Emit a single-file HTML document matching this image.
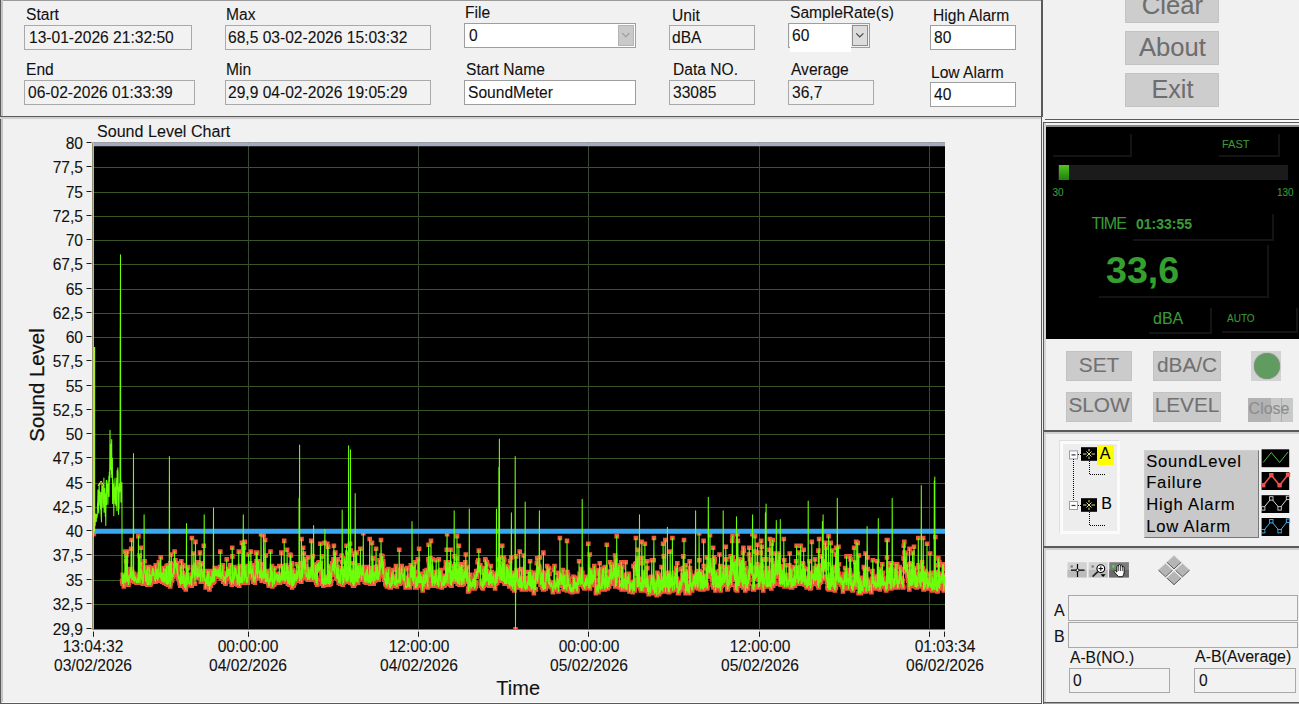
<!DOCTYPE html>
<html lang="en"><head><meta charset="utf-8"><title>SoundMeter</title>
<style>
html,body{margin:0;padding:0;}
body{width:1299px;height:704px;overflow:hidden;background:#f1f1f1;font-family:"Liberation Sans", sans-serif;position:relative;}
.t{position:absolute;white-space:nowrap;}
.b{position:absolute;box-sizing:border-box;}
.r{position:absolute;}
svg{position:absolute;left:0;top:0;}
svg text{font-family:"Liberation Sans", sans-serif;}
</style></head><body>

<div class="r" style="left:0.00px;top:0.00px;width:1043.00px;height:1.00px;background:#9a9a9a;"></div>
<div class="r" style="left:0.00px;top:0.00px;width:1.00px;height:704.00px;background:#5a5a5a;"></div>
<div class="r" style="left:1.00px;top:0.00px;width:1.50px;height:704.00px;background:#c4c4c4;"></div>
<div class="r" style="left:0.00px;top:116.00px;width:1043.00px;height:1.00px;background:#5a5a5a;"></div>
<div class="r" style="left:0.00px;top:117.00px;width:1041.00px;height:2.00px;background:#cfcfcf;"></div>
<div class="r" style="left:1041.00px;top:0.00px;width:2.00px;height:117.00px;background:#5a5a5a;"></div>
<div class="r" style="left:1041.00px;top:117.00px;width:1.00px;height:587.00px;background:#5a5a5a;"></div>
<div class="r" style="left:0.00px;top:703.00px;width:1042.00px;height:1.00px;background:#5a5a5a;"></div>
<div class="r" style="left:2.00px;top:702.00px;width:1039.00px;height:1.00px;background:#fafafa;"></div>
<div class="r" style="left:1045.00px;top:119.00px;width:254.00px;height:1.00px;background:#5a5a5a;"></div>
<div class="r" style="left:1045.00px;top:120.00px;width:254.00px;height:2.00px;background:#fafafa;"></div>
<div class="r" style="left:1043.00px;top:122.00px;width:256.00px;height:1.00px;background:#5a5a5a;"></div>
<div class="r" style="left:1043.00px;top:122.00px;width:1.00px;height:582.00px;background:#5a5a5a;"></div>
<div class="r" style="left:1044.00px;top:123.00px;width:2.00px;height:581.00px;background:#d6d6d6;"></div>
<div class="r" style="left:1046.00px;top:125.00px;width:253.00px;height:2.00px;background:#8a8a8a;"></div>
<div class="r" style="left:1044.00px;top:430.00px;width:255.00px;height:1.50px;background:#5a5a5a;"></div>
<div class="r" style="left:1044.00px;top:431.50px;width:255.00px;height:2.00px;background:#d0d0d0;"></div>
<div class="r" style="left:1044.00px;top:546.00px;width:255.00px;height:1.50px;background:#5a5a5a;"></div>
<div class="r" style="left:1044.00px;top:547.50px;width:255.00px;height:2.00px;background:#d0d0d0;"></div>
<div class="r" style="left:1043.00px;top:702.00px;width:256.00px;height:1.00px;background:#5a5a5a;"></div>
<div class="r" style="left:1044.00px;top:703.00px;width:255.00px;height:1.00px;background:#a4a4a4;"></div>
<div class="t" style="top:6.35px;font-size:16.42px;line-height:16.42px;color:#111;left:25.80px;transform:scaleX(0.95);transform-origin:left center;-webkit-text-stroke:0.1px #111;">Start</div>
<div class="b" style="left:24.00px;top:25.00px;width:168.00px;height:25.00px;background:#f2f2f2;border:1px solid #a9a9a9;"></div>
<div class="t" style="top:29.25px;font-size:16.42px;line-height:16.42px;color:#111;left:28.60px;transform:scaleX(0.95);transform-origin:left center;-webkit-text-stroke:0.1px #111;">13-01-2026 21:32:50</div>
<div class="t" style="top:61.15px;font-size:16.42px;line-height:16.42px;color:#111;left:26.30px;transform:scaleX(0.95);transform-origin:left center;-webkit-text-stroke:0.1px #111;">End</div>
<div class="b" style="left:24.00px;top:80.00px;width:171.00px;height:25.00px;background:#f2f2f2;border:1px solid #a9a9a9;"></div>
<div class="t" style="top:83.95px;font-size:16.42px;line-height:16.42px;color:#111;left:27.60px;transform:scaleX(0.95);transform-origin:left center;-webkit-text-stroke:0.1px #111;">06-02-2026 01:33:39</div>
<div class="t" style="top:5.95px;font-size:16.42px;line-height:16.42px;color:#111;left:225.60px;transform:scaleX(0.95);transform-origin:left center;-webkit-text-stroke:0.1px #111;">Max</div>
<div class="b" style="left:225.00px;top:25.00px;width:206.00px;height:25.00px;background:#f2f2f2;border:1px solid #a9a9a9;"></div>
<div class="t" style="top:28.95px;font-size:16.42px;line-height:16.42px;color:#111;left:228.00px;transform:scaleX(0.95);transform-origin:left center;-webkit-text-stroke:0.1px #111;">68,5 03-02-2026 15:03:32</div>
<div class="t" style="top:60.95px;font-size:16.42px;line-height:16.42px;color:#111;left:225.60px;transform:scaleX(0.95);transform-origin:left center;-webkit-text-stroke:0.1px #111;">Min</div>
<div class="b" style="left:225.00px;top:80.00px;width:206.00px;height:25.00px;background:#f2f2f2;border:1px solid #a9a9a9;"></div>
<div class="t" style="top:83.95px;font-size:16.42px;line-height:16.42px;color:#111;left:228.00px;transform:scaleX(0.95);transform-origin:left center;-webkit-text-stroke:0.1px #111;">29,9 04-02-2026 19:05:29</div>
<div class="t" style="top:3.95px;font-size:16.42px;line-height:16.42px;color:#111;left:465.00px;transform:scaleX(0.95);transform-origin:left center;-webkit-text-stroke:0.1px #111;">File</div>
<div class="b" style="left:464.00px;top:23.00px;width:172.00px;height:25.00px;background:#fff;border:1px solid #9e9e9e;"></div>
<div class="b" style="left:618.00px;top:25.00px;width:16.00px;height:21.00px;background:#c9c9c9;border:1px solid #b4b4b4;"></div>
<div class="t" style="top:26.95px;font-size:16.42px;line-height:16.42px;color:#111;left:468.60px;transform:scaleX(0.95);transform-origin:left center;-webkit-text-stroke:0.1px #111;">0</div>
<div class="t" style="top:60.95px;font-size:16.42px;line-height:16.42px;color:#111;left:466.00px;transform:scaleX(0.95);transform-origin:left center;-webkit-text-stroke:0.1px #111;">Start Name</div>
<div class="b" style="left:464.00px;top:80.00px;width:172.00px;height:25.00px;background:#fff;border:1px solid #9e9e9e;"></div>
<div class="t" style="top:83.55px;font-size:16.42px;line-height:16.42px;color:#111;left:467.60px;transform:scaleX(0.95);transform-origin:left center;-webkit-text-stroke:0.1px #111;">SoundMeter</div>
<div class="t" style="top:6.75px;font-size:16.42px;line-height:16.42px;color:#111;left:671.60px;transform:scaleX(0.95);transform-origin:left center;-webkit-text-stroke:0.1px #111;">Unit</div>
<div class="b" style="left:669.00px;top:25.00px;width:86.00px;height:25.00px;background:#f2f2f2;border:1px solid #a9a9a9;"></div>
<div class="t" style="top:28.95px;font-size:16.42px;line-height:16.42px;color:#111;left:672.40px;transform:scaleX(0.95);transform-origin:left center;-webkit-text-stroke:0.1px #111;">dBA</div>
<div class="t" style="top:60.95px;font-size:16.42px;line-height:16.42px;color:#111;left:673.00px;transform:scaleX(0.95);transform-origin:left center;-webkit-text-stroke:0.1px #111;">Data NO.</div>
<div class="b" style="left:669.00px;top:80.00px;width:86.00px;height:25.00px;background:#f2f2f2;border:1px solid #a9a9a9;"></div>
<div class="t" style="top:83.55px;font-size:16.42px;line-height:16.42px;color:#111;left:673.40px;transform:scaleX(0.95);transform-origin:left center;-webkit-text-stroke:0.1px #111;">33085</div>
<div class="t" style="top:4.35px;font-size:16.42px;line-height:16.42px;color:#111;left:790.00px;transform:scaleX(0.95);transform-origin:left center;-webkit-text-stroke:0.1px #111;">SampleRate(s)</div>
<div class="b" style="left:788.00px;top:23.00px;width:82.00px;height:25.00px;background:#f1f1f1;border:1px solid #9e9e9e;"></div>
<div class="r" style="left:790.00px;top:24.00px;width:61.00px;height:28.00px;background:#fff;"></div>
<div class="b" style="left:852.00px;top:25.00px;width:16.00px;height:21.00px;background:#dcdcdc;border:1px solid #8e8e8e;"></div>
<div class="t" style="top:26.95px;font-size:16.42px;line-height:16.42px;color:#111;left:792.00px;transform:scaleX(0.95);transform-origin:left center;-webkit-text-stroke:0.1px #111;">60</div>
<div class="t" style="top:60.95px;font-size:16.42px;line-height:16.42px;color:#111;left:790.60px;transform:scaleX(0.95);transform-origin:left center;-webkit-text-stroke:0.1px #111;">Average</div>
<div class="b" style="left:788.00px;top:80.00px;width:86.00px;height:25.00px;background:#f2f2f2;border:1px solid #a9a9a9;"></div>
<div class="t" style="top:83.55px;font-size:16.42px;line-height:16.42px;color:#111;left:792.00px;transform:scaleX(0.95);transform-origin:left center;-webkit-text-stroke:0.1px #111;">36,7</div>
<div class="t" style="top:6.75px;font-size:16.42px;line-height:16.42px;color:#111;left:932.60px;transform:scaleX(0.95);transform-origin:left center;-webkit-text-stroke:0.1px #111;">High Alarm</div>
<div class="b" style="left:930.00px;top:25.00px;width:86.00px;height:25.00px;background:#fff;border:1px solid #9e9e9e;"></div>
<div class="t" style="top:28.95px;font-size:16.42px;line-height:16.42px;color:#111;left:934.00px;transform:scaleX(0.95);transform-origin:left center;-webkit-text-stroke:0.1px #111;">80</div>
<div class="t" style="top:63.95px;font-size:16.42px;line-height:16.42px;color:#111;left:931.40px;transform:scaleX(0.95);transform-origin:left center;-webkit-text-stroke:0.1px #111;">Low Alarm</div>
<div class="b" style="left:930.00px;top:82.00px;width:86.00px;height:25.00px;background:#fff;border:1px solid #9e9e9e;"></div>
<div class="t" style="top:85.95px;font-size:16.42px;line-height:16.42px;color:#111;left:934.00px;transform:scaleX(0.95);transform-origin:left center;-webkit-text-stroke:0.1px #111;">40</div>
<svg width="1299" height="704" style="pointer-events:none"><path d="M622.3 33.2 L625.8 36.8 L629.3 33.2" fill="none" stroke="#9a9a9a" stroke-width="1.1"/><path d="M856.2 33.4 L859.8 37 L863.4 33.4" fill="none" stroke="#444" stroke-width="1.1"/></svg>
<div class="b" style="left:1125.40px;top:-10.60px;width:94.00px;height:33.60px;background:#cdcdcd;border:1px solid #c3c3c3;"></div>
<div class="t" style="top:-6.67px;font-size:25.6px;line-height:25.6px;color:#6e6e6e;left:972.40px;width:400px;text-align:center;-webkit-text-stroke:0.1px #6e6e6e;">Clear</div>
<div class="b" style="left:1125.40px;top:31.40px;width:94.00px;height:33.60px;background:#cdcdcd;border:1px solid #c3c3c3;"></div>
<div class="t" style="top:34.73px;font-size:25.6px;line-height:25.6px;color:#6e6e6e;left:972.40px;width:400px;text-align:center;-webkit-text-stroke:0.1px #6e6e6e;">About</div>
<div class="b" style="left:1125.40px;top:73.40px;width:94.00px;height:33.60px;background:#cdcdcd;border:1px solid #c3c3c3;"></div>
<div class="t" style="top:77.07px;font-size:25.2px;line-height:25.2px;color:#6e6e6e;left:972.40px;width:400px;text-align:center;-webkit-text-stroke:0.1px #6e6e6e;">Exit</div>
<div class="r" style="left:1046.00px;top:127.00px;width:253.00px;height:211.60px;background:#000;"></div>
<div class="r" style="left:1053.00px;top:155.00px;width:78.50px;height:1.50px;background:#141414;"></div>
<div class="r" style="left:1130.00px;top:134.00px;width:1.50px;height:21.00px;background:#141414;"></div>
<div class="r" style="left:1219.00px;top:155.00px;width:60.50px;height:1.50px;background:#141414;"></div>
<div class="r" style="left:1278.00px;top:134.00px;width:1.50px;height:21.00px;background:#141414;"></div>
<div class="r" style="left:1133.00px;top:239.00px;width:140.50px;height:1.50px;background:#141414;"></div>
<div class="r" style="left:1272.00px;top:214.00px;width:1.50px;height:25.00px;background:#141414;"></div>
<div class="r" style="left:1099.00px;top:296.00px;width:169.50px;height:1.50px;background:#141414;"></div>
<div class="r" style="left:1267.00px;top:245.00px;width:1.50px;height:51.00px;background:#141414;"></div>
<div class="r" style="left:1149.00px;top:332.00px;width:62.50px;height:1.50px;background:#141414;"></div>
<div class="r" style="left:1210.00px;top:308.00px;width:1.50px;height:24.00px;background:#141414;"></div>
<div class="r" style="left:1222.00px;top:331.00px;width:75.50px;height:1.50px;background:#141414;"></div>
<div class="r" style="left:1296.00px;top:308.00px;width:1.50px;height:23.00px;background:#141414;"></div>
<div class="t" style="top:138.94px;font-size:11px;line-height:11px;color:#3a9a38;left:1222.00px;-webkit-text-stroke:0.1px #3a9a38;">FAST</div>
<div class="r" style="left:1058.00px;top:165.00px;width:230.00px;height:15.00px;background:#1b1b1b;"></div>
<div class="r" style="left:1059.00px;top:165.00px;width:10.00px;height:15.00px;background:linear-gradient(#55c420,#2f9c12 60%,#267f10);"></div>
<div class="t" style="top:188.19px;font-size:10px;line-height:10px;color:#3a9a38;left:1052.40px;-webkit-text-stroke:0.1px #3a9a38;">30</div>
<div class="t" style="top:188.19px;font-size:10px;line-height:10px;color:#3a9a38;left:1277.00px;-webkit-text-stroke:0.1px #3a9a38;">130</div>
<div class="t" style="top:216.31px;font-size:16px;line-height:16px;color:#3a9a38;letter-spacing:-1px;left:1091.60px;-webkit-text-stroke:0.1px #3a9a38;">TIME</div>
<div class="t" style="top:216.90px;font-size:14px;line-height:14px;color:#3a9a38;font-weight:bold;left:1136.00px;-webkit-text-stroke:0.1px #3a9a38;">01:33:55</div>
<div class="t" style="top:251.77px;font-size:37.6px;line-height:37.6px;color:#35a030;font-weight:bold;left:1106.00px;-webkit-text-stroke:0.1px #35a030;">33,6</div>
<div class="t" style="top:311.11px;font-size:16px;line-height:16px;color:#3a9a38;left:1153.00px;-webkit-text-stroke:0.1px #3a9a38;">dBA</div>
<div class="t" style="top:314.39px;font-size:10px;line-height:10px;color:#3a9a38;left:1227.00px;-webkit-text-stroke:0.1px #3a9a38;">AUTO</div>
<div class="b" style="left:1065.60px;top:351.40px;width:66.80px;height:30.00px;background:#cbcbcb;border:1px solid #c3c3c3;"></div>
<div class="t" style="top:354.99px;font-size:20.8px;line-height:20.8px;color:#717171;left:899.00px;width:400px;text-align:center;-webkit-text-stroke:0.1px #717171;">SET</div>
<div class="b" style="left:1153.40px;top:351.40px;width:67.20px;height:30.00px;background:#cbcbcb;border:1px solid #c3c3c3;"></div>
<div class="t" style="top:354.99px;font-size:20.8px;line-height:20.8px;color:#717171;left:987.00px;width:400px;text-align:center;-webkit-text-stroke:0.1px #717171;">dBA/C</div>
<div class="b" style="left:1065.60px;top:392.40px;width:66.80px;height:29.60px;background:#cbcbcb;border:1px solid #c3c3c3;"></div>
<div class="t" style="top:395.39px;font-size:20.8px;line-height:20.8px;color:#717171;left:899.00px;width:400px;text-align:center;-webkit-text-stroke:0.1px #717171;">SLOW</div>
<div class="b" style="left:1153.40px;top:392.40px;width:67.20px;height:29.60px;background:#cbcbcb;border:1px solid #c3c3c3;"></div>
<div class="t" style="top:395.39px;font-size:20.8px;line-height:20.8px;color:#717171;left:987.00px;width:400px;text-align:center;-webkit-text-stroke:0.1px #717171;">LEVEL</div>
<div class="r" style="left:1251.00px;top:351.00px;width:29.60px;height:29.60px;background:#d2d2d2;"></div>
<div class="r" style="left:1253.6px;top:353.4px;width:26px;height:26px;border-radius:50%;background:#609c60;box-shadow:0 0 0 1px #7c917c inset, 0 0 0 1px #c2cbc2;"></div>
<div class="r" style="left:1248.00px;top:398.00px;width:44.60px;height:24.40px;background:#c9c9c9;"></div>
<div class="r" style="left:1248.00px;top:398.00px;width:23.00px;height:24.40px;background:#b2b2b2;"></div>
<div class="r" style="left:1281.00px;top:398.00px;width:1.00px;height:24.40px;background:#adadad;"></div>
<div class="t" style="top:400.51px;font-size:16px;line-height:16px;color:#8d8d8d;left:1248.60px;-webkit-text-stroke:0.1px #8d8d8d;">Close</div>
<div class="b" style="left:1060.00px;top:441.30px;width:60.00px;height:93.00px;background:#ededed;border:3px solid #fbfbfb;box-shadow:-1px -1px 0 #dedede;"></div>
<div class="r" style="left:1097.00px;top:445.10px;width:16.90px;height:19.80px;background:#ffff00;"></div>
<div class="t" style="top:446.31px;font-size:16px;line-height:16px;color:#000;left:1099.70px;-webkit-text-stroke:0.1px #000;">A</div>
<div class="t" style="top:496.31px;font-size:16px;line-height:16px;color:#000;left:1101.20px;-webkit-text-stroke:0.1px #000;">B</div>
<div class="b" style="left:1143.70px;top:449.70px;width:115.30px;height:88.00px;background:#c9c9c9;border:1px solid #cfcfcf;border-right-color:#777;border-bottom-color:#777;"></div>
<div class="t" style="top:453.50px;font-size:16.6px;line-height:16.6px;color:#000;letter-spacing:0.8px;left:1146.20px;-webkit-text-stroke:0.1px #000;">SoundLevel</div>
<div class="t" style="top:475.40px;font-size:16.6px;line-height:16.6px;color:#000;letter-spacing:0.8px;left:1146.20px;-webkit-text-stroke:0.1px #000;">Failure</div>
<div class="t" style="top:497.00px;font-size:16.6px;line-height:16.6px;color:#000;letter-spacing:0.8px;left:1146.20px;-webkit-text-stroke:0.1px #000;">High Alarm</div>
<div class="t" style="top:519.40px;font-size:16.6px;line-height:16.6px;color:#000;letter-spacing:0.8px;left:1146.20px;-webkit-text-stroke:0.1px #000;">Low Alarm</div>
<svg width="1299" height="704"><rect x="1069.5" y="450.9" width="8" height="8" fill="#fff" stroke="#9a9aa8" stroke-width="1"/><path d="M1071.5 454.9 h4" stroke="#334" stroke-width="1.2"/><path d="M1078 454.5 H1081" stroke="#000" stroke-dasharray="1 1"/><rect x="1081" y="447.2" width="16" height="13.6" fill="#000"/><path d="M1083 454.0 h3.5 M1091.5 454.0 h3.5 M1089 449.0 v2.4 M1089 456.6 v2.4 M1086.5 451.5 l5 5 M1091.5 451.5 l-5 5" stroke="#e4e48a" stroke-width="1" fill="none"/><rect x="1069.5" y="501.5" width="8" height="8" fill="#fff" stroke="#9a9aa8" stroke-width="1"/><path d="M1071.5 505.5 h4" stroke="#334" stroke-width="1.2"/><path d="M1078 505.5 H1081" stroke="#000" stroke-dasharray="1 1"/><rect x="1081" y="498.2" width="16" height="13.6" fill="#000"/><path d="M1083 505.0 h3.5 M1091.5 505.0 h3.5 M1089 500.0 v2.4 M1089 507.6 v2.4 M1086.5 502.5 l5 5 M1091.5 502.5 l-5 5" stroke="#e4e48a" stroke-width="1" fill="none"/><path d="M1073.5 459 V501" stroke="#000" stroke-width="1" stroke-dasharray="1 1"/><path d="M1089.5 461 V474.5 H1106" stroke="#000" stroke-width="1" stroke-dasharray="1 1" fill="none"/><path d="M1089.5 512 V525.5 H1105" stroke="#000" stroke-width="1" stroke-dasharray="1 1" fill="none"/><rect x="1261.6" y="449.3" width="27.6" height="17.9" fill="#000"/><path d="M1263.2 462.5 L1271.3 452.5 L1279.6 462.5 L1288.0 452.0" fill="none" stroke="#55b84c" stroke-width="1"/><rect x="1261.6" y="472" width="27.6" height="18.0" fill="#000"/><path d="M1263.2 485.2 L1271.3 475.2 L1279.6 485.2 L1288.0 474.7" fill="none" stroke="#f0504c" stroke-width="1.6"/><rect x="1261.0" y="483.0" width="4.4" height="4.4" fill="#f0504c"/><rect x="1269.1" y="473.0" width="4.4" height="4.4" fill="#f0504c"/><rect x="1277.4" y="483.0" width="4.4" height="4.4" fill="#f0504c"/><rect x="1285.8" y="472.5" width="4.4" height="4.4" fill="#f0504c"/><rect x="1261.6" y="495.2" width="27.6" height="17.8" fill="#000"/><path d="M1263.2 508.4 L1271.3 498.4 L1279.6 508.4 L1288.0 497.9" fill="none" stroke="#d8d8d8" stroke-width="1"/><rect x="1261.5" y="506.7" width="3.4" height="3.4" fill="#000" stroke="#d8d8d8" stroke-width="0.9"/><rect x="1269.6" y="496.7" width="3.4" height="3.4" fill="#000" stroke="#d8d8d8" stroke-width="0.9"/><rect x="1277.9" y="506.7" width="3.4" height="3.4" fill="#000" stroke="#d8d8d8" stroke-width="0.9"/><rect x="1286.3" y="496.2" width="3.4" height="3.4" fill="#000" stroke="#d8d8d8" stroke-width="0.9"/><rect x="1261.6" y="518" width="27.6" height="18.0" fill="#000"/><path d="M1263.2 531.2 L1271.3 521.2 L1279.6 531.2 L1288.0 520.7" fill="none" stroke="#4fb2f2" stroke-width="1"/><rect x="1261.5" y="529.5" width="3.4" height="3.4" fill="#000" stroke="#4fb2f2" stroke-width="0.9"/><rect x="1269.6" y="519.5" width="3.4" height="3.4" fill="#000" stroke="#4fb2f2" stroke-width="0.9"/><rect x="1277.9" y="529.5" width="3.4" height="3.4" fill="#000" stroke="#4fb2f2" stroke-width="0.9"/><rect x="1286.3" y="519.0" width="3.4" height="3.4" fill="#000" stroke="#4fb2f2" stroke-width="0.9"/><rect x="1067.5" y="562.2" width="19.3" height="15.2" fill="#d2d2d2"/><rect x="1067.5" y="569.8" width="19.3" height="7.6" fill="#bcbcbc"/><rect x="1088.7" y="562.2" width="19.1" height="15.2" fill="#d2d2d2"/><rect x="1088.7" y="569.8" width="19.1" height="7.6" fill="#bcbcbc"/><rect x="1109.3" y="562.2" width="19.6" height="15.2" fill="#7c7c7c"/><rect x="1109.3" y="569.8" width="19.6" height="7.6" fill="#6a6a6a"/><path d="M1077.5 564 V577 M1071 570.2 H1084.5" stroke="#000" stroke-width="1.2"/><circle cx="1077.5" cy="570.2" r="1.4" fill="#fff" stroke="#000" stroke-width="0.8"/><rect x="1070.6" y="565.4" width="2.2" height="2.2" fill="#777"/><circle cx="1100.8" cy="568.6" r="3.9" fill="#fff" stroke="#000" stroke-width="1.1"/><path d="M1098.6 568.6 h4.4 M1100.8 566.4 v4.4" stroke="#000" stroke-width="1"/><path d="M1097.8 571.6 L1092.6 576.6" stroke="#222" stroke-width="1.7"/><path d="M1100.6 574.3 h5 l-2.5 2.6 z" fill="#000"/><rect x="1091.6" y="565.4" width="2.2" height="2.2" fill="#777"/><path d="M1115.3 570.6 l1.6 1.5 V566.3 q0.9 -1.2 1.8 0 V565 q0.9 -1.2 1.8 0 V565.6 q0.9 -1.2 1.8 0 V567 q0.9 -1.1 1.8 0 V572.5 q-0.2 2.6 -1.6 4.2 H1118.6 q-2.2 -2.4 -4.6 -5 q0.4 -1.3 1.3 -1.1 z" fill="#fff" stroke="#000" stroke-width="0.9" stroke-linejoin="round"/><path d="M1118.7 566.5 V571 M1120.5 565.5 V571 M1122.3 566 V571" stroke="#000" stroke-width="0.7"/><rect x="1112.2" y="565.2" width="2.4" height="2.4" fill="#44e044"/><path d="M1174.0 555.5 L1181.2 562.2 L1174.0 568.9 L1166.8 562.2 Z" fill="#b5b5b5"/><path d="M1181.2 562.2 L1174.0 568.9 L1166.8 562.2" fill="none" stroke="#4a4a4a" stroke-width="0.9"/><path d="M1166.8 562.2 L1174.0 555.5 L1181.2 562.2" fill="none" stroke="#d4d4d4" stroke-width="0.7"/><path d="M1165.5 563.4 L1172.7 570.1 L1165.5 576.8 L1158.3 570.1 Z" fill="#b5b5b5"/><path d="M1172.7 570.1 L1165.5 576.8 L1158.3 570.1" fill="none" stroke="#4a4a4a" stroke-width="0.9"/><path d="M1158.3 570.1 L1165.5 563.4 L1172.7 570.1" fill="none" stroke="#d4d4d4" stroke-width="0.7"/><path d="M1182.5 563.4 L1189.7 570.1 L1182.5 576.8 L1175.3 570.1 Z" fill="#b5b5b5"/><path d="M1189.7 570.1 L1182.5 576.8 L1175.3 570.1" fill="none" stroke="#4a4a4a" stroke-width="0.9"/><path d="M1175.3 570.1 L1182.5 563.4 L1189.7 570.1" fill="none" stroke="#d4d4d4" stroke-width="0.7"/><path d="M1174.0 571.3 L1181.2 578.0 L1174.0 584.7 L1166.8 578.0 Z" fill="#b5b5b5"/><path d="M1181.2 578.0 L1174.0 584.7 L1166.8 578.0" fill="none" stroke="#4a4a4a" stroke-width="0.9"/><path d="M1166.8 578.0 L1174.0 571.3 L1181.2 578.0" fill="none" stroke="#d4d4d4" stroke-width="0.7"/></svg>
<div class="t" style="top:602.69px;font-size:16.84px;line-height:16.84px;color:#111;left:1053.80px;transform:scaleX(0.95);transform-origin:left center;-webkit-text-stroke:0.1px #111;">A</div>
<div class="b" style="left:1068.00px;top:595.00px;width:230.00px;height:26.00px;background:#f2f2f2;border:1px solid #a9a9a9;"></div>
<div class="t" style="top:629.49px;font-size:16.84px;line-height:16.84px;color:#111;left:1053.80px;transform:scaleX(0.95);transform-origin:left center;-webkit-text-stroke:0.1px #111;">B</div>
<div class="b" style="left:1068.00px;top:622.00px;width:230.00px;height:26.00px;background:#f2f2f2;border:1px solid #a9a9a9;"></div>
<div class="t" style="top:649.35px;font-size:16.42px;line-height:16.42px;color:#111;left:1069.50px;transform:scaleX(0.95);transform-origin:left center;-webkit-text-stroke:0.1px #111;">A-B(NO.)</div>
<div class="t" style="top:649.04px;font-size:16.79px;line-height:16.79px;color:#111;left:1194.80px;transform:scaleX(0.95);transform-origin:left center;-webkit-text-stroke:0.1px #111;">A-B(Average)</div>
<div class="b" style="left:1069.00px;top:668.00px;width:101.00px;height:25.00px;background:#f2f2f2;border:1px solid #a9a9a9;"></div>
<div class="b" style="left:1194.00px;top:668.00px;width:102.00px;height:25.00px;background:#f2f2f2;border:1px solid #a9a9a9;"></div>
<div class="t" style="top:672.35px;font-size:16.42px;line-height:16.42px;color:#111;left:1073.40px;transform:scaleX(0.95);transform-origin:left center;-webkit-text-stroke:0.1px #111;">0</div>
<div class="t" style="top:672.35px;font-size:16.42px;line-height:16.42px;color:#111;left:1198.50px;transform:scaleX(0.95);transform-origin:left center;-webkit-text-stroke:0.1px #111;">0</div>
<div class="t" style="top:124.11px;font-size:16.7px;line-height:16.7px;color:#111;left:96.60px;transform:scaleX(0.964);transform-origin:left center;-webkit-text-stroke:0.1px #111;">Sound Level Chart</div>
<div class="t" style="top:134.85px;font-size:16.42px;line-height:16.42px;color:#111;left:-316.80px;width:400px;text-align:right;transform:scaleX(0.95);transform-origin:right center;-webkit-text-stroke:0.1px #111;">80</div>
<div class="t" style="top:158.85px;font-size:16.42px;line-height:16.42px;color:#111;left:-316.80px;width:400px;text-align:right;transform:scaleX(0.95);transform-origin:right center;-webkit-text-stroke:0.1px #111;">77,5</div>
<div class="t" style="top:183.85px;font-size:16.42px;line-height:16.42px;color:#111;left:-316.80px;width:400px;text-align:right;transform:scaleX(0.95);transform-origin:right center;-webkit-text-stroke:0.1px #111;">75</div>
<div class="t" style="top:207.85px;font-size:16.42px;line-height:16.42px;color:#111;left:-316.80px;width:400px;text-align:right;transform:scaleX(0.95);transform-origin:right center;-webkit-text-stroke:0.1px #111;">72,5</div>
<div class="t" style="top:231.85px;font-size:16.42px;line-height:16.42px;color:#111;left:-316.80px;width:400px;text-align:right;transform:scaleX(0.95);transform-origin:right center;-webkit-text-stroke:0.1px #111;">70</div>
<div class="t" style="top:255.85px;font-size:16.42px;line-height:16.42px;color:#111;left:-316.80px;width:400px;text-align:right;transform:scaleX(0.95);transform-origin:right center;-webkit-text-stroke:0.1px #111;">67,5</div>
<div class="t" style="top:280.85px;font-size:16.42px;line-height:16.42px;color:#111;left:-316.80px;width:400px;text-align:right;transform:scaleX(0.95);transform-origin:right center;-webkit-text-stroke:0.1px #111;">65</div>
<div class="t" style="top:304.85px;font-size:16.42px;line-height:16.42px;color:#111;left:-316.80px;width:400px;text-align:right;transform:scaleX(0.95);transform-origin:right center;-webkit-text-stroke:0.1px #111;">62,5</div>
<div class="t" style="top:328.85px;font-size:16.42px;line-height:16.42px;color:#111;left:-316.80px;width:400px;text-align:right;transform:scaleX(0.95);transform-origin:right center;-webkit-text-stroke:0.1px #111;">60</div>
<div class="t" style="top:352.85px;font-size:16.42px;line-height:16.42px;color:#111;left:-316.80px;width:400px;text-align:right;transform:scaleX(0.95);transform-origin:right center;-webkit-text-stroke:0.1px #111;">57,5</div>
<div class="t" style="top:377.85px;font-size:16.42px;line-height:16.42px;color:#111;left:-316.80px;width:400px;text-align:right;transform:scaleX(0.95);transform-origin:right center;-webkit-text-stroke:0.1px #111;">55</div>
<div class="t" style="top:401.85px;font-size:16.42px;line-height:16.42px;color:#111;left:-316.80px;width:400px;text-align:right;transform:scaleX(0.95);transform-origin:right center;-webkit-text-stroke:0.1px #111;">52,5</div>
<div class="t" style="top:425.85px;font-size:16.42px;line-height:16.42px;color:#111;left:-316.80px;width:400px;text-align:right;transform:scaleX(0.95);transform-origin:right center;-webkit-text-stroke:0.1px #111;">50</div>
<div class="t" style="top:449.85px;font-size:16.42px;line-height:16.42px;color:#111;left:-316.80px;width:400px;text-align:right;transform:scaleX(0.95);transform-origin:right center;-webkit-text-stroke:0.1px #111;">47,5</div>
<div class="t" style="top:474.85px;font-size:16.42px;line-height:16.42px;color:#111;left:-316.80px;width:400px;text-align:right;transform:scaleX(0.95);transform-origin:right center;-webkit-text-stroke:0.1px #111;">45</div>
<div class="t" style="top:498.85px;font-size:16.42px;line-height:16.42px;color:#111;left:-316.80px;width:400px;text-align:right;transform:scaleX(0.95);transform-origin:right center;-webkit-text-stroke:0.1px #111;">42,5</div>
<div class="t" style="top:522.85px;font-size:16.42px;line-height:16.42px;color:#111;left:-316.80px;width:400px;text-align:right;transform:scaleX(0.95);transform-origin:right center;-webkit-text-stroke:0.1px #111;">40</div>
<div class="t" style="top:546.85px;font-size:16.42px;line-height:16.42px;color:#111;left:-316.80px;width:400px;text-align:right;transform:scaleX(0.95);transform-origin:right center;-webkit-text-stroke:0.1px #111;">37,5</div>
<div class="t" style="top:571.85px;font-size:16.42px;line-height:16.42px;color:#111;left:-316.80px;width:400px;text-align:right;transform:scaleX(0.95);transform-origin:right center;-webkit-text-stroke:0.1px #111;">35</div>
<div class="t" style="top:595.85px;font-size:16.42px;line-height:16.42px;color:#111;left:-316.80px;width:400px;text-align:right;transform:scaleX(0.95);transform-origin:right center;-webkit-text-stroke:0.1px #111;">32,5</div>
<div class="t" style="top:620.85px;font-size:16.42px;line-height:16.42px;color:#111;left:-316.80px;width:400px;text-align:right;transform:scaleX(0.95);transform-origin:right center;-webkit-text-stroke:0.1px #111;">29,9</div>
<div class="t" style="top:637.75px;font-size:16.42px;line-height:16.42px;color:#111;left:-106.70px;width:400px;text-align:center;transform:scaleX(0.95);transform-origin:center center;-webkit-text-stroke:0.1px #111;">13:04:32</div>
<div class="t" style="top:656.75px;font-size:16.42px;line-height:16.42px;color:#111;left:-106.70px;width:400px;text-align:center;transform:scaleX(0.95);transform-origin:center center;-webkit-text-stroke:0.1px #111;">03/02/2026</div>
<div class="t" style="top:637.75px;font-size:16.42px;line-height:16.42px;color:#111;left:48.42px;width:400px;text-align:center;transform:scaleX(0.95);transform-origin:center center;-webkit-text-stroke:0.1px #111;">00:00:00</div>
<div class="t" style="top:656.75px;font-size:16.42px;line-height:16.42px;color:#111;left:48.42px;width:400px;text-align:center;transform:scaleX(0.95);transform-origin:center center;-webkit-text-stroke:0.1px #111;">04/02/2026</div>
<div class="t" style="top:637.75px;font-size:16.42px;line-height:16.42px;color:#111;left:218.82px;width:400px;text-align:center;transform:scaleX(0.95);transform-origin:center center;-webkit-text-stroke:0.1px #111;">12:00:00</div>
<div class="t" style="top:656.75px;font-size:16.42px;line-height:16.42px;color:#111;left:218.82px;width:400px;text-align:center;transform:scaleX(0.95);transform-origin:center center;-webkit-text-stroke:0.1px #111;">04/02/2026</div>
<div class="t" style="top:637.75px;font-size:16.42px;line-height:16.42px;color:#111;left:389.22px;width:400px;text-align:center;transform:scaleX(0.95);transform-origin:center center;-webkit-text-stroke:0.1px #111;">00:00:00</div>
<div class="t" style="top:656.75px;font-size:16.42px;line-height:16.42px;color:#111;left:389.22px;width:400px;text-align:center;transform:scaleX(0.95);transform-origin:center center;-webkit-text-stroke:0.1px #111;">05/02/2026</div>
<div class="t" style="top:637.75px;font-size:16.42px;line-height:16.42px;color:#111;left:559.62px;width:400px;text-align:center;transform:scaleX(0.95);transform-origin:center center;-webkit-text-stroke:0.1px #111;">12:00:00</div>
<div class="t" style="top:656.75px;font-size:16.42px;line-height:16.42px;color:#111;left:559.62px;width:400px;text-align:center;transform:scaleX(0.95);transform-origin:center center;-webkit-text-stroke:0.1px #111;">05/02/2026</div>
<div class="t" style="top:637.75px;font-size:16.42px;line-height:16.42px;color:#111;left:745.02px;width:400px;text-align:center;transform:scaleX(0.95);transform-origin:center center;-webkit-text-stroke:0.1px #111;">01:03:34</div>
<div class="t" style="top:656.75px;font-size:16.42px;line-height:16.42px;color:#111;left:745.02px;width:400px;text-align:center;transform:scaleX(0.95);transform-origin:center center;-webkit-text-stroke:0.1px #111;">06/02/2026</div>
<div class="t" style="top:677.67px;font-size:20px;line-height:20px;color:#111;left:318.20px;width:400px;text-align:center;-webkit-text-stroke:0.1px #111;">Time</div>
<div class="t" style="left:-63px;top:372.5px;width:200px;height:24px;line-height:24px;font-size:20.4px;text-align:center;color:#111;-webkit-text-stroke:0.25px #111;transform:rotate(-90deg);">Sound Level</div>
<svg width="1299" height="704"><rect x="92.5" y="142.6" width="852.5" height="486.9" fill="#000"/><path d="M93.0 167.5H945.0M93.0 192.5H945.0M93.0 216.5H945.0M93.0 240.5H945.0M93.0 264.5H945.0M93.0 289.5H945.0M93.0 313.5H945.0M93.0 337.5H945.0M93.0 361.5H945.0M93.0 386.5H945.0M93.0 410.5H945.0M93.0 434.5H945.0M93.0 458.5H945.0M93.0 483.5H945.0M93.0 507.5H945.0M93.0 531.5H945.0M93.0 555.5H945.0M93.0 580.5H945.0M93.0 604.5H945.0" stroke="#3a5626" stroke-width="1" fill="none"/><path d="M248.5 142.6V629.5M418.5 142.6V629.5M588.5 142.6V629.5M759.5 142.6V629.5M929.5 142.6V629.5" stroke="#384a36" stroke-width="1" fill="none"/><clipPath id="cp"><rect x="92.5" y="142.6" width="852.5" height="486.9"/></clipPath><g clip-path="url(#cp)"><path d="M93.0 143.1H945.0" stroke="#a3acbc" stroke-width="6.4"/><path d="M93.0 533.2h.01M93.2 534.1h.01M93.5 533.2h.01M93.9 533.2h.01M122.1 580.7h.01M122.3 581.7h.01M122.6 583.6h.01M122.8 574.9h.01M123.1 578.8h.01M123.3 577.8h.01M123.5 574.9h.01M123.8 586.5h.01M124.0 575.8h.01M124.2 574.9h.01M124.5 578.8h.01M124.7 581.7h.01M125.0 551.6h.01M125.2 576.8h.01M125.4 582.6h.01M125.7 578.8h.01M125.9 579.7h.01M126.1 561.3h.01M126.4 555.5h.01M126.6 577.8h.01M126.8 580.7h.01M127.1 581.7h.01M127.3 551.6h.01M127.6 575.8h.01M127.8 581.7h.01M128.0 578.8h.01M128.3 575.8h.01M128.5 584.6h.01M128.7 581.7h.01M129.0 582.6h.01M129.2 580.7h.01M129.4 577.8h.01M129.7 574.9h.01M129.9 573.9h.01M130.2 573.9h.01M130.4 569.1h.01M130.6 577.8h.01M130.9 574.9h.01M131.1 548.7h.01M131.3 574.9h.01M131.6 540.0h.01M131.8 579.7h.01M132.1 575.8h.01M132.3 572.0h.01M132.5 575.8h.01M132.8 579.7h.01M133.0 575.8h.01M133.2 578.8h.01M133.7 580.7h.01M133.9 577.8h.01M134.2 573.9h.01M134.4 581.7h.01M134.7 581.7h.01M134.9 578.8h.01M135.1 580.7h.01M135.4 577.8h.01M135.6 576.8h.01M135.8 578.8h.01M136.1 580.7h.01M136.3 580.7h.01M136.5 582.6h.01M136.8 579.7h.01M137.0 580.7h.01M137.3 581.7h.01M137.5 577.8h.01M137.7 582.6h.01M138.0 578.8h.01M138.2 580.7h.01M138.4 536.1h.01M138.7 582.6h.01M138.9 577.8h.01M139.2 574.9h.01M139.4 576.8h.01M139.6 555.5h.01M139.9 579.7h.01M140.1 582.6h.01M140.3 576.8h.01M140.6 574.9h.01M140.8 574.9h.01M141.0 547.7h.01M141.3 564.2h.01M141.5 577.8h.01M141.8 579.7h.01M142.0 571.0h.01M142.2 576.8h.01M142.5 581.7h.01M142.7 583.6h.01M142.9 583.6h.01M143.2 582.6h.01M143.4 581.7h.01M143.6 573.9h.01M143.9 572.9h.01M144.4 568.1h.01M144.6 561.3h.01M144.8 572.9h.01M145.1 572.9h.01M145.3 573.9h.01M145.5 579.7h.01M145.8 581.7h.01M146.0 578.8h.01M146.2 570.0h.01M146.5 580.7h.01M146.7 577.8h.01M147.0 583.6h.01M147.2 584.6h.01M147.4 567.1h.01M147.7 584.6h.01M147.9 583.6h.01M148.1 581.7h.01M148.4 584.6h.01M148.6 584.6h.01M148.9 567.1h.01M149.1 567.1h.01M149.3 575.8h.01M149.6 569.1h.01M149.8 584.6h.01M150.0 580.7h.01M150.3 584.6h.01M150.5 583.6h.01M150.7 574.9h.01M151.0 580.7h.01M151.2 582.6h.01M151.5 579.7h.01M151.7 580.7h.01M151.9 571.0h.01M152.2 574.9h.01M152.4 575.8h.01M152.6 568.1h.01M152.9 572.0h.01M153.1 575.8h.01M153.3 569.1h.01M153.6 569.1h.01M153.8 574.9h.01M154.1 572.0h.01M154.3 573.9h.01M154.5 578.8h.01M154.8 579.7h.01M155.0 580.7h.01M155.2 580.7h.01M155.5 581.7h.01M155.7 565.2h.01M156.0 571.0h.01M156.2 575.8h.01M156.4 570.0h.01M156.7 578.8h.01M156.9 573.9h.01M157.1 570.0h.01M157.4 569.1h.01M157.6 580.7h.01M157.8 577.8h.01M158.1 578.8h.01M158.3 578.8h.01M158.6 574.9h.01M158.8 564.2h.01M159.0 562.3h.01M159.3 576.8h.01M159.5 574.9h.01M159.7 572.9h.01M160.0 574.9h.01M160.2 575.8h.01M160.4 577.8h.01M160.7 557.4h.01M160.9 572.9h.01M161.2 579.7h.01M161.4 579.7h.01M161.6 576.8h.01M161.9 572.9h.01M162.1 581.7h.01M162.3 572.9h.01M162.6 575.8h.01M162.8 574.9h.01M163.1 577.8h.01M163.3 581.7h.01M163.5 568.1h.01M163.8 581.7h.01M164.0 577.8h.01M164.2 582.6h.01M164.5 578.8h.01M164.7 580.7h.01M164.9 569.1h.01M165.2 578.8h.01M165.4 569.1h.01M165.7 579.7h.01M165.9 582.6h.01M166.1 583.6h.01M166.4 583.6h.01M166.6 566.1h.01M166.8 575.8h.01M167.1 583.6h.01M167.3 578.8h.01M167.6 583.6h.01M167.8 584.6h.01M168.0 565.2h.01M168.3 572.9h.01M168.5 583.6h.01M168.7 566.1h.01M169.0 581.7h.01M169.2 576.8h.01M169.7 579.7h.01M169.9 580.7h.01M170.2 586.5h.01M170.4 563.2h.01M170.6 583.6h.01M170.9 572.9h.01M171.1 572.9h.01M171.3 554.5h.01M171.6 573.9h.01M171.8 575.8h.01M172.0 580.7h.01M172.3 573.9h.01M172.5 573.9h.01M172.8 575.8h.01M173.0 576.8h.01M173.2 573.9h.01M173.5 573.9h.01M173.7 570.0h.01M173.9 564.2h.01M174.2 573.9h.01M174.4 569.1h.01M174.6 551.6h.01M174.9 565.2h.01M175.1 568.1h.01M175.4 560.3h.01M175.6 563.2h.01M175.8 564.2h.01M176.1 563.2h.01M176.3 566.1h.01M176.5 570.0h.01M176.8 563.2h.01M177.0 572.9h.01M177.3 563.2h.01M177.5 574.9h.01M177.7 570.0h.01M178.0 577.8h.01M178.2 577.8h.01M178.4 575.8h.01M178.7 578.8h.01M178.9 579.7h.01M179.1 576.8h.01M179.4 580.7h.01M179.6 582.6h.01M179.9 583.6h.01M180.1 580.7h.01M180.3 585.6h.01M180.6 567.1h.01M180.8 583.6h.01M181.0 581.7h.01M181.3 561.3h.01M181.5 575.8h.01M181.8 581.7h.01M182.0 583.6h.01M182.2 576.8h.01M182.5 576.8h.01M182.7 583.6h.01M182.9 572.9h.01M183.2 566.1h.01M183.4 565.2h.01M183.6 582.6h.01M183.9 583.6h.01M184.1 586.5h.01M184.4 580.7h.01M184.6 587.5h.01M184.8 574.9h.01M185.1 579.7h.01M185.3 583.6h.01M185.5 577.8h.01M185.8 589.4h.01M186.0 582.6h.01M186.2 586.5h.01M186.7 584.6h.01M187.0 583.6h.01M187.2 584.6h.01M187.4 581.7h.01M187.7 568.1h.01M187.9 580.7h.01M188.1 567.1h.01M188.4 574.9h.01M188.6 582.6h.01M188.8 583.6h.01M189.1 582.6h.01M189.3 582.6h.01M189.6 582.6h.01M189.8 584.6h.01M190.0 584.6h.01M190.3 576.8h.01M190.5 580.7h.01M190.7 582.6h.01M191.0 580.7h.01M191.2 575.8h.01M191.5 584.6h.01M191.7 585.6h.01M191.9 538.0h.01M192.2 578.8h.01M192.4 575.8h.01M192.6 577.8h.01M192.9 572.9h.01M193.1 570.0h.01M193.3 571.0h.01M193.6 567.1h.01M193.8 553.5h.01M194.1 572.9h.01M194.3 576.8h.01M194.5 573.9h.01M194.8 574.9h.01M195.0 583.6h.01M195.2 572.9h.01M195.5 541.9h.01M195.7 575.8h.01M195.9 572.0h.01M196.2 565.2h.01M196.4 574.9h.01M196.7 572.9h.01M196.9 576.8h.01M197.1 577.8h.01M197.4 575.8h.01M197.6 568.1h.01M197.8 577.8h.01M198.1 562.3h.01M198.3 572.9h.01M198.6 575.8h.01M198.8 573.9h.01M199.0 573.9h.01M199.3 576.8h.01M199.5 574.9h.01M199.7 571.0h.01M200.0 552.6h.01M200.2 576.8h.01M200.4 574.9h.01M200.7 581.7h.01M200.9 577.8h.01M201.2 576.8h.01M201.4 564.2h.01M201.6 563.2h.01M201.9 571.0h.01M202.1 572.9h.01M202.3 572.0h.01M202.6 572.9h.01M202.8 581.7h.01M203.1 577.8h.01M203.3 577.8h.01M203.5 575.8h.01M203.8 545.8h.01M204.0 577.8h.01M204.5 580.7h.01M204.7 578.8h.01M204.9 579.7h.01M205.2 580.7h.01M205.4 578.8h.01M205.7 587.5h.01M205.9 582.6h.01M206.1 583.6h.01M206.4 583.6h.01M206.6 576.8h.01M206.8 583.6h.01M207.1 583.6h.01M207.3 571.0h.01M207.5 576.8h.01M207.8 585.6h.01M208.0 585.6h.01M208.3 585.6h.01M208.5 572.9h.01M208.7 582.6h.01M209.0 571.0h.01M209.2 581.7h.01M209.4 589.4h.01M209.7 586.5h.01M209.9 583.6h.01M210.1 582.6h.01M210.4 582.6h.01M210.6 576.8h.01M210.9 585.6h.01M211.1 581.7h.01M211.3 582.6h.01M211.6 582.6h.01M211.8 579.7h.01M212.0 571.0h.01M212.3 579.7h.01M212.5 573.9h.01M212.8 580.7h.01M213.0 582.6h.01M213.2 581.7h.01M213.7 579.7h.01M213.9 581.7h.01M214.2 577.8h.01M214.4 580.7h.01M214.6 574.9h.01M214.9 568.1h.01M215.1 575.8h.01M215.4 574.9h.01M215.6 569.1h.01M215.8 571.0h.01M216.1 575.8h.01M216.3 572.9h.01M216.5 575.8h.01M216.8 572.9h.01M217.0 569.1h.01M217.2 573.9h.01M217.5 575.8h.01M217.7 575.8h.01M218.0 576.8h.01M218.2 574.9h.01M218.4 569.1h.01M218.7 575.8h.01M218.9 575.8h.01M219.1 576.8h.01M219.4 572.0h.01M219.6 572.0h.01M219.9 567.1h.01M220.1 576.8h.01M220.3 551.6h.01M220.6 574.9h.01M220.8 578.8h.01M221.0 577.8h.01M221.3 577.8h.01M221.5 578.8h.01M221.7 572.0h.01M222.0 575.8h.01M222.2 570.0h.01M222.5 575.8h.01M222.7 567.1h.01M222.9 565.2h.01M223.2 581.7h.01M223.4 575.8h.01M223.6 579.7h.01M223.9 579.7h.01M224.1 576.8h.01M224.3 577.8h.01M224.6 577.8h.01M224.8 576.8h.01M225.1 582.6h.01M225.3 579.7h.01M225.5 583.6h.01M225.8 573.9h.01M226.0 572.9h.01M226.2 577.8h.01M226.5 576.8h.01M226.7 559.4h.01M227.0 576.8h.01M227.2 573.9h.01M227.4 576.8h.01M227.7 575.8h.01M227.9 573.9h.01M228.1 569.1h.01M228.4 575.8h.01M228.6 572.0h.01M228.8 573.9h.01M229.1 569.1h.01M229.3 572.9h.01M229.6 570.0h.01M229.8 578.8h.01M230.0 577.8h.01M230.3 565.2h.01M230.5 577.8h.01M230.7 581.7h.01M231.0 581.7h.01M231.2 580.7h.01M231.4 579.7h.01M231.7 584.6h.01M231.9 579.7h.01M232.2 547.7h.01M232.4 556.4h.01M232.6 581.7h.01M232.9 572.0h.01M233.1 577.8h.01M233.3 583.6h.01M233.6 579.7h.01M233.8 578.8h.01M234.1 577.8h.01M234.3 567.1h.01M234.5 578.8h.01M234.8 574.9h.01M235.0 572.9h.01M235.2 572.0h.01M235.5 568.1h.01M235.7 574.9h.01M235.9 569.1h.01M236.2 570.0h.01M236.4 576.8h.01M236.7 573.9h.01M236.9 582.6h.01M237.1 581.7h.01M237.4 578.8h.01M237.6 584.6h.01M237.8 574.9h.01M238.1 581.7h.01M238.3 579.7h.01M238.5 571.0h.01M238.8 551.6h.01M239.0 583.6h.01M239.3 585.6h.01M239.5 581.7h.01M239.7 566.1h.01M240.0 578.8h.01M240.2 576.8h.01M240.4 582.6h.01M240.7 582.6h.01M240.9 579.7h.01M241.2 580.7h.01M241.4 576.8h.01M241.6 582.6h.01M241.9 542.9h.01M242.1 574.9h.01M242.3 581.7h.01M242.6 582.6h.01M242.8 582.6h.01M243.0 567.1h.01M243.5 573.9h.01M243.8 571.0h.01M244.0 547.7h.01M244.2 576.8h.01M244.5 580.7h.01M244.7 541.9h.01M244.9 573.9h.01M245.2 575.8h.01M245.4 577.8h.01M245.7 575.8h.01M245.9 574.9h.01M246.1 566.1h.01M246.4 582.6h.01M246.6 580.7h.01M246.8 577.8h.01M247.1 577.8h.01M247.3 580.7h.01M247.5 579.7h.01M247.8 582.6h.01M248.0 576.8h.01M248.3 577.8h.01M248.5 554.5h.01M248.7 570.0h.01M249.0 571.0h.01M249.2 572.9h.01M249.4 573.9h.01M249.7 570.0h.01M249.9 570.0h.01M250.1 563.2h.01M250.4 572.9h.01M250.6 568.1h.01M250.9 551.6h.01M251.1 567.1h.01M251.3 573.9h.01M251.6 577.8h.01M251.8 572.0h.01M252.0 572.9h.01M252.3 569.1h.01M252.5 571.0h.01M252.8 569.1h.01M253.0 565.2h.01M253.2 581.7h.01M253.5 572.9h.01M253.7 579.7h.01M253.9 579.7h.01M254.2 577.8h.01M254.4 577.8h.01M254.6 576.8h.01M254.9 582.6h.01M255.1 578.8h.01M255.4 574.9h.01M255.6 578.8h.01M255.8 572.9h.01M256.1 552.6h.01M256.3 572.0h.01M256.5 561.3h.01M256.8 573.9h.01M257.0 573.9h.01M257.2 552.6h.01M257.5 577.8h.01M257.7 567.1h.01M258.0 573.9h.01M258.2 570.0h.01M258.4 561.3h.01M258.7 570.0h.01M258.9 572.0h.01M259.1 572.0h.01M259.4 571.0h.01M259.6 577.8h.01M259.9 577.8h.01M260.1 571.0h.01M260.3 572.0h.01M260.6 569.1h.01M260.8 577.8h.01M261.0 534.1h.01M261.3 564.2h.01M261.5 579.7h.01M261.7 580.7h.01M262.0 577.8h.01M262.2 575.8h.01M262.5 575.8h.01M262.7 571.0h.01M262.9 571.0h.01M263.2 577.8h.01M263.4 578.8h.01M263.6 535.1h.01M263.9 574.9h.01M264.1 577.8h.01M264.3 577.8h.01M264.6 572.9h.01M264.8 577.8h.01M265.1 540.0h.01M265.3 579.7h.01M265.5 581.7h.01M265.8 555.5h.01M266.0 572.9h.01M266.2 575.8h.01M266.5 581.7h.01M266.7 573.9h.01M266.9 576.8h.01M267.2 575.8h.01M267.4 579.7h.01M267.7 581.7h.01M267.9 571.0h.01M268.1 575.8h.01M268.4 583.6h.01M268.6 579.7h.01M268.8 585.6h.01M269.1 585.6h.01M269.3 583.6h.01M269.6 580.7h.01M269.8 577.8h.01M270.0 581.7h.01M270.3 580.7h.01M270.5 551.6h.01M270.7 581.7h.01M271.0 579.7h.01M271.2 574.9h.01M271.4 570.0h.01M271.7 579.7h.01M271.9 566.1h.01M272.2 582.6h.01M272.4 586.5h.01M272.6 572.0h.01M272.9 581.7h.01M273.1 579.7h.01M273.3 579.7h.01M273.6 581.7h.01M273.8 581.7h.01M274.0 584.6h.01M274.3 568.1h.01M274.5 583.6h.01M274.8 578.8h.01M275.0 568.1h.01M275.2 578.8h.01M275.5 575.8h.01M275.7 577.8h.01M275.9 578.8h.01M276.2 580.7h.01M276.4 573.9h.01M276.7 573.9h.01M276.9 576.8h.01M277.1 573.9h.01M277.4 576.8h.01M277.6 581.7h.01M277.8 576.8h.01M278.1 574.9h.01M278.3 576.8h.01M278.5 578.8h.01M278.8 579.7h.01M279.0 582.6h.01M279.3 566.1h.01M279.5 575.8h.01M279.7 580.7h.01M280.0 582.6h.01M280.2 580.7h.01M280.4 579.7h.01M280.7 574.9h.01M280.9 578.8h.01M281.1 580.7h.01M281.4 552.6h.01M281.6 576.8h.01M281.9 579.7h.01M282.1 577.8h.01M282.3 577.8h.01M282.6 566.1h.01M282.8 578.8h.01M283.0 580.7h.01M283.3 579.7h.01M283.5 573.9h.01M283.8 570.0h.01M284.0 578.8h.01M284.2 540.9h.01M284.5 578.8h.01M284.7 580.7h.01M284.9 581.7h.01M285.2 573.9h.01M285.4 572.0h.01M285.6 572.9h.01M285.9 580.7h.01M286.1 565.2h.01M286.4 576.8h.01M286.6 577.8h.01M286.8 578.8h.01M287.1 549.7h.01M287.3 574.9h.01M287.5 579.7h.01M287.8 583.6h.01M288.0 567.1h.01M288.2 579.7h.01M288.5 582.6h.01M288.7 571.0h.01M289.0 583.6h.01M289.2 575.8h.01M289.4 584.6h.01M289.7 580.7h.01M289.9 582.6h.01M290.1 554.5h.01M290.4 576.8h.01M290.6 577.8h.01M290.9 555.5h.01M291.1 584.6h.01M291.3 584.6h.01M291.6 565.2h.01M291.8 563.2h.01M292.0 587.5h.01M292.3 577.8h.01M292.5 585.6h.01M292.7 582.6h.01M293.0 581.7h.01M293.2 570.0h.01M293.5 585.6h.01M293.7 580.7h.01M293.9 584.6h.01M294.2 581.7h.01M294.4 573.9h.01M294.6 582.6h.01M294.9 578.8h.01M295.1 579.7h.01M295.4 580.7h.01M295.6 573.9h.01M295.8 577.8h.01M296.1 573.9h.01M296.3 579.7h.01M296.5 580.7h.01M296.8 564.2h.01M297.0 578.8h.01M297.2 572.0h.01M297.5 578.8h.01M297.7 575.8h.01M298.0 576.8h.01M298.2 572.9h.01M298.4 566.1h.01M298.7 566.1h.01M298.9 572.9h.01M299.4 580.7h.01M299.8 575.8h.01M300.1 577.8h.01M300.3 578.8h.01M300.6 577.8h.01M300.8 575.8h.01M301.0 571.0h.01M301.3 581.7h.01M301.5 539.0h.01M301.7 564.2h.01M302.0 572.9h.01M302.2 563.2h.01M302.4 577.8h.01M302.7 566.1h.01M302.9 564.2h.01M303.2 547.7h.01M303.4 567.1h.01M303.6 553.5h.01M303.9 553.5h.01M304.1 573.9h.01M304.3 564.2h.01M304.6 567.1h.01M304.8 569.1h.01M305.1 559.4h.01M305.3 560.3h.01M305.5 566.1h.01M305.8 567.1h.01M306.0 576.8h.01M306.2 572.0h.01M306.5 574.9h.01M306.7 574.9h.01M306.9 576.8h.01M307.2 577.8h.01M307.4 577.8h.01M307.7 579.7h.01M307.9 557.4h.01M308.1 570.0h.01M308.4 572.9h.01M308.6 578.8h.01M308.8 569.1h.01M309.1 578.8h.01M309.3 576.8h.01M309.5 579.7h.01M309.8 575.8h.01M310.0 572.0h.01M310.3 569.1h.01M310.5 574.9h.01M310.7 577.8h.01M311.0 569.1h.01M311.2 540.9h.01M311.4 573.9h.01M311.7 540.9h.01M311.9 573.9h.01M312.2 577.8h.01M312.4 579.7h.01M312.6 579.7h.01M312.9 556.4h.01M313.1 573.9h.01M313.3 568.1h.01M313.8 566.1h.01M314.0 579.7h.01M314.3 573.9h.01M314.5 573.9h.01M314.8 576.8h.01M315.0 578.8h.01M315.2 576.8h.01M315.5 565.2h.01M315.7 580.7h.01M315.9 576.8h.01M316.2 582.6h.01M316.4 577.8h.01M316.6 570.0h.01M316.9 564.2h.01M317.1 584.6h.01M317.4 579.7h.01M317.6 564.2h.01M317.8 569.1h.01M318.1 571.0h.01M318.3 563.2h.01M318.5 565.2h.01M318.8 562.3h.01M319.0 566.1h.01M319.3 571.0h.01M319.5 569.1h.01M319.7 568.1h.01M320.0 569.1h.01M320.2 568.1h.01M320.4 543.8h.01M320.7 566.1h.01M320.9 563.2h.01M321.1 571.0h.01M321.4 574.9h.01M321.6 579.7h.01M321.9 583.6h.01M322.1 556.4h.01M322.3 583.6h.01M322.6 574.9h.01M322.8 571.0h.01M323.0 575.8h.01M323.3 585.6h.01M323.5 584.6h.01M323.8 578.8h.01M324.0 584.6h.01M324.2 583.6h.01M324.5 581.7h.01M324.7 542.9h.01M325.2 579.7h.01M325.4 583.6h.01M325.6 584.6h.01M325.9 576.8h.01M326.1 581.7h.01M326.4 583.6h.01M326.6 583.6h.01M326.8 577.8h.01M327.1 583.6h.01M327.3 543.8h.01M327.5 582.6h.01M327.8 578.8h.01M328.0 581.7h.01M328.2 546.7h.01M328.5 583.6h.01M328.7 581.7h.01M329.0 577.8h.01M329.2 572.0h.01M329.4 584.6h.01M329.7 566.1h.01M329.9 566.1h.01M330.1 581.7h.01M330.4 575.8h.01M330.6 583.6h.01M330.9 582.6h.01M331.1 572.9h.01M331.3 580.7h.01M331.6 574.9h.01M331.8 572.9h.01M332.0 569.1h.01M332.3 563.2h.01M332.5 570.0h.01M332.7 570.0h.01M333.0 564.2h.01M333.2 570.0h.01M333.5 559.4h.01M333.7 571.0h.01M333.9 545.8h.01M334.2 568.1h.01M334.4 568.1h.01M334.6 573.9h.01M334.9 553.5h.01M335.1 568.1h.01M335.3 552.6h.01M335.6 559.4h.01M335.8 562.3h.01M336.1 567.1h.01M336.3 577.8h.01M336.5 576.8h.01M336.8 575.8h.01M337.0 568.1h.01M337.2 578.8h.01M337.5 578.8h.01M337.7 567.1h.01M337.9 559.4h.01M338.2 579.7h.01M338.4 568.1h.01M338.7 582.6h.01M338.9 582.6h.01M339.1 581.7h.01M339.4 579.7h.01M339.6 582.6h.01M339.8 576.8h.01M340.1 570.0h.01M340.3 583.6h.01M340.6 569.1h.01M340.8 580.7h.01M341.0 569.1h.01M341.3 574.9h.01M341.5 568.1h.01M341.7 555.5h.01M342.0 562.3h.01M342.4 572.9h.01M342.7 584.6h.01M342.9 582.6h.01M343.2 580.7h.01M343.4 569.1h.01M343.6 575.8h.01M343.9 582.6h.01M344.1 568.1h.01M344.3 578.8h.01M344.6 558.4h.01M344.8 573.9h.01M345.0 569.1h.01M345.3 576.8h.01M345.5 561.3h.01M345.8 580.7h.01M346.0 579.7h.01M346.2 579.7h.01M346.5 545.8h.01M346.7 581.7h.01M346.9 575.8h.01M347.2 552.6h.01M347.4 579.7h.01M347.7 578.8h.01M347.9 581.7h.01M348.1 580.7h.01M348.4 579.7h.01M348.8 578.8h.01M349.1 569.1h.01M349.3 570.0h.01M349.5 572.9h.01M349.8 575.8h.01M350.0 543.8h.01M350.3 582.6h.01M350.7 550.6h.01M351.0 574.9h.01M351.2 581.7h.01M351.4 579.7h.01M351.7 578.8h.01M351.9 571.0h.01M352.1 579.7h.01M352.4 583.6h.01M352.6 580.7h.01M352.9 563.2h.01M353.1 585.6h.01M353.3 576.8h.01M353.6 554.5h.01M353.8 577.8h.01M354.0 585.6h.01M354.3 582.6h.01M354.5 581.7h.01M354.8 583.6h.01M355.0 553.5h.01M355.5 580.7h.01M355.7 581.7h.01M355.9 581.7h.01M356.2 580.7h.01M356.4 572.0h.01M356.6 552.6h.01M356.9 573.9h.01M357.1 581.7h.01M357.4 581.7h.01M357.6 577.8h.01M357.8 566.1h.01M358.1 582.6h.01M358.3 575.8h.01M358.5 570.0h.01M358.8 565.2h.01M359.0 577.8h.01M359.2 574.9h.01M359.5 574.9h.01M359.7 577.8h.01M360.0 571.0h.01M360.2 568.1h.01M360.4 548.7h.01M360.7 573.9h.01M360.9 569.1h.01M361.1 571.0h.01M361.4 577.8h.01M361.6 579.7h.01M361.9 568.1h.01M362.1 567.1h.01M362.3 568.1h.01M362.6 574.9h.01M362.8 567.1h.01M363.0 574.9h.01M363.3 533.2h.01M363.5 571.0h.01M363.7 574.9h.01M364.0 575.8h.01M364.2 579.7h.01M364.5 577.8h.01M364.7 581.7h.01M364.9 577.8h.01M365.2 572.9h.01M365.4 578.8h.01M365.6 580.7h.01M365.9 582.6h.01M366.1 577.8h.01M366.3 570.0h.01M366.6 578.8h.01M366.8 578.8h.01M367.1 580.7h.01M367.3 574.9h.01M367.5 567.1h.01M367.8 579.7h.01M368.0 582.6h.01M368.2 575.8h.01M368.5 575.8h.01M368.7 582.6h.01M369.0 577.8h.01M369.2 573.9h.01M369.4 581.7h.01M369.7 539.0h.01M369.9 576.8h.01M370.1 578.8h.01M370.4 583.6h.01M370.6 582.6h.01M370.8 580.7h.01M371.1 570.0h.01M371.3 581.7h.01M371.6 581.7h.01M371.8 568.1h.01M372.0 542.9h.01M372.3 579.7h.01M372.5 576.8h.01M372.7 578.8h.01M373.0 558.4h.01M373.2 581.7h.01M373.4 579.7h.01M373.7 583.6h.01M373.9 580.7h.01M374.2 572.9h.01M374.4 572.0h.01M374.6 575.8h.01M374.9 578.8h.01M375.1 580.7h.01M375.3 576.8h.01M375.6 572.0h.01M375.8 567.1h.01M376.1 548.7h.01M376.3 572.0h.01M376.5 578.8h.01M376.8 569.1h.01M377.0 579.7h.01M377.2 576.8h.01M377.5 566.1h.01M377.7 574.9h.01M377.9 572.9h.01M378.2 579.7h.01M378.4 576.8h.01M378.7 579.7h.01M378.9 571.0h.01M379.1 576.8h.01M379.4 560.3h.01M379.6 569.1h.01M379.8 574.9h.01M380.1 564.2h.01M380.3 570.0h.01M380.6 569.1h.01M380.8 567.1h.01M381.0 540.0h.01M381.3 555.5h.01M381.5 566.1h.01M381.7 567.1h.01M382.0 567.1h.01M382.2 565.2h.01M382.4 556.4h.01M382.7 573.9h.01M382.9 568.1h.01M383.2 561.3h.01M383.4 564.2h.01M383.6 570.0h.01M383.9 573.9h.01M384.1 576.8h.01M384.3 579.7h.01M384.6 578.8h.01M384.8 578.8h.01M385.0 579.7h.01M385.3 582.6h.01M385.5 583.6h.01M385.8 584.6h.01M386.0 570.0h.01M386.2 581.7h.01M386.5 579.7h.01M386.7 572.9h.01M386.9 586.5h.01M387.2 580.7h.01M387.4 573.9h.01M387.6 572.9h.01M387.9 583.6h.01M388.1 581.7h.01M388.4 569.1h.01M388.6 577.8h.01M388.8 577.8h.01M389.1 577.8h.01M389.3 585.6h.01M389.5 582.6h.01M389.8 587.5h.01M390.0 584.6h.01M390.3 585.6h.01M390.5 583.6h.01M390.7 587.5h.01M391.0 577.8h.01M391.2 585.6h.01M391.4 582.6h.01M391.7 572.9h.01M391.9 585.6h.01M392.1 581.7h.01M392.4 575.8h.01M392.6 577.8h.01M392.9 583.6h.01M393.1 570.0h.01M393.3 579.7h.01M393.6 577.8h.01M393.8 579.7h.01M394.0 576.8h.01M394.3 580.7h.01M394.5 584.6h.01M394.8 582.6h.01M395.0 583.6h.01M395.2 585.6h.01M395.5 582.6h.01M395.7 577.8h.01M395.9 566.1h.01M396.2 581.7h.01M396.4 570.0h.01M396.6 580.7h.01M396.9 586.5h.01M397.1 583.6h.01M397.4 582.6h.01M397.6 579.7h.01M397.8 581.7h.01M398.1 582.6h.01M398.3 581.7h.01M398.5 582.6h.01M398.8 579.7h.01M399.0 573.9h.01M399.2 549.7h.01M399.5 575.8h.01M399.7 581.7h.01M400.0 583.6h.01M400.2 580.7h.01M400.4 582.6h.01M400.7 572.9h.01M400.9 580.7h.01M401.1 569.1h.01M401.4 571.0h.01M401.6 572.9h.01M401.8 566.1h.01M402.1 573.9h.01M402.3 574.9h.01M402.6 576.8h.01M402.8 576.8h.01M403.0 579.7h.01M403.3 579.7h.01M403.5 573.9h.01M403.7 580.7h.01M404.0 578.8h.01M404.2 577.8h.01M404.5 569.1h.01M404.7 580.7h.01M404.9 581.7h.01M405.2 582.6h.01M405.4 584.6h.01M405.6 587.5h.01M405.9 587.5h.01M406.1 586.5h.01M406.3 586.5h.01M406.6 587.5h.01M406.8 587.5h.01M407.1 586.5h.01M407.3 568.1h.01M407.5 585.6h.01M407.8 584.6h.01M408.0 586.5h.01M408.2 577.8h.01M408.5 578.8h.01M408.7 582.6h.01M408.9 585.6h.01M409.2 586.5h.01M409.4 585.6h.01M409.7 582.6h.01M409.9 587.5h.01M410.1 576.8h.01M410.4 574.9h.01M410.6 570.0h.01M410.8 565.2h.01M411.1 572.9h.01M411.3 576.8h.01M411.6 577.8h.01M411.8 576.8h.01M412.3 572.9h.01M412.5 580.7h.01M412.7 577.8h.01M413.0 578.8h.01M413.2 567.1h.01M413.4 579.7h.01M413.7 583.6h.01M413.9 567.1h.01M414.2 574.9h.01M414.4 573.9h.01M414.6 578.8h.01M414.9 572.0h.01M415.1 562.3h.01M415.3 587.5h.01M415.6 586.5h.01M415.8 582.6h.01M416.1 586.5h.01M416.3 585.6h.01M416.5 577.8h.01M416.8 587.5h.01M417.0 582.6h.01M417.2 580.7h.01M417.5 585.6h.01M417.7 585.6h.01M417.9 559.4h.01M418.2 579.7h.01M418.4 582.6h.01M418.7 582.6h.01M418.9 578.8h.01M419.1 548.7h.01M419.4 579.7h.01M419.6 577.8h.01M419.8 582.6h.01M420.1 581.7h.01M420.3 582.6h.01M420.5 573.9h.01M420.8 581.7h.01M421.0 582.6h.01M421.3 576.8h.01M421.5 580.7h.01M421.7 576.8h.01M422.0 584.6h.01M422.2 585.6h.01M422.4 587.5h.01M422.7 590.4h.01M422.9 585.6h.01M423.1 578.8h.01M423.4 574.9h.01M423.6 583.6h.01M423.9 584.6h.01M424.1 586.5h.01M424.3 581.7h.01M424.6 583.6h.01M424.8 571.0h.01M425.0 579.7h.01M425.3 575.8h.01M425.5 583.6h.01M425.8 574.9h.01M426.0 581.7h.01M426.2 577.8h.01M426.5 580.7h.01M426.7 570.0h.01M426.9 578.8h.01M427.2 580.7h.01M427.4 585.6h.01M427.6 575.8h.01M427.9 587.5h.01M428.1 572.0h.01M428.4 559.4h.01M428.6 544.8h.01M428.8 562.3h.01M429.1 567.1h.01M429.3 571.0h.01M429.5 566.1h.01M429.8 572.0h.01M430.0 576.8h.01M430.2 570.0h.01M430.5 558.4h.01M430.7 569.1h.01M431.0 540.9h.01M431.2 568.1h.01M431.4 572.9h.01M431.7 582.6h.01M431.9 577.8h.01M432.1 585.6h.01M432.4 585.6h.01M432.6 559.4h.01M432.9 583.6h.01M433.1 583.6h.01M433.3 575.8h.01M433.6 582.6h.01M433.8 581.7h.01M434.0 579.7h.01M434.3 576.8h.01M434.5 578.8h.01M434.7 585.6h.01M435.0 573.9h.01M435.2 580.7h.01M435.5 583.6h.01M435.7 572.0h.01M435.9 576.8h.01M436.2 560.3h.01M436.4 579.7h.01M436.6 581.7h.01M436.9 576.8h.01M437.1 584.6h.01M437.3 579.7h.01M437.6 584.6h.01M437.8 583.6h.01M438.1 584.6h.01M438.3 574.9h.01M438.5 586.5h.01M438.8 559.4h.01M439.0 585.6h.01M439.2 576.8h.01M439.5 575.8h.01M439.7 571.0h.01M440.0 577.8h.01M440.2 579.7h.01M440.4 572.9h.01M440.7 581.7h.01M440.9 570.0h.01M441.1 574.9h.01M441.4 585.6h.01M441.6 583.6h.01M441.8 587.5h.01M442.1 584.6h.01M442.3 582.6h.01M442.6 584.6h.01M442.8 583.6h.01M443.0 575.8h.01M443.3 577.8h.01M443.5 585.6h.01M443.7 582.6h.01M444.0 584.6h.01M444.2 585.6h.01M444.4 575.8h.01M444.7 584.6h.01M444.9 579.7h.01M445.2 583.6h.01M445.4 577.8h.01M445.6 568.1h.01M445.9 562.3h.01M446.1 566.1h.01M446.3 582.6h.01M446.6 577.8h.01M446.8 549.7h.01M447.1 534.1h.01M447.3 572.9h.01M447.5 579.7h.01M447.8 579.7h.01M448.0 583.6h.01M448.2 568.1h.01M448.5 568.1h.01M448.7 572.0h.01M448.9 562.3h.01M449.2 571.0h.01M449.4 572.0h.01M449.7 563.2h.01M449.9 576.8h.01M450.1 583.6h.01M450.4 584.6h.01M450.6 549.7h.01M450.8 579.7h.01M451.1 581.7h.01M451.3 577.8h.01M451.5 585.6h.01M451.8 571.0h.01M452.0 581.7h.01M452.3 580.7h.01M452.5 581.7h.01M452.7 566.1h.01M453.0 581.7h.01M453.2 580.7h.01M453.4 576.8h.01M453.7 575.8h.01M453.9 578.8h.01M454.4 576.8h.01M454.6 556.4h.01M454.9 576.8h.01M455.1 581.7h.01M455.3 564.2h.01M455.6 580.7h.01M455.8 577.8h.01M456.0 564.2h.01M456.3 576.8h.01M456.5 558.4h.01M456.8 581.7h.01M457.0 536.1h.01M457.2 576.8h.01M457.5 577.8h.01M457.7 583.6h.01M457.9 570.0h.01M458.2 580.7h.01M458.4 579.7h.01M458.6 582.6h.01M458.9 545.8h.01M459.1 583.6h.01M459.4 584.6h.01M459.6 584.6h.01M459.8 576.8h.01M460.1 566.1h.01M460.3 577.8h.01M460.5 568.1h.01M460.8 579.7h.01M461.0 574.9h.01M461.3 584.6h.01M461.5 564.2h.01M461.7 577.8h.01M462.0 579.7h.01M462.2 584.6h.01M462.4 578.8h.01M462.7 580.7h.01M462.9 565.2h.01M463.1 579.7h.01M463.4 572.9h.01M463.6 577.8h.01M463.9 583.6h.01M464.1 581.7h.01M464.3 572.9h.01M464.6 571.0h.01M464.8 575.8h.01M465.0 577.8h.01M465.3 562.3h.01M465.5 577.8h.01M465.8 554.5h.01M466.0 572.0h.01M466.2 570.0h.01M466.5 579.7h.01M466.7 581.7h.01M466.9 576.8h.01M467.2 578.8h.01M467.4 567.1h.01M467.6 577.8h.01M467.9 576.8h.01M468.1 591.4h.01M468.4 588.5h.01M468.6 588.5h.01M468.8 590.4h.01M469.1 590.4h.01M469.5 586.5h.01M469.8 574.9h.01M470.0 580.7h.01M470.2 585.6h.01M470.5 580.7h.01M470.7 583.6h.01M471.0 588.5h.01M471.2 585.6h.01M471.4 587.5h.01M471.7 582.6h.01M471.9 586.5h.01M472.1 586.5h.01M472.4 586.5h.01M472.6 580.7h.01M472.8 579.7h.01M473.1 583.6h.01M473.3 585.6h.01M473.6 578.8h.01M473.8 585.6h.01M474.0 582.6h.01M474.3 587.5h.01M474.5 588.5h.01M474.7 574.9h.01M475.0 587.5h.01M475.2 586.5h.01M475.5 586.5h.01M475.7 586.5h.01M475.9 582.6h.01M476.2 572.0h.01M476.4 571.0h.01M476.6 574.9h.01M476.9 576.8h.01M477.1 574.9h.01M477.3 575.8h.01M477.6 562.3h.01M477.8 572.0h.01M478.1 561.3h.01M478.3 560.3h.01M478.5 572.0h.01M478.8 550.6h.01M479.0 570.0h.01M479.2 572.0h.01M479.5 572.0h.01M479.7 570.0h.01M479.9 567.1h.01M480.2 571.0h.01M480.4 565.2h.01M480.7 583.6h.01M480.9 585.6h.01M481.1 580.7h.01M481.4 583.6h.01M481.6 583.6h.01M481.8 584.6h.01M482.1 586.5h.01M482.3 587.5h.01M482.6 587.5h.01M482.8 569.1h.01M483.0 588.5h.01M483.3 583.6h.01M483.5 572.9h.01M483.7 585.6h.01M484.0 584.6h.01M484.2 583.6h.01M484.4 568.1h.01M484.7 577.8h.01M484.9 584.6h.01M485.2 559.4h.01M485.4 582.6h.01M485.6 560.3h.01M485.9 575.8h.01M486.1 581.7h.01M486.3 579.7h.01M486.6 580.7h.01M486.8 562.3h.01M487.0 571.0h.01M487.3 564.2h.01M487.5 577.8h.01M487.8 580.7h.01M488.0 575.8h.01M488.2 573.9h.01M488.5 584.6h.01M488.7 583.6h.01M488.9 577.8h.01M489.2 585.6h.01M489.4 572.0h.01M489.7 572.9h.01M489.9 580.7h.01M490.1 583.6h.01M490.4 579.7h.01M490.6 577.8h.01M490.8 566.1h.01M491.1 582.6h.01M491.3 576.8h.01M491.5 576.8h.01M491.8 572.0h.01M492.0 585.6h.01M492.3 581.7h.01M492.5 583.6h.01M492.7 576.8h.01M493.0 582.6h.01M493.2 578.8h.01M493.4 579.7h.01M493.7 574.9h.01M493.9 576.8h.01M494.1 580.7h.01M494.4 584.6h.01M494.6 582.6h.01M494.9 581.7h.01M495.1 588.5h.01M495.3 583.6h.01M495.6 573.9h.01M495.8 575.8h.01M496.0 583.6h.01M496.3 573.9h.01M496.8 578.8h.01M497.0 575.8h.01M497.2 582.6h.01M497.5 572.9h.01M497.7 574.9h.01M497.9 578.8h.01M498.2 559.4h.01M498.4 574.9h.01M498.6 575.8h.01M499.1 574.9h.01M499.6 570.0h.01M499.8 579.7h.01M500.1 577.8h.01M500.3 557.4h.01M500.5 571.0h.01M500.8 567.1h.01M501.0 567.1h.01M501.2 580.7h.01M501.5 578.8h.01M501.7 572.0h.01M502.0 578.8h.01M502.2 545.8h.01M502.4 580.7h.01M502.7 573.9h.01M502.9 569.1h.01M503.1 574.9h.01M503.4 563.2h.01M503.6 580.7h.01M503.9 557.4h.01M504.1 581.7h.01M504.3 560.3h.01M504.6 583.6h.01M504.8 581.7h.01M505.0 578.8h.01M505.3 582.6h.01M505.5 583.6h.01M505.7 579.7h.01M506.0 574.9h.01M506.2 566.1h.01M506.5 583.6h.01M506.7 571.0h.01M506.9 569.1h.01M507.2 574.9h.01M507.4 567.1h.01M507.6 572.9h.01M507.9 583.6h.01M508.1 578.8h.01M508.3 569.1h.01M508.6 576.8h.01M508.8 580.7h.01M509.1 584.6h.01M509.3 586.5h.01M509.5 572.9h.01M509.8 583.6h.01M510.0 561.3h.01M510.2 579.7h.01M510.5 584.6h.01M510.7 582.6h.01M511.0 585.6h.01M511.2 557.4h.01M511.7 584.6h.01M511.9 586.5h.01M512.1 580.7h.01M512.4 575.8h.01M512.6 588.5h.01M512.8 584.6h.01M513.1 573.9h.01M513.3 585.6h.01M513.6 582.6h.01M513.8 574.9h.01M514.0 572.9h.01M514.3 590.4h.01M514.5 589.4h.01M514.7 578.8h.01M515.0 579.7h.01M515.5 629.2h.01M515.7 575.8h.01M515.9 584.6h.01M516.2 556.4h.01M516.4 581.7h.01M516.6 570.0h.01M516.9 573.9h.01M517.1 578.8h.01M517.3 570.0h.01M517.6 577.8h.01M517.8 581.7h.01M518.1 585.6h.01M518.3 584.6h.01M518.5 586.5h.01M518.8 578.8h.01M519.0 585.6h.01M519.2 587.5h.01M519.5 587.5h.01M519.7 551.6h.01M519.9 585.6h.01M520.2 586.5h.01M520.4 577.8h.01M520.7 587.5h.01M520.9 577.8h.01M521.1 587.5h.01M521.4 569.1h.01M521.6 587.5h.01M521.8 589.4h.01M522.1 587.5h.01M522.3 585.6h.01M522.5 587.5h.01M522.8 582.6h.01M523.0 581.7h.01M523.3 580.7h.01M523.5 572.9h.01M523.7 555.5h.01M524.0 586.5h.01M524.2 583.6h.01M524.4 588.5h.01M524.7 577.8h.01M524.9 579.7h.01M525.4 586.5h.01M525.6 589.4h.01M525.9 589.4h.01M526.1 585.6h.01M526.3 588.5h.01M526.6 588.5h.01M526.8 585.6h.01M527.0 581.7h.01M527.3 588.5h.01M527.5 581.7h.01M527.8 584.6h.01M528.0 584.6h.01M528.2 572.0h.01M528.5 577.8h.01M528.7 577.8h.01M528.9 584.6h.01M529.2 572.0h.01M529.4 585.6h.01M529.6 583.6h.01M529.9 585.6h.01M530.1 561.3h.01M530.4 586.5h.01M530.6 572.0h.01M530.8 581.7h.01M531.1 589.4h.01M531.3 589.4h.01M531.5 580.7h.01M531.8 587.5h.01M532.0 575.8h.01M532.3 588.5h.01M532.5 577.8h.01M532.7 586.5h.01M533.0 583.6h.01M533.2 572.9h.01M533.4 586.5h.01M533.7 590.4h.01M533.9 593.3h.01M534.1 582.6h.01M534.4 579.7h.01M534.6 579.7h.01M534.9 579.7h.01M535.1 589.4h.01M535.3 572.9h.01M535.6 581.7h.01M535.8 589.4h.01M536.0 575.8h.01M536.3 578.8h.01M536.5 579.7h.01M536.8 563.2h.01M537.0 563.2h.01M537.2 558.4h.01M537.5 581.7h.01M537.7 581.7h.01M537.9 571.0h.01M538.2 578.8h.01M538.4 567.1h.01M538.6 574.9h.01M538.9 572.9h.01M539.1 566.1h.01M539.6 568.1h.01M539.8 557.4h.01M540.1 571.0h.01M540.3 574.9h.01M540.5 584.6h.01M540.8 576.8h.01M541.0 583.6h.01M541.2 583.6h.01M541.5 578.8h.01M541.7 572.0h.01M542.0 587.5h.01M542.2 575.8h.01M542.4 587.5h.01M542.7 573.9h.01M542.9 584.6h.01M543.1 589.4h.01M543.4 552.6h.01M543.6 589.4h.01M543.8 589.4h.01M544.1 586.5h.01M544.3 585.6h.01M544.6 586.5h.01M544.8 582.6h.01M545.0 588.5h.01M545.3 587.5h.01M545.5 586.5h.01M545.7 588.5h.01M546.0 572.9h.01M546.2 578.8h.01M546.5 577.8h.01M546.7 579.7h.01M546.9 580.7h.01M547.2 566.1h.01M547.4 573.9h.01M547.6 573.9h.01M547.9 575.8h.01M548.1 570.0h.01M548.3 582.6h.01M548.6 583.6h.01M548.8 580.7h.01M549.1 568.1h.01M549.3 584.6h.01M549.5 573.9h.01M549.8 584.6h.01M550.0 583.6h.01M550.2 585.6h.01M550.5 586.5h.01M550.7 585.6h.01M551.0 584.6h.01M551.2 582.6h.01M551.4 583.6h.01M551.7 587.5h.01M551.9 583.6h.01M552.1 587.5h.01M552.4 587.5h.01M552.6 588.5h.01M552.8 591.4h.01M553.1 592.3h.01M553.3 585.6h.01M553.6 586.5h.01M553.8 584.6h.01M554.0 570.0h.01M554.3 585.6h.01M554.5 566.1h.01M554.7 588.5h.01M555.0 586.5h.01M555.2 584.6h.01M555.4 587.5h.01M555.7 589.4h.01M555.9 582.6h.01M556.2 586.5h.01M556.4 584.6h.01M556.6 581.7h.01M556.9 582.6h.01M557.1 572.9h.01M557.3 587.5h.01M557.6 581.7h.01M557.8 583.6h.01M558.0 578.8h.01M558.3 579.7h.01M558.5 591.4h.01M558.8 585.6h.01M559.0 585.6h.01M559.2 583.6h.01M559.5 576.8h.01M559.7 584.6h.01M559.9 538.0h.01M560.2 574.9h.01M560.4 580.7h.01M560.7 573.9h.01M560.9 578.8h.01M561.1 584.6h.01M561.4 573.9h.01M561.6 577.8h.01M561.8 576.8h.01M562.1 579.7h.01M562.3 584.6h.01M562.5 579.7h.01M562.8 581.7h.01M563.0 570.0h.01M563.3 585.6h.01M563.5 588.5h.01M563.7 581.7h.01M564.0 589.4h.01M564.2 575.8h.01M564.4 585.6h.01M564.7 578.8h.01M564.9 588.5h.01M565.1 574.9h.01M565.4 588.5h.01M565.6 588.5h.01M565.9 585.6h.01M566.1 585.6h.01M566.3 586.5h.01M566.6 584.6h.01M566.8 590.4h.01M567.0 540.9h.01M567.3 572.0h.01M567.5 580.7h.01M567.8 586.5h.01M568.0 574.9h.01M568.2 585.6h.01M568.5 584.6h.01M568.7 578.8h.01M568.9 582.6h.01M569.2 586.5h.01M569.4 588.5h.01M569.6 588.5h.01M569.9 590.4h.01M570.1 584.6h.01M570.4 584.6h.01M570.6 591.4h.01M570.8 591.4h.01M571.1 590.4h.01M571.3 589.4h.01M571.5 587.5h.01M571.8 591.4h.01M572.0 590.4h.01M572.2 592.3h.01M572.5 589.4h.01M572.7 589.4h.01M573.0 584.6h.01M573.2 589.4h.01M573.4 576.8h.01M573.7 591.4h.01M573.9 580.7h.01M574.1 588.5h.01M574.4 588.5h.01M574.6 577.8h.01M574.9 587.5h.01M575.1 581.7h.01M575.3 585.6h.01M575.6 588.5h.01M575.8 582.6h.01M576.0 587.5h.01M576.3 587.5h.01M576.5 582.6h.01M576.7 590.4h.01M577.0 591.4h.01M577.2 588.5h.01M577.5 590.4h.01M577.7 577.8h.01M577.9 584.6h.01M578.2 583.6h.01M578.4 584.6h.01M578.6 582.6h.01M578.9 578.8h.01M579.1 561.3h.01M579.3 579.7h.01M579.6 573.9h.01M579.8 576.8h.01M580.1 583.6h.01M580.3 584.6h.01M580.5 582.6h.01M580.8 580.7h.01M581.0 581.7h.01M581.2 569.1h.01M581.5 580.7h.01M581.7 583.6h.01M582.0 581.7h.01M582.4 572.9h.01M582.7 576.8h.01M582.9 584.6h.01M583.1 584.6h.01M583.4 586.5h.01M583.6 586.5h.01M583.8 584.6h.01M584.1 587.5h.01M584.3 582.6h.01M584.6 588.5h.01M584.8 588.5h.01M585.0 581.7h.01M585.3 581.7h.01M585.5 578.8h.01M585.7 585.6h.01M586.0 583.6h.01M586.2 578.8h.01M586.5 576.8h.01M586.7 585.6h.01M586.9 585.6h.01M587.2 582.6h.01M587.4 578.8h.01M587.6 583.6h.01M587.9 583.6h.01M588.1 580.7h.01M588.3 543.8h.01M588.6 587.5h.01M588.8 583.6h.01M589.1 582.6h.01M589.3 585.6h.01M589.5 587.5h.01M589.8 554.5h.01M590.0 588.5h.01M590.2 581.7h.01M590.5 581.7h.01M590.7 583.6h.01M590.9 570.0h.01M591.2 577.8h.01M591.4 575.8h.01M591.7 574.9h.01M591.9 584.6h.01M592.1 570.0h.01M592.4 579.7h.01M592.6 583.6h.01M592.8 574.9h.01M593.1 580.7h.01M593.3 575.8h.01M593.5 581.7h.01M593.8 579.7h.01M594.0 572.0h.01M594.3 566.1h.01M594.5 574.9h.01M594.7 572.0h.01M595.0 579.7h.01M595.2 570.0h.01M595.4 580.7h.01M595.7 585.6h.01M595.9 593.3h.01M596.2 591.4h.01M596.4 588.5h.01M596.6 589.4h.01M596.9 588.5h.01M597.1 585.6h.01M597.3 586.5h.01M597.6 590.4h.01M597.8 588.5h.01M598.0 592.3h.01M598.3 570.0h.01M598.5 592.3h.01M598.8 579.7h.01M599.0 587.5h.01M599.2 573.9h.01M599.5 572.9h.01M599.7 563.2h.01M599.9 588.5h.01M600.2 589.4h.01M600.4 589.4h.01M600.6 589.4h.01M600.9 586.5h.01M601.1 587.5h.01M601.4 582.6h.01M601.6 587.5h.01M601.8 576.8h.01M602.1 573.9h.01M602.3 588.5h.01M602.5 569.1h.01M602.8 581.7h.01M603.0 584.6h.01M603.3 581.7h.01M603.5 580.7h.01M603.7 568.1h.01M604.0 579.7h.01M604.2 586.5h.01M604.4 588.5h.01M604.7 582.6h.01M604.9 589.4h.01M605.1 579.7h.01M605.4 567.1h.01M605.6 586.5h.01M605.9 585.6h.01M606.1 587.5h.01M606.3 571.0h.01M606.6 586.5h.01M606.8 544.8h.01M607.0 586.5h.01M607.3 581.7h.01M607.5 588.5h.01M607.8 587.5h.01M608.0 585.6h.01M608.2 576.8h.01M608.5 584.6h.01M608.7 584.6h.01M608.9 577.8h.01M609.2 586.5h.01M609.4 580.7h.01M609.6 577.8h.01M609.9 572.0h.01M610.1 562.3h.01M610.4 578.8h.01M610.6 575.8h.01M610.8 575.8h.01M611.1 583.6h.01M611.3 578.8h.01M611.5 565.2h.01M611.8 571.0h.01M612.0 578.8h.01M612.2 576.8h.01M612.5 576.8h.01M612.7 572.9h.01M613.0 577.8h.01M613.2 579.7h.01M613.4 564.2h.01M613.7 572.0h.01M613.9 572.0h.01M614.1 570.0h.01M614.4 576.8h.01M614.6 568.1h.01M614.9 577.8h.01M615.1 555.5h.01M615.3 586.5h.01M615.6 560.3h.01M615.8 583.6h.01M616.0 584.6h.01M616.3 585.6h.01M616.5 580.7h.01M616.7 536.1h.01M617.0 582.6h.01M617.2 568.1h.01M617.5 572.0h.01M617.7 573.9h.01M617.9 576.8h.01M618.2 572.0h.01M618.4 572.9h.01M618.6 566.1h.01M618.9 575.8h.01M619.1 565.2h.01M619.3 573.9h.01M619.6 587.5h.01M619.8 584.6h.01M620.1 584.6h.01M620.3 586.5h.01M620.5 583.6h.01M620.8 585.6h.01M621.0 582.6h.01M621.2 562.3h.01M621.5 572.0h.01M621.7 589.4h.01M621.9 582.6h.01M622.2 587.5h.01M622.4 567.1h.01M622.7 586.5h.01M622.9 574.9h.01M623.1 584.6h.01M623.4 579.7h.01M623.6 588.5h.01M623.8 581.7h.01M624.1 579.7h.01M624.3 578.8h.01M624.6 581.7h.01M624.8 581.7h.01M625.0 588.5h.01M625.3 574.9h.01M625.5 585.6h.01M625.7 562.3h.01M626.0 587.5h.01M626.2 589.4h.01M626.4 582.6h.01M626.7 582.6h.01M626.9 579.7h.01M627.2 589.4h.01M627.4 576.8h.01M627.6 580.7h.01M627.9 577.8h.01M628.1 583.6h.01M628.3 580.7h.01M628.6 575.8h.01M628.8 573.9h.01M629.0 576.8h.01M629.3 581.7h.01M629.5 591.4h.01M629.8 584.6h.01M630.0 590.4h.01M630.2 585.6h.01M630.5 587.5h.01M630.7 581.7h.01M630.9 589.4h.01M631.2 588.5h.01M631.4 587.5h.01M631.7 583.6h.01M631.9 587.5h.01M632.1 585.6h.01M632.4 583.6h.01M632.6 581.7h.01M632.8 592.3h.01M633.1 589.4h.01M633.3 588.5h.01M633.5 566.1h.01M633.8 588.5h.01M634.0 588.5h.01M634.3 590.4h.01M634.5 582.6h.01M634.7 590.4h.01M635.0 569.1h.01M635.2 564.2h.01M635.4 570.0h.01M635.7 567.1h.01M635.9 538.0h.01M636.1 563.2h.01M636.4 572.0h.01M636.6 573.9h.01M636.9 579.7h.01M637.1 586.5h.01M637.3 558.4h.01M637.6 580.7h.01M637.8 586.5h.01M638.0 549.7h.01M638.3 586.5h.01M638.5 585.6h.01M638.8 586.5h.01M639.0 582.6h.01M639.2 578.8h.01M639.7 580.7h.01M639.9 582.6h.01M640.2 588.5h.01M640.4 584.6h.01M640.6 582.6h.01M640.9 590.4h.01M641.1 583.6h.01M641.4 590.4h.01M641.6 590.4h.01M641.8 541.9h.01M642.1 563.2h.01M642.3 558.4h.01M642.5 580.7h.01M642.8 590.4h.01M643.0 584.6h.01M643.2 582.6h.01M643.5 579.7h.01M643.7 587.5h.01M644.0 572.0h.01M644.2 583.6h.01M644.4 574.9h.01M644.7 572.0h.01M644.9 543.8h.01M645.1 586.5h.01M645.4 580.7h.01M645.6 580.7h.01M645.9 578.8h.01M646.1 585.6h.01M646.3 587.5h.01M646.6 584.6h.01M646.8 577.8h.01M647.0 561.3h.01M647.3 568.1h.01M647.5 590.4h.01M647.7 591.4h.01M648.0 578.8h.01M648.2 582.6h.01M648.5 585.6h.01M648.7 594.3h.01M648.9 585.6h.01M649.2 587.5h.01M649.4 587.5h.01M649.6 591.4h.01M649.9 591.4h.01M650.1 589.4h.01M650.4 593.3h.01M650.6 580.7h.01M650.8 591.4h.01M651.1 576.8h.01M651.3 584.6h.01M651.5 580.7h.01M651.8 560.3h.01M652.0 581.7h.01M652.2 584.6h.01M652.5 577.8h.01M652.7 589.4h.01M653.0 585.6h.01M653.2 585.6h.01M653.4 589.4h.01M653.7 560.3h.01M653.9 538.0h.01M654.1 591.4h.01M654.4 593.3h.01M654.6 591.4h.01M654.8 580.7h.01M655.1 593.3h.01M655.3 590.4h.01M655.6 586.5h.01M655.8 591.4h.01M656.0 582.6h.01M656.3 583.6h.01M656.5 580.7h.01M656.7 595.3h.01M657.0 594.3h.01M657.2 583.6h.01M657.4 572.9h.01M657.7 575.8h.01M657.9 579.7h.01M658.2 580.7h.01M658.4 586.5h.01M658.6 574.9h.01M658.9 593.3h.01M659.1 594.3h.01M659.3 576.8h.01M659.6 590.4h.01M659.8 585.6h.01M660.1 592.3h.01M660.3 592.3h.01M660.5 579.7h.01M660.8 589.4h.01M661.0 583.6h.01M661.2 589.4h.01M661.5 567.1h.01M661.7 582.6h.01M661.9 587.5h.01M662.2 590.4h.01M662.4 579.7h.01M662.7 589.4h.01M662.9 591.4h.01M663.1 543.8h.01M663.4 587.5h.01M663.6 583.6h.01M663.8 556.4h.01M664.1 587.5h.01M664.3 578.8h.01M664.5 586.5h.01M664.8 578.8h.01M665.0 585.6h.01M665.3 540.0h.01M665.5 591.4h.01M665.7 574.9h.01M666.0 587.5h.01M666.2 584.6h.01M666.4 576.8h.01M666.7 583.6h.01M666.9 585.6h.01M667.2 586.5h.01M667.6 587.5h.01M667.9 573.9h.01M668.1 591.4h.01M668.3 572.9h.01M668.6 590.4h.01M668.8 592.3h.01M669.0 586.5h.01M669.3 573.9h.01M669.5 591.4h.01M669.8 577.8h.01M670.0 584.6h.01M670.2 551.6h.01M670.5 587.5h.01M670.7 576.8h.01M670.9 587.5h.01M671.2 578.8h.01M671.4 585.6h.01M671.6 577.8h.01M671.9 585.6h.01M672.1 585.6h.01M672.4 538.0h.01M672.6 590.4h.01M672.8 588.5h.01M673.1 581.7h.01M673.3 584.6h.01M673.5 582.6h.01M673.8 582.6h.01M674.0 576.8h.01M674.3 579.7h.01M674.5 589.4h.01M674.7 585.6h.01M675.0 572.9h.01M675.2 583.6h.01M675.4 579.7h.01M675.7 574.9h.01M675.9 577.8h.01M676.1 568.1h.01M676.4 570.0h.01M676.6 587.5h.01M676.9 581.7h.01M677.1 578.8h.01M677.3 563.2h.01M677.6 587.5h.01M677.8 586.5h.01M678.0 593.3h.01M678.3 593.3h.01M678.5 593.3h.01M678.8 591.4h.01M679.0 586.5h.01M679.2 582.6h.01M679.5 586.5h.01M679.7 581.7h.01M679.9 590.4h.01M680.2 581.7h.01M680.4 589.4h.01M680.6 581.7h.01M680.9 583.6h.01M681.1 588.5h.01M681.4 569.1h.01M681.6 584.6h.01M681.8 585.6h.01M682.1 581.7h.01M682.3 579.7h.01M682.5 574.9h.01M682.8 581.7h.01M683.0 568.1h.01M683.2 556.4h.01M683.5 556.4h.01M683.7 580.7h.01M684.0 540.0h.01M684.2 582.6h.01M684.4 574.9h.01M684.7 574.9h.01M684.9 576.8h.01M685.1 572.0h.01M685.4 590.4h.01M685.6 593.3h.01M685.9 590.4h.01M686.1 565.2h.01M686.3 590.4h.01M686.6 585.6h.01M686.8 590.4h.01M687.0 581.7h.01M687.3 572.9h.01M687.5 571.0h.01M687.7 592.3h.01M688.0 592.3h.01M688.2 591.4h.01M688.5 585.6h.01M688.7 584.6h.01M688.9 586.5h.01M689.2 593.3h.01M689.4 592.3h.01M689.6 561.3h.01M689.9 568.1h.01M690.1 576.8h.01M690.3 572.0h.01M690.6 586.5h.01M690.8 581.7h.01M691.1 585.6h.01M691.3 586.5h.01M691.5 589.4h.01M691.8 588.5h.01M692.0 583.6h.01M692.2 590.4h.01M692.5 581.7h.01M692.7 587.5h.01M692.9 581.7h.01M693.2 577.8h.01M693.4 575.8h.01M693.7 585.6h.01M693.9 578.8h.01M694.1 583.6h.01M694.4 575.8h.01M694.6 581.7h.01M694.8 579.7h.01M695.1 587.5h.01M695.3 582.6h.01M695.8 586.5h.01M696.0 579.7h.01M696.3 579.7h.01M696.5 583.6h.01M696.7 572.9h.01M697.0 581.7h.01M697.2 582.6h.01M697.4 586.5h.01M697.7 571.0h.01M697.9 588.5h.01M698.2 585.6h.01M698.4 582.6h.01M698.6 572.9h.01M698.9 571.0h.01M699.1 533.2h.01M699.3 560.3h.01M699.6 581.7h.01M699.8 571.0h.01M700.0 585.6h.01M700.3 588.5h.01M700.5 589.4h.01M700.8 572.0h.01M701.0 577.8h.01M701.2 587.5h.01M701.5 587.5h.01M701.7 572.0h.01M701.9 583.6h.01M702.2 588.5h.01M702.4 577.8h.01M702.7 588.5h.01M702.9 575.8h.01M703.1 585.6h.01M703.4 589.4h.01M703.6 540.9h.01M703.8 566.1h.01M704.1 584.6h.01M704.3 587.5h.01M704.5 575.8h.01M704.8 582.6h.01M705.0 587.5h.01M705.3 580.7h.01M705.5 585.6h.01M705.7 580.7h.01M706.0 582.6h.01M706.2 568.1h.01M706.4 586.5h.01M706.7 584.6h.01M706.9 557.4h.01M707.1 588.5h.01M707.4 587.5h.01M707.6 576.8h.01M707.9 570.0h.01M708.1 568.1h.01M708.6 570.0h.01M708.8 566.1h.01M709.0 572.0h.01M709.3 567.1h.01M709.5 572.9h.01M709.8 570.0h.01M710.0 535.1h.01M710.2 572.0h.01M710.5 560.3h.01M710.7 566.1h.01M710.9 563.2h.01M711.2 572.9h.01M711.4 575.8h.01M711.6 568.1h.01M711.9 572.0h.01M712.1 579.7h.01M712.4 579.7h.01M712.6 584.6h.01M712.8 584.6h.01M713.1 547.7h.01M713.3 585.6h.01M713.5 587.5h.01M713.8 578.8h.01M714.0 557.4h.01M714.2 578.8h.01M714.5 562.3h.01M714.7 559.4h.01M715.0 586.5h.01M715.2 576.8h.01M715.4 590.4h.01M715.7 587.5h.01M715.9 583.6h.01M716.1 572.9h.01M716.4 586.5h.01M716.6 572.0h.01M716.9 583.6h.01M717.1 576.8h.01M717.3 587.5h.01M717.6 587.5h.01M717.8 581.7h.01M718.0 575.8h.01M718.3 582.6h.01M718.5 586.5h.01M718.7 587.5h.01M719.0 586.5h.01M719.2 571.0h.01M719.5 554.5h.01M719.7 579.7h.01M719.9 587.5h.01M720.2 588.5h.01M720.4 566.1h.01M720.6 590.4h.01M720.9 567.1h.01M721.1 586.5h.01M721.4 579.7h.01M721.6 585.6h.01M721.8 577.8h.01M722.1 582.6h.01M722.3 580.7h.01M722.5 573.9h.01M722.8 584.6h.01M723.0 582.6h.01M723.5 572.9h.01M723.7 580.7h.01M724.0 579.7h.01M724.2 582.6h.01M724.4 575.8h.01M724.7 582.6h.01M724.9 568.1h.01M725.1 581.7h.01M725.4 579.7h.01M725.6 576.8h.01M725.8 546.7h.01M726.1 567.1h.01M726.3 559.4h.01M726.6 571.0h.01M726.8 584.6h.01M727.0 584.6h.01M727.3 587.5h.01M727.5 589.4h.01M727.7 567.1h.01M728.0 588.5h.01M728.2 574.9h.01M728.4 584.6h.01M728.7 581.7h.01M728.9 585.6h.01M729.2 583.6h.01M729.4 584.6h.01M729.6 571.0h.01M729.9 572.0h.01M730.1 582.6h.01M730.3 581.7h.01M730.6 556.4h.01M730.8 579.7h.01M731.1 576.8h.01M731.3 584.6h.01M731.5 569.1h.01M731.8 560.3h.01M732.0 571.0h.01M732.2 540.9h.01M732.5 536.1h.01M732.7 557.4h.01M732.9 574.9h.01M733.2 572.0h.01M733.4 569.1h.01M733.7 572.9h.01M733.9 562.3h.01M734.1 564.2h.01M734.4 577.8h.01M734.6 579.7h.01M734.8 572.0h.01M735.1 561.3h.01M735.3 573.9h.01M735.5 587.5h.01M735.8 589.4h.01M736.0 573.9h.01M736.3 585.6h.01M736.7 564.2h.01M737.0 590.4h.01M737.2 590.4h.01M737.4 534.1h.01M737.7 582.6h.01M737.9 540.9h.01M738.2 585.6h.01M738.4 577.8h.01M738.6 580.7h.01M738.9 578.8h.01M739.1 585.6h.01M739.3 582.6h.01M739.6 559.4h.01M739.8 577.8h.01M740.0 578.8h.01M740.3 577.8h.01M740.5 563.2h.01M740.8 581.7h.01M741.0 560.3h.01M741.2 582.6h.01M741.5 576.8h.01M741.7 573.9h.01M741.9 575.8h.01M742.2 560.3h.01M742.4 585.6h.01M742.6 583.6h.01M742.9 552.6h.01M743.1 587.5h.01M743.4 547.7h.01M743.6 568.1h.01M743.8 550.6h.01M744.1 583.6h.01M744.3 563.2h.01M744.5 578.8h.01M744.8 579.7h.01M745.0 578.8h.01M745.3 590.4h.01M745.5 581.7h.01M745.7 568.1h.01M746.0 584.6h.01M746.2 582.6h.01M746.4 574.9h.01M746.7 587.5h.01M746.9 582.6h.01M747.1 584.6h.01M747.4 579.7h.01M747.6 588.5h.01M747.9 581.7h.01M748.1 577.8h.01M748.3 571.0h.01M748.6 583.6h.01M748.8 575.8h.01M749.0 554.5h.01M749.3 547.7h.01M749.5 579.7h.01M749.8 559.4h.01M750.0 572.0h.01M750.2 572.9h.01M750.5 572.0h.01M750.7 572.0h.01M750.9 563.2h.01M751.2 567.1h.01M751.4 572.0h.01M751.6 573.9h.01M751.9 569.1h.01M752.1 569.1h.01M752.4 534.1h.01M752.8 588.5h.01M753.1 586.5h.01M753.3 589.4h.01M753.5 573.9h.01M753.8 586.5h.01M754.0 589.4h.01M754.2 575.8h.01M754.5 576.8h.01M754.7 586.5h.01M755.0 536.1h.01M755.2 551.6h.01M755.4 578.8h.01M755.7 573.9h.01M755.9 568.1h.01M756.1 573.9h.01M756.4 567.1h.01M756.6 577.8h.01M756.9 573.9h.01M757.1 552.6h.01M757.3 564.2h.01M757.6 544.8h.01M757.8 575.8h.01M758.0 570.0h.01M758.3 587.5h.01M758.5 579.7h.01M758.7 585.6h.01M759.0 571.0h.01M759.2 565.2h.01M759.5 576.8h.01M759.7 586.5h.01M759.9 579.7h.01M760.2 582.6h.01M760.4 581.7h.01M760.6 573.9h.01M760.9 552.6h.01M761.1 540.9h.01M761.3 580.7h.01M761.6 566.1h.01M761.8 546.7h.01M762.1 583.6h.01M762.3 572.0h.01M762.5 573.9h.01M762.8 587.5h.01M763.0 559.4h.01M763.2 590.4h.01M763.5 572.9h.01M763.7 576.8h.01M763.9 579.7h.01M764.2 578.8h.01M764.4 583.6h.01M764.7 581.7h.01M764.9 581.7h.01M765.1 585.6h.01M765.6 578.8h.01M765.8 572.9h.01M766.3 559.4h.01M766.6 586.5h.01M766.8 568.1h.01M767.0 577.8h.01M767.3 586.5h.01M767.5 586.5h.01M767.7 584.6h.01M768.0 586.5h.01M768.2 571.0h.01M768.4 585.6h.01M768.7 577.8h.01M768.9 583.6h.01M769.2 586.5h.01M769.4 549.7h.01M769.6 585.6h.01M769.9 539.0h.01M770.1 584.6h.01M770.3 586.5h.01M770.6 584.6h.01M770.8 580.7h.01M771.0 583.6h.01M771.3 588.5h.01M771.5 574.9h.01M771.8 543.8h.01M772.0 560.3h.01M772.2 553.5h.01M772.5 582.6h.01M772.7 540.0h.01M772.9 572.9h.01M773.2 585.6h.01M773.4 583.6h.01M773.7 572.0h.01M773.9 564.2h.01M774.1 577.8h.01M774.4 581.7h.01M774.6 574.9h.01M774.8 583.6h.01M775.1 576.8h.01M775.3 568.1h.01M775.5 553.5h.01M775.8 569.1h.01M776.0 574.9h.01M776.5 570.0h.01M776.7 563.2h.01M777.0 566.1h.01M777.2 572.9h.01M777.4 574.9h.01M777.7 572.0h.01M777.9 560.3h.01M778.1 573.9h.01M778.4 564.2h.01M778.6 567.1h.01M778.9 553.5h.01M779.1 557.4h.01M779.3 567.1h.01M779.6 583.6h.01M779.8 576.8h.01M780.0 578.8h.01M780.5 584.6h.01M780.8 571.0h.01M781.0 566.1h.01M781.2 574.9h.01M781.5 583.6h.01M781.7 583.6h.01M781.9 577.8h.01M782.2 580.7h.01M782.4 570.0h.01M782.6 584.6h.01M782.9 579.7h.01M783.1 575.8h.01M783.4 583.6h.01M783.6 576.8h.01M783.8 539.0h.01M784.1 584.6h.01M784.3 560.3h.01M784.5 586.5h.01M784.8 574.9h.01M785.0 580.7h.01M785.2 580.7h.01M785.5 578.8h.01M785.7 577.8h.01M786.0 576.8h.01M786.2 565.2h.01M786.4 586.5h.01M786.7 581.7h.01M786.9 576.8h.01M787.1 584.6h.01M787.4 583.6h.01M787.6 583.6h.01M787.9 585.6h.01M788.1 586.5h.01M788.3 579.7h.01M788.6 582.6h.01M788.8 580.7h.01M789.0 584.6h.01M789.3 565.2h.01M789.5 574.9h.01M789.7 553.5h.01M790.0 580.7h.01M790.2 581.7h.01M790.5 569.1h.01M790.7 573.9h.01M790.9 587.5h.01M791.2 583.6h.01M791.4 585.6h.01M791.6 580.7h.01M791.9 569.1h.01M792.1 587.5h.01M792.3 579.7h.01M792.6 583.6h.01M792.8 578.8h.01M793.1 585.6h.01M793.3 585.6h.01M793.5 585.6h.01M793.8 578.8h.01M794.0 567.1h.01M794.2 584.6h.01M794.5 567.1h.01M794.7 579.7h.01M795.0 585.6h.01M795.2 583.6h.01M795.4 583.6h.01M795.7 576.8h.01M795.9 582.6h.01M796.1 561.3h.01M796.4 571.0h.01M796.6 545.8h.01M796.8 572.0h.01M797.1 578.8h.01M797.3 574.9h.01M797.6 567.1h.01M797.8 582.6h.01M798.0 579.7h.01M798.3 578.8h.01M798.5 583.6h.01M798.7 579.7h.01M799.0 552.6h.01M799.2 580.7h.01M799.4 580.7h.01M799.7 580.7h.01M799.9 577.8h.01M800.2 576.8h.01M800.4 578.8h.01M800.6 545.8h.01M800.9 572.0h.01M801.1 583.6h.01M801.3 579.7h.01M801.6 571.0h.01M801.8 576.8h.01M802.1 583.6h.01M802.3 564.2h.01M802.5 577.8h.01M802.8 563.2h.01M803.0 580.7h.01M803.2 564.2h.01M803.5 581.7h.01M803.7 549.7h.01M803.9 580.7h.01M804.2 568.1h.01M804.4 569.1h.01M804.7 584.6h.01M804.9 584.6h.01M805.1 581.7h.01M805.4 581.7h.01M805.6 569.1h.01M805.8 577.8h.01M806.1 584.6h.01M806.3 585.6h.01M806.5 578.8h.01M806.8 587.5h.01M807.0 582.6h.01M807.3 587.5h.01M807.5 584.6h.01M807.7 569.1h.01M808.0 580.7h.01M808.4 581.7h.01M808.7 585.6h.01M808.9 581.7h.01M809.2 581.7h.01M809.4 561.3h.01M809.6 584.6h.01M809.9 579.7h.01M810.1 572.9h.01M810.3 588.5h.01M810.6 586.5h.01M810.8 584.6h.01M811.0 587.5h.01M811.3 582.6h.01M811.5 584.6h.01M811.8 541.9h.01M812.0 578.8h.01M812.2 578.8h.01M812.5 576.8h.01M812.7 573.9h.01M812.9 578.8h.01M813.2 573.9h.01M813.4 583.6h.01M813.6 580.7h.01M813.9 580.7h.01M814.1 574.9h.01M814.4 579.7h.01M814.6 571.0h.01M814.8 568.1h.01M815.1 559.4h.01M815.3 580.7h.01M815.5 580.7h.01M815.8 576.8h.01M816.0 568.1h.01M816.3 571.0h.01M816.5 573.9h.01M816.7 579.7h.01M817.0 566.1h.01M817.2 566.1h.01M817.4 577.8h.01M817.7 584.6h.01M817.9 578.8h.01M818.1 585.6h.01M818.4 550.6h.01M818.6 587.5h.01M818.9 583.6h.01M819.1 539.0h.01M819.3 567.1h.01M819.6 582.6h.01M819.8 582.6h.01M820.0 574.9h.01M820.3 577.8h.01M820.5 581.7h.01M820.8 570.0h.01M821.0 568.1h.01M821.2 581.7h.01M821.5 556.4h.01M821.7 566.1h.01M821.9 567.1h.01M822.2 570.0h.01M822.6 565.2h.01M822.9 577.8h.01M823.4 564.2h.01M823.6 578.8h.01M823.8 569.1h.01M824.1 564.2h.01M824.3 561.3h.01M824.5 569.1h.01M824.8 566.1h.01M825.0 568.1h.01M825.2 542.9h.01M825.5 542.9h.01M825.7 568.1h.01M826.0 576.8h.01M826.2 578.8h.01M826.4 547.7h.01M826.7 578.8h.01M826.9 581.7h.01M827.1 579.7h.01M827.4 587.5h.01M827.6 582.6h.01M827.8 577.8h.01M828.1 588.5h.01M828.3 564.2h.01M828.6 536.1h.01M828.8 589.4h.01M829.0 579.7h.01M829.3 589.4h.01M829.5 578.8h.01M829.7 581.7h.01M830.0 589.4h.01M830.2 574.9h.01M830.5 589.4h.01M830.7 542.9h.01M830.9 583.6h.01M831.2 586.5h.01M831.4 586.5h.01M831.6 577.8h.01M831.9 568.1h.01M832.1 584.6h.01M832.3 550.6h.01M832.6 584.6h.01M832.8 571.0h.01M833.1 586.5h.01M833.3 581.7h.01M833.5 580.7h.01M833.8 587.5h.01M834.0 567.1h.01M834.2 584.6h.01M834.5 589.4h.01M834.7 588.5h.01M834.9 590.4h.01M835.2 588.5h.01M835.4 578.8h.01M835.7 554.5h.01M835.9 587.5h.01M836.1 547.7h.01M836.4 571.0h.01M836.6 578.8h.01M836.8 580.7h.01M837.1 565.2h.01M837.6 564.2h.01M837.8 578.8h.01M838.0 570.0h.01M838.3 582.6h.01M838.5 546.7h.01M838.7 580.7h.01M839.0 564.2h.01M839.2 573.9h.01M839.4 581.7h.01M839.7 581.7h.01M839.9 581.7h.01M840.2 581.7h.01M840.4 576.8h.01M840.6 580.7h.01M840.9 583.6h.01M841.1 584.6h.01M841.3 580.7h.01M841.6 577.8h.01M841.8 577.8h.01M842.0 578.8h.01M842.3 582.6h.01M842.5 586.5h.01M842.8 587.5h.01M843.0 591.4h.01M843.2 580.7h.01M843.5 584.6h.01M843.7 579.7h.01M843.9 588.5h.01M844.2 578.8h.01M844.4 573.9h.01M844.7 582.6h.01M844.9 581.7h.01M845.1 568.1h.01M845.4 581.7h.01M845.6 578.8h.01M845.8 580.7h.01M846.1 584.6h.01M846.3 582.6h.01M846.5 556.4h.01M846.8 584.6h.01M847.0 571.0h.01M847.3 581.7h.01M847.5 579.7h.01M847.7 581.7h.01M848.0 579.7h.01M848.2 578.8h.01M848.4 588.5h.01M848.7 586.5h.01M848.9 573.9h.01M849.1 583.6h.01M849.4 572.9h.01M849.6 570.0h.01M849.9 556.4h.01M850.1 572.9h.01M850.3 584.6h.01M850.6 559.4h.01M850.8 584.6h.01M851.0 585.6h.01M851.3 581.7h.01M851.5 588.5h.01M851.8 588.5h.01M852.0 575.8h.01M852.2 589.4h.01M852.5 588.5h.01M852.7 590.4h.01M852.9 583.6h.01M853.2 589.4h.01M853.4 587.5h.01M853.6 580.7h.01M853.9 585.6h.01M854.1 547.7h.01M854.4 585.6h.01M854.6 583.6h.01M854.8 575.8h.01M855.1 582.6h.01M855.3 562.3h.01M855.5 581.7h.01M855.8 577.8h.01M856.0 586.5h.01M856.2 541.9h.01M856.5 572.9h.01M856.7 579.7h.01M857.0 574.9h.01M857.2 577.8h.01M857.4 582.6h.01M857.7 542.9h.01M857.9 573.9h.01M858.1 587.5h.01M858.4 581.7h.01M858.6 593.3h.01M858.9 555.5h.01M859.1 582.6h.01M859.3 580.7h.01M859.6 591.4h.01M859.8 593.3h.01M860.0 584.6h.01M860.3 577.8h.01M860.5 584.6h.01M860.7 593.3h.01M861.0 592.3h.01M861.2 590.4h.01M861.5 583.6h.01M861.7 580.7h.01M861.9 590.4h.01M862.2 590.4h.01M862.4 589.4h.01M862.6 587.5h.01M862.9 585.6h.01M863.1 591.4h.01M863.3 578.8h.01M863.6 585.6h.01M863.8 567.1h.01M864.1 583.6h.01M864.3 582.6h.01M864.5 586.5h.01M864.8 569.1h.01M865.0 574.9h.01M865.2 580.7h.01M865.5 553.5h.01M865.7 582.6h.01M866.0 591.4h.01M866.2 579.7h.01M866.4 586.5h.01M866.7 579.7h.01M866.9 590.4h.01M867.4 557.4h.01M867.6 583.6h.01M867.8 569.1h.01M868.1 586.5h.01M868.3 586.5h.01M868.6 586.5h.01M868.8 590.4h.01M869.0 588.5h.01M869.3 590.4h.01M869.5 590.4h.01M869.7 580.7h.01M870.0 585.6h.01M870.2 585.6h.01M870.4 585.6h.01M870.7 585.6h.01M870.9 585.6h.01M871.2 588.5h.01M871.4 592.3h.01M871.6 585.6h.01M871.9 578.8h.01M872.1 572.0h.01M872.3 583.6h.01M872.6 571.0h.01M872.8 560.3h.01M873.1 575.8h.01M873.3 583.6h.01M873.5 576.8h.01M873.8 587.5h.01M874.0 583.6h.01M874.2 582.6h.01M874.5 585.6h.01M874.7 585.6h.01M874.9 581.7h.01M875.2 576.8h.01M875.4 581.7h.01M875.7 586.5h.01M875.9 588.5h.01M876.1 582.6h.01M876.4 585.6h.01M876.6 587.5h.01M876.8 586.5h.01M877.1 587.5h.01M877.3 561.3h.01M877.5 585.6h.01M877.8 576.8h.01M878.0 577.8h.01M878.5 586.5h.01M878.7 575.8h.01M879.0 577.8h.01M879.2 581.7h.01M879.4 570.0h.01M879.7 586.5h.01M879.9 589.4h.01M880.2 587.5h.01M880.4 585.6h.01M880.6 569.1h.01M880.9 586.5h.01M881.1 577.8h.01M881.3 585.6h.01M881.6 583.6h.01M881.8 575.8h.01M882.0 583.6h.01M882.3 564.2h.01M882.5 584.6h.01M882.8 572.9h.01M883.0 585.6h.01M883.2 583.6h.01M883.5 577.8h.01M883.7 585.6h.01M883.9 580.7h.01M884.2 585.6h.01M884.4 583.6h.01M884.6 581.7h.01M884.9 583.6h.01M885.1 583.6h.01M885.4 582.6h.01M885.6 588.5h.01M885.8 587.5h.01M886.1 590.4h.01M886.3 590.4h.01M886.5 580.7h.01M886.8 540.0h.01M887.0 557.4h.01M887.3 588.5h.01M887.5 540.0h.01M887.7 584.6h.01M888.0 571.0h.01M888.2 583.6h.01M888.4 572.0h.01M888.7 580.7h.01M888.9 572.9h.01M889.1 568.1h.01M889.4 581.7h.01M889.6 583.6h.01M889.9 574.9h.01M890.1 581.7h.01M890.3 563.2h.01M890.6 588.5h.01M890.8 572.0h.01M891.0 580.7h.01M891.3 588.5h.01M891.5 563.2h.01M891.8 576.8h.01M892.0 578.8h.01M892.5 579.7h.01M892.7 579.7h.01M892.9 585.6h.01M893.2 587.5h.01M893.4 584.6h.01M893.6 578.8h.01M893.9 580.7h.01M894.1 586.5h.01M894.4 584.6h.01M894.6 580.7h.01M894.8 569.1h.01M895.1 584.6h.01M895.3 572.0h.01M895.5 579.7h.01M895.8 564.2h.01M896.0 575.8h.01M896.2 573.9h.01M896.5 579.7h.01M896.7 583.6h.01M897.0 582.6h.01M897.2 564.2h.01M897.4 586.5h.01M897.7 587.5h.01M897.9 587.5h.01M898.1 587.5h.01M898.4 579.7h.01M898.6 583.6h.01M898.8 582.6h.01M899.1 575.8h.01M899.3 583.6h.01M899.6 580.7h.01M899.8 567.1h.01M900.0 572.9h.01M900.3 577.8h.01M900.5 577.8h.01M900.7 579.7h.01M901.0 570.0h.01M901.2 583.6h.01M901.5 578.8h.01M901.7 577.8h.01M901.9 579.7h.01M902.2 584.6h.01M902.4 585.6h.01M902.6 580.7h.01M902.9 586.5h.01M903.1 587.5h.01M903.3 587.5h.01M903.6 558.4h.01M903.8 545.8h.01M904.1 569.1h.01M904.3 541.9h.01M904.5 552.6h.01M904.8 562.3h.01M905.0 569.1h.01M905.2 558.4h.01M905.5 568.1h.01M905.7 572.0h.01M905.9 569.1h.01M906.2 553.5h.01M906.4 572.0h.01M906.7 571.0h.01M906.9 565.2h.01M907.1 565.2h.01M907.4 575.8h.01M907.6 564.2h.01M907.8 577.8h.01M908.1 572.0h.01M908.3 580.7h.01M908.6 580.7h.01M908.8 586.5h.01M909.0 583.6h.01M909.3 589.4h.01M909.5 548.7h.01M909.7 583.6h.01M910.0 583.6h.01M910.2 582.6h.01M910.4 585.6h.01M910.7 581.7h.01M910.9 563.2h.01M911.2 584.6h.01M911.4 572.9h.01M911.6 585.6h.01M911.9 585.6h.01M912.1 564.2h.01M912.3 572.9h.01M912.6 552.6h.01M912.8 583.6h.01M913.0 584.6h.01M913.3 579.7h.01M913.5 572.0h.01M913.8 581.7h.01M914.0 546.7h.01M914.2 574.9h.01M914.5 571.0h.01M914.7 583.6h.01M914.9 586.5h.01M915.2 578.8h.01M915.4 568.1h.01M915.7 586.5h.01M915.9 582.6h.01M916.1 574.9h.01M916.4 586.5h.01M916.6 587.5h.01M916.8 576.8h.01M917.1 585.6h.01M917.3 584.6h.01M917.5 577.8h.01M917.8 586.5h.01M918.0 575.8h.01M918.3 538.0h.01M918.5 565.2h.01M918.7 567.1h.01M919.0 565.2h.01M919.2 582.6h.01M919.4 573.9h.01M919.7 580.7h.01M919.9 580.7h.01M920.1 585.6h.01M920.4 572.9h.01M920.6 578.8h.01M920.9 586.5h.01M921.1 574.9h.01M921.6 581.7h.01M921.8 572.9h.01M922.0 562.3h.01M922.3 581.7h.01M922.5 572.9h.01M922.8 580.7h.01M923.0 568.1h.01M923.2 538.0h.01M923.5 589.4h.01M923.7 581.7h.01M923.9 589.4h.01M924.2 572.0h.01M924.4 581.7h.01M924.6 588.5h.01M924.9 586.5h.01M925.1 571.0h.01M925.4 586.5h.01M925.6 580.7h.01M925.8 572.9h.01M926.1 578.8h.01M926.3 583.6h.01M926.5 583.6h.01M926.8 581.7h.01M927.0 543.8h.01M927.2 588.5h.01M927.5 586.5h.01M927.7 578.8h.01M928.0 586.5h.01M928.2 583.6h.01M928.4 587.5h.01M928.7 582.6h.01M928.9 584.6h.01M929.1 573.9h.01M929.4 580.7h.01M929.6 585.6h.01M929.9 582.6h.01M930.1 553.5h.01M930.3 587.5h.01M930.6 583.6h.01M930.8 583.6h.01M931.0 586.5h.01M931.3 586.5h.01M931.5 586.5h.01M931.7 589.4h.01M932.0 572.9h.01M932.2 590.4h.01M932.5 577.8h.01M932.7 588.5h.01M932.9 578.8h.01M933.2 588.5h.01M933.4 586.5h.01M933.6 589.4h.01M933.9 584.6h.01M934.1 582.6h.01M934.6 589.4h.01M935.1 586.5h.01M935.3 537.0h.01M935.5 586.5h.01M935.8 574.9h.01M936.0 589.4h.01M936.2 588.5h.01M936.5 590.4h.01M936.7 572.0h.01M937.0 589.4h.01M937.2 585.6h.01M937.4 591.4h.01M937.7 590.4h.01M937.9 587.5h.01M938.1 565.2h.01M938.4 558.4h.01M938.6 573.9h.01M938.8 582.6h.01M939.1 587.5h.01M939.3 562.3h.01M939.6 588.5h.01M939.8 586.5h.01M940.0 583.6h.01M940.3 582.6h.01M940.5 582.6h.01M940.7 575.8h.01M941.0 577.8h.01M941.2 579.7h.01M941.4 573.9h.01M941.7 573.9h.01M941.9 583.6h.01M942.2 580.7h.01M942.4 582.6h.01M942.6 565.2h.01M942.9 579.7h.01M943.1 564.2h.01M943.3 564.2h.01M943.6 569.1h.01M943.8 590.4h.01M944.1 584.6h.01M944.3 576.8h.01M944.5 585.6h.01M944.8 574.9h.01" stroke="#f4563c" stroke-width="4.6" stroke-linecap="square" fill="none"/><path d="M93.7 531.2H945.0" stroke="#38a8f2" stroke-width="5"/><path d="M93.0 533.2L93.2 534.1L93.5 533.2L93.7 527.3L93.9 533.2L94.2 523.5L94.4 518.6L94.7 524.4L94.9 525.4L95.1 525.4L95.4 519.2L95.6 513.9L95.8 514.2L96.1 519.9L96.3 521.4L96.5 515.4L96.8 514.3L97.0 517.8L97.3 514.9L97.5 503.2L97.7 503.6L98.0 489.9L98.2 502.1L98.4 507.5L98.7 513.1L98.9 490.4L99.2 484.0L99.4 494.0L99.6 491.0L99.9 502.5L100.1 505.5L100.3 500.8L100.6 509.3L100.8 492.4L101.0 512.8L101.3 519.0L101.5 522.0L101.8 485.4L102.0 492.5L102.2 492.9L102.5 495.2L102.7 485.8L102.9 507.2L103.2 491.9L103.4 490.8L103.7 502.0L103.9 478.0L104.1 512.3L104.4 494.9L104.6 488.3L104.8 495.1L105.1 493.8L105.3 516.2L105.5 503.6L105.8 525.4L106.0 503.0L106.3 480.6L106.5 504.7L106.7 480.4L107.0 481.8L107.2 487.5L107.4 492.0L107.7 484.1L107.9 504.3L108.1 488.6L108.4 486.9L108.6 485.0L108.9 476.1L109.1 496.4L109.3 472.0L109.6 481.2L109.8 461.4L110.0 430.2L110.3 462.5L110.5 469.6L110.8 464.4L111.0 444.2L111.2 477.6L111.5 446.1L111.7 439.6L111.9 473.9L112.2 462.0L112.4 458.3L112.6 503.5L112.9 479.6L113.1 484.0L113.4 489.7L113.6 483.9L113.8 515.7L114.1 488.5L114.3 499.3L114.5 488.4L114.8 488.5L115.0 478.0L115.2 503.8L115.5 486.8L115.7 499.4L116.0 505.7L116.2 493.2L116.4 485.9L116.7 478.1L116.9 510.4L117.1 470.6L117.4 490.0L117.6 472.5L117.8 467.9L118.1 472.6L118.3 509.6L118.6 514.4L118.8 487.5L119.0 508.4L119.3 490.1L119.5 483.5L119.7 492.0L120.0 484.9L120.2 346.9L120.5 254.7L120.7 473.0L120.9 502.0L121.2 493.9L121.4 494.9L121.6 498.9L121.9 482.4L122.1 580.7L122.3 581.7L122.6 583.6L122.8 574.9L123.1 578.8L123.3 577.8L123.5 574.9L123.8 586.5L124.0 575.8L124.2 574.9L124.5 578.8L124.7 581.7L125.0 551.6L125.2 576.8L125.4 582.6L125.7 578.8L125.9 579.7L126.1 561.3L126.4 555.5L126.6 577.8L126.8 580.7L127.1 581.7L127.3 551.6L127.6 575.8L127.8 581.7L128.0 578.8L128.3 575.8L128.5 584.6L128.7 581.7L129.0 582.6L129.2 580.7L129.4 577.8L129.7 574.9L129.9 573.9L130.2 573.9L130.4 569.1L130.6 577.8L130.9 574.9L131.1 548.7L131.3 574.9L131.6 540.0L131.8 579.7L132.1 575.8L132.3 572.0L132.5 575.8L132.8 579.7L133.0 575.8L133.2 578.8L133.5 453.6L133.7 580.7L133.9 577.8L134.2 573.9L134.4 581.7L134.7 581.7L134.9 578.8L135.1 580.7L135.4 577.8L135.6 576.8L135.8 578.8L136.1 580.7L136.3 580.7L136.5 582.6L136.8 579.7L137.0 580.7L137.3 581.7L137.5 577.8L137.7 582.6L138.0 578.8L138.2 580.7L138.4 536.1L138.7 582.6L138.9 577.8L139.2 574.9L139.4 576.8L139.6 555.5L139.9 579.7L140.1 582.6L140.3 576.8L140.6 574.9L140.8 574.9L141.0 547.7L141.3 564.2L141.5 577.8L141.8 579.7L142.0 571.0L142.2 576.8L142.5 581.7L142.7 583.6L142.9 583.6L143.2 582.6L143.4 581.7L143.6 573.9L143.9 572.9L144.1 514.7L144.4 568.1L144.6 561.3L144.8 572.9L145.1 572.9L145.3 573.9L145.5 579.7L145.8 581.7L146.0 578.8L146.2 570.0L146.5 580.7L146.7 577.8L147.0 583.6L147.2 584.6L147.4 567.1L147.7 584.6L147.9 583.6L148.1 581.7L148.4 584.6L148.6 584.6L148.9 567.1L149.1 567.1L149.3 575.8L149.6 569.1L149.8 584.6L150.0 580.7L150.3 584.6L150.5 583.6L150.7 574.9L151.0 580.7L151.2 582.6L151.5 579.7L151.7 580.7L151.9 571.0L152.2 574.9L152.4 575.8L152.6 568.1L152.9 572.0L153.1 575.8L153.3 569.1L153.6 569.1L153.8 574.9L154.1 572.0L154.3 573.9L154.5 578.8L154.8 579.7L155.0 580.7L155.2 580.7L155.5 581.7L155.7 565.2L156.0 571.0L156.2 575.8L156.4 570.0L156.7 578.8L156.9 573.9L157.1 570.0L157.4 569.1L157.6 580.7L157.8 577.8L158.1 578.8L158.3 578.8L158.6 574.9L158.8 564.2L159.0 562.3L159.3 576.8L159.5 574.9L159.7 572.9L160.0 574.9L160.2 575.8L160.4 577.8L160.7 557.4L160.9 572.9L161.2 579.7L161.4 579.7L161.6 576.8L161.9 572.9L162.1 581.7L162.3 572.9L162.6 575.8L162.8 574.9L163.1 577.8L163.3 581.7L163.5 568.1L163.8 581.7L164.0 577.8L164.2 582.6L164.5 578.8L164.7 580.7L164.9 569.1L165.2 578.8L165.4 569.1L165.7 579.7L165.9 582.6L166.1 583.6L166.4 583.6L166.6 566.1L166.8 575.8L167.1 583.6L167.3 578.8L167.6 583.6L167.8 584.6L168.0 565.2L168.3 572.9L168.5 583.6L168.7 566.1L169.0 581.7L169.2 576.8L169.4 456.5L169.7 579.7L169.9 580.7L170.2 586.5L170.4 563.2L170.6 583.6L170.9 572.9L171.1 572.9L171.3 554.5L171.6 573.9L171.8 575.8L172.0 580.7L172.3 573.9L172.5 573.9L172.8 575.8L173.0 576.8L173.2 573.9L173.5 573.9L173.7 570.0L173.9 564.2L174.2 573.9L174.4 569.1L174.6 551.6L174.9 565.2L175.1 568.1L175.4 560.3L175.6 563.2L175.8 564.2L176.1 563.2L176.3 566.1L176.5 570.0L176.8 563.2L177.0 572.9L177.3 563.2L177.5 574.9L177.7 570.0L178.0 577.8L178.2 577.8L178.4 575.8L178.7 578.8L178.9 579.7L179.1 576.8L179.4 580.7L179.6 582.6L179.9 583.6L180.1 580.7L180.3 585.6L180.6 567.1L180.8 583.6L181.0 581.7L181.3 561.3L181.5 575.8L181.8 581.7L182.0 583.6L182.2 576.8L182.5 576.8L182.7 583.6L182.9 572.9L183.2 566.1L183.4 565.2L183.6 582.6L183.9 583.6L184.1 586.5L184.4 580.7L184.6 587.5L184.8 574.9L185.1 579.7L185.3 583.6L185.5 577.8L185.8 589.4L186.0 582.6L186.2 586.5L186.5 523.5L186.7 584.6L187.0 583.6L187.2 584.6L187.4 581.7L187.7 568.1L187.9 580.7L188.1 567.1L188.4 574.9L188.6 582.6L188.8 583.6L189.1 582.6L189.3 582.6L189.6 582.6L189.8 584.6L190.0 584.6L190.3 576.8L190.5 580.7L190.7 582.6L191.0 580.7L191.2 575.8L191.5 584.6L191.7 585.6L191.9 538.0L192.2 578.8L192.4 575.8L192.6 577.8L192.9 572.9L193.1 570.0L193.3 571.0L193.6 567.1L193.8 553.5L194.1 572.9L194.3 576.8L194.5 573.9L194.8 574.9L195.0 583.6L195.2 572.9L195.5 541.9L195.7 575.8L195.9 572.0L196.2 565.2L196.4 574.9L196.7 572.9L196.9 576.8L197.1 577.8L197.4 575.8L197.6 568.1L197.8 577.8L198.1 562.3L198.3 572.9L198.6 575.8L198.8 573.9L199.0 573.9L199.3 576.8L199.5 574.9L199.7 571.0L200.0 552.6L200.2 576.8L200.4 574.9L200.7 581.7L200.9 577.8L201.2 576.8L201.4 564.2L201.6 563.2L201.9 571.0L202.1 572.9L202.3 572.0L202.6 572.9L202.8 581.7L203.1 577.8L203.3 577.8L203.5 575.8L203.8 545.8L204.0 577.8L204.2 514.7L204.5 580.7L204.7 578.8L204.9 579.7L205.2 580.7L205.4 578.8L205.7 587.5L205.9 582.6L206.1 583.6L206.4 583.6L206.6 576.8L206.8 583.6L207.1 583.6L207.3 571.0L207.5 576.8L207.8 585.6L208.0 585.6L208.3 585.6L208.5 572.9L208.7 582.6L209.0 571.0L209.2 581.7L209.4 589.4L209.7 586.5L209.9 583.6L210.1 582.6L210.4 582.6L210.6 576.8L210.9 585.6L211.1 581.7L211.3 582.6L211.6 582.6L211.8 579.7L212.0 571.0L212.3 579.7L212.5 573.9L212.8 580.7L213.0 582.6L213.2 581.7L213.5 507.9L213.7 579.7L213.9 581.7L214.2 577.8L214.4 580.7L214.6 574.9L214.9 568.1L215.1 575.8L215.4 574.9L215.6 569.1L215.8 571.0L216.1 575.8L216.3 572.9L216.5 575.8L216.8 572.9L217.0 569.1L217.2 573.9L217.5 575.8L217.7 575.8L218.0 576.8L218.2 574.9L218.4 569.1L218.7 575.8L218.9 575.8L219.1 576.8L219.4 572.0L219.6 572.0L219.9 567.1L220.1 576.8L220.3 551.6L220.6 574.9L220.8 578.8L221.0 577.8L221.3 577.8L221.5 578.8L221.7 572.0L222.0 575.8L222.2 570.0L222.5 575.8L222.7 567.1L222.9 565.2L223.2 581.7L223.4 575.8L223.6 579.7L223.9 579.7L224.1 576.8L224.3 577.8L224.6 577.8L224.8 576.8L225.1 582.6L225.3 579.7L225.5 583.6L225.8 573.9L226.0 572.9L226.2 577.8L226.5 576.8L226.7 559.4L227.0 576.8L227.2 573.9L227.4 576.8L227.7 575.8L227.9 573.9L228.1 569.1L228.4 575.8L228.6 572.0L228.8 573.9L229.1 569.1L229.3 572.9L229.6 570.0L229.8 578.8L230.0 577.8L230.3 565.2L230.5 577.8L230.7 581.7L231.0 581.7L231.2 580.7L231.4 579.7L231.7 584.6L231.9 579.7L232.2 547.7L232.4 556.4L232.6 581.7L232.9 572.0L233.1 577.8L233.3 583.6L233.6 579.7L233.8 578.8L234.1 577.8L234.3 567.1L234.5 578.8L234.8 574.9L235.0 572.9L235.2 572.0L235.5 568.1L235.7 574.9L235.9 569.1L236.2 570.0L236.4 576.8L236.7 573.9L236.9 582.6L237.1 581.7L237.4 578.8L237.6 584.6L237.8 574.9L238.1 581.7L238.3 579.7L238.5 571.0L238.8 551.6L239.0 583.6L239.3 585.6L239.5 581.7L239.7 566.1L240.0 578.8L240.2 576.8L240.4 582.6L240.7 582.6L240.9 579.7L241.2 580.7L241.4 576.8L241.6 582.6L241.9 542.9L242.1 574.9L242.3 581.7L242.6 582.6L242.8 582.6L243.0 567.1L243.3 514.7L243.5 573.9L243.8 571.0L244.0 547.7L244.2 576.8L244.5 580.7L244.7 541.9L244.9 573.9L245.2 575.8L245.4 577.8L245.7 575.8L245.9 574.9L246.1 566.1L246.4 582.6L246.6 580.7L246.8 577.8L247.1 577.8L247.3 580.7L247.5 579.7L247.8 582.6L248.0 576.8L248.3 577.8L248.5 554.5L248.7 570.0L249.0 571.0L249.2 572.9L249.4 573.9L249.7 570.0L249.9 570.0L250.1 563.2L250.4 572.9L250.6 568.1L250.9 551.6L251.1 567.1L251.3 573.9L251.6 577.8L251.8 572.0L252.0 572.9L252.3 569.1L252.5 571.0L252.8 569.1L253.0 565.2L253.2 581.7L253.5 572.9L253.7 579.7L253.9 579.7L254.2 577.8L254.4 577.8L254.6 576.8L254.9 582.6L255.1 578.8L255.4 574.9L255.6 578.8L255.8 572.9L256.1 552.6L256.3 572.0L256.5 561.3L256.8 573.9L257.0 573.9L257.2 552.6L257.5 577.8L257.7 567.1L258.0 573.9L258.2 570.0L258.4 561.3L258.7 570.0L258.9 572.0L259.1 572.0L259.4 571.0L259.6 577.8L259.9 577.8L260.1 571.0L260.3 572.0L260.6 569.1L260.8 577.8L261.0 534.1L261.3 564.2L261.5 579.7L261.7 580.7L262.0 577.8L262.2 575.8L262.5 575.8L262.7 571.0L262.9 571.0L263.2 577.8L263.4 578.8L263.6 535.1L263.9 574.9L264.1 577.8L264.3 577.8L264.6 572.9L264.8 577.8L265.1 540.0L265.3 579.7L265.5 581.7L265.8 555.5L266.0 572.9L266.2 575.8L266.5 581.7L266.7 573.9L266.9 576.8L267.2 575.8L267.4 579.7L267.7 581.7L267.9 571.0L268.1 575.8L268.4 583.6L268.6 579.7L268.8 585.6L269.1 585.6L269.3 583.6L269.6 580.7L269.8 577.8L270.0 581.7L270.3 580.7L270.5 551.6L270.7 581.7L271.0 579.7L271.2 574.9L271.4 570.0L271.7 579.7L271.9 566.1L272.2 582.6L272.4 586.5L272.6 572.0L272.9 581.7L273.1 579.7L273.3 579.7L273.6 581.7L273.8 581.7L274.0 584.6L274.3 568.1L274.5 583.6L274.8 578.8L275.0 568.1L275.2 578.8L275.5 575.8L275.7 577.8L275.9 578.8L276.2 580.7L276.4 573.9L276.7 573.9L276.9 576.8L277.1 573.9L277.4 576.8L277.6 581.7L277.8 576.8L278.1 574.9L278.3 576.8L278.5 578.8L278.8 579.7L279.0 582.6L279.3 566.1L279.5 575.8L279.7 580.7L280.0 582.6L280.2 580.7L280.4 579.7L280.7 574.9L280.9 578.8L281.1 580.7L281.4 552.6L281.6 576.8L281.9 579.7L282.1 577.8L282.3 577.8L282.6 566.1L282.8 578.8L283.0 580.7L283.3 579.7L283.5 573.9L283.8 570.0L284.0 578.8L284.2 540.9L284.5 578.8L284.7 580.7L284.9 581.7L285.2 573.9L285.4 572.0L285.6 572.9L285.9 580.7L286.1 565.2L286.4 576.8L286.6 577.8L286.8 578.8L287.1 549.7L287.3 574.9L287.5 579.7L287.8 583.6L288.0 567.1L288.2 579.7L288.5 582.6L288.7 571.0L289.0 583.6L289.2 575.8L289.4 584.6L289.7 580.7L289.9 582.6L290.1 554.5L290.4 576.8L290.6 577.8L290.9 555.5L291.1 584.6L291.3 584.6L291.6 565.2L291.8 563.2L292.0 587.5L292.3 577.8L292.5 585.6L292.7 582.6L293.0 581.7L293.2 570.0L293.5 585.6L293.7 580.7L293.9 584.6L294.2 581.7L294.4 573.9L294.6 582.6L294.9 578.8L295.1 579.7L295.4 580.7L295.6 573.9L295.8 577.8L296.1 573.9L296.3 579.7L296.5 580.7L296.8 564.2L297.0 578.8L297.2 572.0L297.5 578.8L297.7 575.8L298.0 576.8L298.2 572.9L298.4 566.1L298.7 566.1L298.9 572.9L299.1 498.2L299.4 580.7L299.6 444.9L299.8 575.8L300.1 577.8L300.3 578.8L300.6 577.8L300.8 575.8L301.0 571.0L301.3 581.7L301.5 539.0L301.7 564.2L302.0 572.9L302.2 563.2L302.4 577.8L302.7 566.1L302.9 564.2L303.2 547.7L303.4 567.1L303.6 553.5L303.9 553.5L304.1 573.9L304.3 564.2L304.6 567.1L304.8 569.1L305.1 559.4L305.3 560.3L305.5 566.1L305.8 567.1L306.0 576.8L306.2 572.0L306.5 574.9L306.7 574.9L306.9 576.8L307.2 577.8L307.4 577.8L307.7 579.7L307.9 557.4L308.1 570.0L308.4 572.9L308.6 578.8L308.8 569.1L309.1 578.8L309.3 576.8L309.5 579.7L309.8 575.8L310.0 572.0L310.3 569.1L310.5 574.9L310.7 577.8L311.0 569.1L311.2 540.9L311.4 573.9L311.7 540.9L311.9 573.9L312.2 577.8L312.4 579.7L312.6 579.7L312.9 556.4L313.1 573.9L313.3 568.1L313.6 525.4L313.8 566.1L314.0 579.7L314.3 573.9L314.5 573.9L314.8 576.8L315.0 578.8L315.2 576.8L315.5 565.2L315.7 580.7L315.9 576.8L316.2 582.6L316.4 577.8L316.6 570.0L316.9 564.2L317.1 584.6L317.4 579.7L317.6 564.2L317.8 569.1L318.1 571.0L318.3 563.2L318.5 565.2L318.8 562.3L319.0 566.1L319.3 571.0L319.5 569.1L319.7 568.1L320.0 569.1L320.2 568.1L320.4 543.8L320.7 566.1L320.9 563.2L321.1 571.0L321.4 574.9L321.6 579.7L321.9 583.6L322.1 556.4L322.3 583.6L322.6 574.9L322.8 571.0L323.0 575.8L323.3 585.6L323.5 584.6L323.8 578.8L324.0 584.6L324.2 583.6L324.5 581.7L324.7 542.9L324.9 529.3L325.2 579.7L325.4 583.6L325.6 584.6L325.9 576.8L326.1 581.7L326.4 583.6L326.6 583.6L326.8 577.8L327.1 583.6L327.3 543.8L327.5 582.6L327.8 578.8L328.0 581.7L328.2 546.7L328.5 583.6L328.7 581.7L329.0 577.8L329.2 572.0L329.4 584.6L329.7 566.1L329.9 566.1L330.1 581.7L330.4 575.8L330.6 583.6L330.9 582.6L331.1 572.9L331.3 580.7L331.6 574.9L331.8 572.9L332.0 569.1L332.3 563.2L332.5 570.0L332.7 570.0L333.0 564.2L333.2 570.0L333.5 559.4L333.7 571.0L333.9 545.8L334.2 568.1L334.4 568.1L334.6 573.9L334.9 553.5L335.1 568.1L335.3 552.6L335.6 559.4L335.8 562.3L336.1 567.1L336.3 577.8L336.5 576.8L336.8 575.8L337.0 568.1L337.2 578.8L337.5 578.8L337.7 567.1L337.9 559.4L338.2 579.7L338.4 568.1L338.7 582.6L338.9 582.6L339.1 581.7L339.4 579.7L339.6 582.6L339.8 576.8L340.1 570.0L340.3 583.6L340.6 569.1L340.8 580.7L341.0 569.1L341.3 574.9L341.5 568.1L341.7 555.5L342.0 562.3L342.2 509.9L342.4 572.9L342.7 584.6L342.9 582.6L343.2 580.7L343.4 569.1L343.6 575.8L343.9 582.6L344.1 568.1L344.3 578.8L344.6 558.4L344.8 573.9L345.0 569.1L345.3 576.8L345.5 561.3L345.8 580.7L346.0 579.7L346.2 579.7L346.5 545.8L346.7 581.7L346.9 575.8L347.2 552.6L347.4 579.7L347.7 578.8L347.9 581.7L348.1 580.7L348.4 579.7L348.6 445.8L348.8 578.8L349.1 569.1L349.3 570.0L349.5 572.9L349.8 575.8L350.0 543.8L350.3 582.6L350.5 449.7L350.7 550.6L351.0 574.9L351.2 581.7L351.4 579.7L351.7 578.8L351.9 571.0L352.1 579.7L352.4 583.6L352.6 580.7L352.9 563.2L353.1 585.6L353.3 576.8L353.6 554.5L353.8 577.8L354.0 585.6L354.3 582.6L354.5 581.7L354.8 583.6L355.0 553.5L355.2 493.4L355.5 580.7L355.7 581.7L355.9 581.7L356.2 580.7L356.4 572.0L356.6 552.6L356.9 573.9L357.1 581.7L357.4 581.7L357.6 577.8L357.8 566.1L358.1 582.6L358.3 575.8L358.5 570.0L358.8 565.2L359.0 577.8L359.2 574.9L359.5 574.9L359.7 577.8L360.0 571.0L360.2 568.1L360.4 548.7L360.7 573.9L360.9 569.1L361.1 571.0L361.4 577.8L361.6 579.7L361.9 568.1L362.1 567.1L362.3 568.1L362.6 574.9L362.8 567.1L363.0 574.9L363.3 533.2L363.5 571.0L363.7 574.9L364.0 575.8L364.2 579.7L364.5 577.8L364.7 581.7L364.9 577.8L365.2 572.9L365.4 578.8L365.6 580.7L365.9 582.6L366.1 577.8L366.3 570.0L366.6 578.8L366.8 578.8L367.1 580.7L367.3 574.9L367.5 567.1L367.8 579.7L368.0 582.6L368.2 575.8L368.5 575.8L368.7 582.6L369.0 577.8L369.2 573.9L369.4 581.7L369.7 539.0L369.9 576.8L370.1 578.8L370.4 583.6L370.6 582.6L370.8 580.7L371.1 570.0L371.3 581.7L371.6 581.7L371.8 568.1L372.0 542.9L372.3 579.7L372.5 576.8L372.7 578.8L373.0 558.4L373.2 581.7L373.4 579.7L373.7 583.6L373.9 580.7L374.2 572.9L374.4 572.0L374.6 575.8L374.9 578.8L375.1 580.7L375.3 576.8L375.6 572.0L375.8 567.1L376.1 548.7L376.3 572.0L376.5 578.8L376.8 569.1L377.0 579.7L377.2 576.8L377.5 566.1L377.7 574.9L377.9 572.9L378.2 579.7L378.4 576.8L378.7 579.7L378.9 571.0L379.1 576.8L379.4 560.3L379.6 569.1L379.8 574.9L380.1 564.2L380.3 570.0L380.6 569.1L380.8 567.1L381.0 540.0L381.3 555.5L381.5 566.1L381.7 567.1L382.0 567.1L382.2 565.2L382.4 556.4L382.7 573.9L382.9 568.1L383.2 561.3L383.4 564.2L383.6 570.0L383.9 573.9L384.1 576.8L384.3 579.7L384.6 578.8L384.8 578.8L385.0 579.7L385.3 582.6L385.5 583.6L385.8 584.6L386.0 570.0L386.2 581.7L386.5 579.7L386.7 572.9L386.9 586.5L387.2 580.7L387.4 573.9L387.6 572.9L387.9 583.6L388.1 581.7L388.4 569.1L388.6 577.8L388.8 577.8L389.1 577.8L389.3 585.6L389.5 582.6L389.8 587.5L390.0 584.6L390.3 585.6L390.5 583.6L390.7 587.5L391.0 577.8L391.2 585.6L391.4 582.6L391.7 572.9L391.9 585.6L392.1 581.7L392.4 575.8L392.6 577.8L392.9 583.6L393.1 570.0L393.3 579.7L393.6 577.8L393.8 579.7L394.0 576.8L394.3 580.7L394.5 584.6L394.8 582.6L395.0 583.6L395.2 585.6L395.5 582.6L395.7 577.8L395.9 566.1L396.2 581.7L396.4 570.0L396.6 580.7L396.9 586.5L397.1 583.6L397.4 582.6L397.6 579.7L397.8 581.7L398.1 582.6L398.3 581.7L398.5 582.6L398.8 579.7L399.0 573.9L399.2 549.7L399.5 575.8L399.7 581.7L400.0 583.6L400.2 580.7L400.4 582.6L400.7 572.9L400.9 580.7L401.1 569.1L401.4 571.0L401.6 572.9L401.8 566.1L402.1 573.9L402.3 574.9L402.6 576.8L402.8 576.8L403.0 579.7L403.3 579.7L403.5 573.9L403.7 580.7L404.0 578.8L404.2 577.8L404.5 569.1L404.7 580.7L404.9 581.7L405.2 582.6L405.4 584.6L405.6 587.5L405.9 587.5L406.1 586.5L406.3 586.5L406.6 587.5L406.8 587.5L407.1 586.5L407.3 568.1L407.5 585.6L407.8 584.6L408.0 586.5L408.2 577.8L408.5 578.8L408.7 582.6L408.9 585.6L409.2 586.5L409.4 585.6L409.7 582.6L409.9 587.5L410.1 576.8L410.4 574.9L410.6 570.0L410.8 565.2L411.1 572.9L411.3 576.8L411.6 577.8L411.8 576.8L412.0 521.5L412.3 572.9L412.5 580.7L412.7 577.8L413.0 578.8L413.2 567.1L413.4 579.7L413.7 583.6L413.9 567.1L414.2 574.9L414.4 573.9L414.6 578.8L414.9 572.0L415.1 562.3L415.3 587.5L415.6 586.5L415.8 582.6L416.1 586.5L416.3 585.6L416.5 577.8L416.8 587.5L417.0 582.6L417.2 580.7L417.5 585.6L417.7 585.6L417.9 559.4L418.2 579.7L418.4 582.6L418.7 582.6L418.9 578.8L419.1 548.7L419.4 579.7L419.6 577.8L419.8 582.6L420.1 581.7L420.3 582.6L420.5 573.9L420.8 581.7L421.0 582.6L421.3 576.8L421.5 580.7L421.7 576.8L422.0 584.6L422.2 585.6L422.4 587.5L422.7 590.4L422.9 585.6L423.1 578.8L423.4 574.9L423.6 583.6L423.9 584.6L424.1 586.5L424.3 581.7L424.6 583.6L424.8 571.0L425.0 579.7L425.3 575.8L425.5 583.6L425.8 574.9L426.0 581.7L426.2 577.8L426.5 580.7L426.7 570.0L426.9 578.8L427.2 580.7L427.4 585.6L427.6 575.8L427.9 587.5L428.1 572.0L428.4 559.4L428.6 544.8L428.8 562.3L429.1 567.1L429.3 571.0L429.5 566.1L429.8 572.0L430.0 576.8L430.2 570.0L430.5 558.4L430.7 569.1L431.0 540.9L431.2 568.1L431.4 572.9L431.7 582.6L431.9 577.8L432.1 585.6L432.4 585.6L432.6 559.4L432.9 583.6L433.1 583.6L433.3 575.8L433.6 582.6L433.8 581.7L434.0 579.7L434.3 576.8L434.5 578.8L434.7 585.6L435.0 573.9L435.2 580.7L435.5 583.6L435.7 572.0L435.9 576.8L436.2 560.3L436.4 579.7L436.6 581.7L436.9 576.8L437.1 584.6L437.3 579.7L437.6 584.6L437.8 583.6L438.1 584.6L438.3 574.9L438.5 586.5L438.8 559.4L439.0 585.6L439.2 576.8L439.5 575.8L439.7 571.0L440.0 577.8L440.2 579.7L440.4 572.9L440.7 581.7L440.9 570.0L441.1 574.9L441.4 585.6L441.6 583.6L441.8 587.5L442.1 584.6L442.3 582.6L442.6 584.6L442.8 583.6L443.0 575.8L443.3 577.8L443.5 585.6L443.7 582.6L444.0 584.6L444.2 585.6L444.4 575.8L444.7 584.6L444.9 579.7L445.2 583.6L445.4 577.8L445.6 568.1L445.9 562.3L446.1 566.1L446.3 582.6L446.6 577.8L446.8 549.7L447.1 534.1L447.3 572.9L447.5 579.7L447.8 579.7L448.0 583.6L448.2 568.1L448.5 568.1L448.7 572.0L448.9 562.3L449.2 571.0L449.4 572.0L449.7 563.2L449.9 576.8L450.1 583.6L450.4 584.6L450.6 549.7L450.8 579.7L451.1 581.7L451.3 577.8L451.5 585.6L451.8 571.0L452.0 581.7L452.3 580.7L452.5 581.7L452.7 566.1L453.0 581.7L453.2 580.7L453.4 576.8L453.7 575.8L453.9 578.8L454.2 510.8L454.4 576.8L454.6 556.4L454.9 576.8L455.1 581.7L455.3 564.2L455.6 580.7L455.8 577.8L456.0 564.2L456.3 576.8L456.5 558.4L456.8 581.7L457.0 536.1L457.2 576.8L457.5 577.8L457.7 583.6L457.9 570.0L458.2 580.7L458.4 579.7L458.6 582.6L458.9 545.8L459.1 583.6L459.4 584.6L459.6 584.6L459.8 576.8L460.1 566.1L460.3 577.8L460.5 568.1L460.8 579.7L461.0 574.9L461.3 584.6L461.5 564.2L461.7 577.8L462.0 579.7L462.2 584.6L462.4 578.8L462.7 580.7L462.9 565.2L463.1 579.7L463.4 572.9L463.6 577.8L463.9 583.6L464.1 581.7L464.3 572.9L464.6 571.0L464.8 575.8L465.0 577.8L465.3 562.3L465.5 577.8L465.8 554.5L466.0 572.0L466.2 570.0L466.5 579.7L466.7 581.7L466.9 576.8L467.2 578.8L467.4 567.1L467.6 577.8L467.9 576.8L468.1 591.4L468.4 588.5L468.6 588.5L468.8 590.4L469.1 590.4L469.3 508.9L469.5 586.5L469.8 574.9L470.0 580.7L470.2 585.6L470.5 580.7L470.7 583.6L471.0 588.5L471.2 585.6L471.4 587.5L471.7 582.6L471.9 586.5L472.1 586.5L472.4 586.5L472.6 580.7L472.8 579.7L473.1 583.6L473.3 585.6L473.6 578.8L473.8 585.6L474.0 582.6L474.3 587.5L474.5 588.5L474.7 574.9L475.0 587.5L475.2 586.5L475.5 586.5L475.7 586.5L475.9 582.6L476.2 572.0L476.4 571.0L476.6 574.9L476.9 576.8L477.1 574.9L477.3 575.8L477.6 562.3L477.8 572.0L478.1 561.3L478.3 560.3L478.5 572.0L478.8 550.6L479.0 570.0L479.2 572.0L479.5 572.0L479.7 570.0L479.9 567.1L480.2 571.0L480.4 565.2L480.7 583.6L480.9 585.6L481.1 580.7L481.4 583.6L481.6 583.6L481.8 584.6L482.1 586.5L482.3 587.5L482.6 587.5L482.8 569.1L483.0 588.5L483.3 583.6L483.5 572.9L483.7 585.6L484.0 584.6L484.2 583.6L484.4 568.1L484.7 577.8L484.9 584.6L485.2 559.4L485.4 582.6L485.6 560.3L485.9 575.8L486.1 581.7L486.3 579.7L486.6 580.7L486.8 562.3L487.0 571.0L487.3 564.2L487.5 577.8L487.8 580.7L488.0 575.8L488.2 573.9L488.5 584.6L488.7 583.6L488.9 577.8L489.2 585.6L489.4 572.0L489.7 572.9L489.9 580.7L490.1 583.6L490.4 579.7L490.6 577.8L490.8 566.1L491.1 582.6L491.3 576.8L491.5 576.8L491.8 572.0L492.0 585.6L492.3 581.7L492.5 583.6L492.7 576.8L493.0 582.6L493.2 578.8L493.4 579.7L493.7 574.9L493.9 576.8L494.1 580.7L494.4 584.6L494.6 582.6L494.9 581.7L495.1 588.5L495.3 583.6L495.6 573.9L495.8 575.8L496.0 583.6L496.3 573.9L496.5 508.9L496.8 578.8L497.0 575.8L497.2 582.6L497.5 572.9L497.7 574.9L497.9 578.8L498.2 559.4L498.4 574.9L498.6 575.8L498.9 467.2L499.1 574.9L499.4 439.1L499.6 570.0L499.8 579.7L500.1 577.8L500.3 557.4L500.5 571.0L500.8 567.1L501.0 567.1L501.2 580.7L501.5 578.8L501.7 572.0L502.0 578.8L502.2 545.8L502.4 580.7L502.7 573.9L502.9 569.1L503.1 574.9L503.4 563.2L503.6 580.7L503.9 557.4L504.1 581.7L504.3 560.3L504.6 583.6L504.8 581.7L505.0 578.8L505.3 582.6L505.5 583.6L505.7 579.7L506.0 574.9L506.2 566.1L506.5 583.6L506.7 571.0L506.9 569.1L507.2 574.9L507.4 567.1L507.6 572.9L507.9 583.6L508.1 578.8L508.3 569.1L508.6 576.8L508.8 580.7L509.1 584.6L509.3 586.5L509.5 572.9L509.8 583.6L510.0 561.3L510.2 579.7L510.5 584.6L510.7 582.6L511.0 585.6L511.2 557.4L511.4 512.8L511.7 584.6L511.9 586.5L512.1 580.7L512.4 575.8L512.6 588.5L512.8 584.6L513.1 573.9L513.3 585.6L513.6 582.6L513.8 574.9L514.0 572.9L514.3 590.4L514.5 589.4L514.7 578.8L515.0 579.7L515.2 456.5L515.5 629.2L515.7 575.8L515.9 584.6L516.2 556.4L516.4 581.7L516.6 570.0L516.9 573.9L517.1 578.8L517.3 570.0L517.6 577.8L517.8 581.7L518.1 585.6L518.3 584.6L518.5 586.5L518.8 578.8L519.0 585.6L519.2 587.5L519.5 587.5L519.7 551.6L519.9 585.6L520.2 586.5L520.4 577.8L520.7 587.5L520.9 577.8L521.1 587.5L521.4 569.1L521.6 587.5L521.8 589.4L522.1 587.5L522.3 585.6L522.5 587.5L522.8 582.6L523.0 581.7L523.3 580.7L523.5 572.9L523.7 555.5L524.0 586.5L524.2 583.6L524.4 588.5L524.7 577.8L524.9 579.7L525.2 502.1L525.4 586.5L525.6 589.4L525.9 589.4L526.1 585.6L526.3 588.5L526.6 588.5L526.8 585.6L527.0 581.7L527.3 588.5L527.5 581.7L527.8 584.6L528.0 584.6L528.2 572.0L528.5 577.8L528.7 577.8L528.9 584.6L529.2 572.0L529.4 585.6L529.6 583.6L529.9 585.6L530.1 561.3L530.4 586.5L530.6 572.0L530.8 581.7L531.1 589.4L531.3 589.4L531.5 580.7L531.8 587.5L532.0 575.8L532.3 588.5L532.5 577.8L532.7 586.5L533.0 583.6L533.2 572.9L533.4 586.5L533.7 590.4L533.9 593.3L534.1 582.6L534.4 579.7L534.6 579.7L534.9 579.7L535.1 589.4L535.3 572.9L535.6 581.7L535.8 589.4L536.0 575.8L536.3 578.8L536.5 579.7L536.8 563.2L537.0 563.2L537.2 558.4L537.5 581.7L537.7 581.7L537.9 571.0L538.2 578.8L538.4 567.1L538.6 574.9L538.9 572.9L539.1 566.1L539.4 510.8L539.6 568.1L539.8 557.4L540.1 571.0L540.3 574.9L540.5 584.6L540.8 576.8L541.0 583.6L541.2 583.6L541.5 578.8L541.7 572.0L542.0 587.5L542.2 575.8L542.4 587.5L542.7 573.9L542.9 584.6L543.1 589.4L543.4 552.6L543.6 589.4L543.8 589.4L544.1 586.5L544.3 585.6L544.6 586.5L544.8 582.6L545.0 588.5L545.3 587.5L545.5 586.5L545.7 588.5L546.0 572.9L546.2 578.8L546.5 577.8L546.7 579.7L546.9 580.7L547.2 566.1L547.4 573.9L547.6 573.9L547.9 575.8L548.1 570.0L548.3 582.6L548.6 583.6L548.8 580.7L549.1 568.1L549.3 584.6L549.5 573.9L549.8 584.6L550.0 583.6L550.2 585.6L550.5 586.5L550.7 585.6L551.0 584.6L551.2 582.6L551.4 583.6L551.7 587.5L551.9 583.6L552.1 587.5L552.4 587.5L552.6 588.5L552.8 591.4L553.1 592.3L553.3 585.6L553.6 586.5L553.8 584.6L554.0 570.0L554.3 585.6L554.5 566.1L554.7 588.5L555.0 586.5L555.2 584.6L555.4 587.5L555.7 589.4L555.9 582.6L556.2 586.5L556.4 584.6L556.6 581.7L556.9 582.6L557.1 572.9L557.3 587.5L557.6 581.7L557.8 583.6L558.0 578.8L558.3 579.7L558.5 591.4L558.8 585.6L559.0 585.6L559.2 583.6L559.5 576.8L559.7 584.6L559.9 538.0L560.2 574.9L560.4 580.7L560.7 573.9L560.9 578.8L561.1 584.6L561.4 573.9L561.6 577.8L561.8 576.8L562.1 579.7L562.3 584.6L562.5 579.7L562.8 581.7L563.0 570.0L563.3 585.6L563.5 588.5L563.7 581.7L564.0 589.4L564.2 575.8L564.4 585.6L564.7 578.8L564.9 588.5L565.1 574.9L565.4 588.5L565.6 588.5L565.9 585.6L566.1 585.6L566.3 586.5L566.6 584.6L566.8 590.4L567.0 540.9L567.3 572.0L567.5 580.7L567.8 586.5L568.0 574.9L568.2 585.6L568.5 584.6L568.7 578.8L568.9 582.6L569.2 586.5L569.4 588.5L569.6 588.5L569.9 590.4L570.1 584.6L570.4 584.6L570.6 591.4L570.8 591.4L571.1 590.4L571.3 589.4L571.5 587.5L571.8 591.4L572.0 590.4L572.2 592.3L572.5 589.4L572.7 589.4L573.0 584.6L573.2 589.4L573.4 576.8L573.7 591.4L573.9 580.7L574.1 588.5L574.4 588.5L574.6 577.8L574.9 587.5L575.1 581.7L575.3 585.6L575.6 588.5L575.8 582.6L576.0 587.5L576.3 587.5L576.5 582.6L576.7 590.4L577.0 591.4L577.2 588.5L577.5 590.4L577.7 577.8L577.9 584.6L578.2 583.6L578.4 584.6L578.6 582.6L578.9 578.8L579.1 561.3L579.3 579.7L579.6 573.9L579.8 576.8L580.1 583.6L580.3 584.6L580.5 582.6L580.8 580.7L581.0 581.7L581.2 569.1L581.5 580.7L581.7 583.6L582.0 581.7L582.2 499.2L582.4 572.9L582.7 576.8L582.9 584.6L583.1 584.6L583.4 586.5L583.6 586.5L583.8 584.6L584.1 587.5L584.3 582.6L584.6 588.5L584.8 588.5L585.0 581.7L585.3 581.7L585.5 578.8L585.7 585.6L586.0 583.6L586.2 578.8L586.5 576.8L586.7 585.6L586.9 585.6L587.2 582.6L587.4 578.8L587.6 583.6L587.9 583.6L588.1 580.7L588.3 543.8L588.6 587.5L588.8 583.6L589.1 582.6L589.3 585.6L589.5 587.5L589.8 554.5L590.0 588.5L590.2 581.7L590.5 581.7L590.7 583.6L590.9 570.0L591.2 577.8L591.4 575.8L591.7 574.9L591.9 584.6L592.1 570.0L592.4 579.7L592.6 583.6L592.8 574.9L593.1 580.7L593.3 575.8L593.5 581.7L593.8 579.7L594.0 572.0L594.3 566.1L594.5 574.9L594.7 572.0L595.0 579.7L595.2 570.0L595.4 580.7L595.7 585.6L595.9 593.3L596.2 591.4L596.4 588.5L596.6 589.4L596.9 588.5L597.1 585.6L597.3 586.5L597.6 590.4L597.8 588.5L598.0 592.3L598.3 570.0L598.5 592.3L598.8 579.7L599.0 587.5L599.2 573.9L599.5 572.9L599.7 563.2L599.9 588.5L600.2 589.4L600.4 589.4L600.6 589.4L600.9 586.5L601.1 587.5L601.4 582.6L601.6 587.5L601.8 576.8L602.1 573.9L602.3 588.5L602.5 569.1L602.8 581.7L603.0 584.6L603.3 581.7L603.5 580.7L603.7 568.1L604.0 579.7L604.2 586.5L604.4 588.5L604.7 582.6L604.9 589.4L605.1 579.7L605.4 567.1L605.6 586.5L605.9 585.6L606.1 587.5L606.3 571.0L606.6 586.5L606.8 544.8L607.0 586.5L607.3 581.7L607.5 588.5L607.8 587.5L608.0 585.6L608.2 576.8L608.5 584.6L608.7 584.6L608.9 577.8L609.2 586.5L609.4 580.7L609.6 577.8L609.9 572.0L610.1 562.3L610.4 578.8L610.6 575.8L610.8 575.8L611.1 583.6L611.3 578.8L611.5 565.2L611.8 571.0L612.0 578.8L612.2 576.8L612.5 576.8L612.7 572.9L613.0 577.8L613.2 579.7L613.4 564.2L613.7 572.0L613.9 572.0L614.1 570.0L614.4 576.8L614.6 568.1L614.9 577.8L615.1 555.5L615.3 586.5L615.6 560.3L615.8 583.6L616.0 584.6L616.3 585.6L616.5 580.7L616.7 536.1L617.0 582.6L617.2 568.1L617.5 572.0L617.7 573.9L617.9 576.8L618.2 572.0L618.4 572.9L618.6 566.1L618.9 575.8L619.1 565.2L619.3 573.9L619.6 587.5L619.8 584.6L620.1 584.6L620.3 586.5L620.5 583.6L620.8 585.6L621.0 582.6L621.2 562.3L621.5 572.0L621.7 589.4L621.9 582.6L622.2 587.5L622.4 567.1L622.7 586.5L622.9 574.9L623.1 584.6L623.4 579.7L623.6 588.5L623.8 581.7L624.1 579.7L624.3 578.8L624.6 581.7L624.8 581.7L625.0 588.5L625.3 574.9L625.5 585.6L625.7 562.3L626.0 587.5L626.2 589.4L626.4 582.6L626.7 582.6L626.9 579.7L627.2 589.4L627.4 576.8L627.6 580.7L627.9 577.8L628.1 583.6L628.3 580.7L628.6 575.8L628.8 573.9L629.0 576.8L629.3 581.7L629.5 591.4L629.8 584.6L630.0 590.4L630.2 585.6L630.5 587.5L630.7 581.7L630.9 589.4L631.2 588.5L631.4 587.5L631.7 583.6L631.9 587.5L632.1 585.6L632.4 583.6L632.6 581.7L632.8 592.3L633.1 589.4L633.3 588.5L633.5 566.1L633.8 588.5L634.0 588.5L634.3 590.4L634.5 582.6L634.7 590.4L635.0 569.1L635.2 564.2L635.4 570.0L635.7 567.1L635.9 538.0L636.1 563.2L636.4 572.0L636.6 573.9L636.9 579.7L637.1 586.5L637.3 558.4L637.6 580.7L637.8 586.5L638.0 549.7L638.3 586.5L638.5 585.6L638.8 586.5L639.0 582.6L639.2 578.8L639.5 514.7L639.7 580.7L639.9 582.6L640.2 588.5L640.4 584.6L640.6 582.6L640.9 590.4L641.1 583.6L641.4 590.4L641.6 590.4L641.8 541.9L642.1 563.2L642.3 558.4L642.5 580.7L642.8 590.4L643.0 584.6L643.2 582.6L643.5 579.7L643.7 587.5L644.0 572.0L644.2 583.6L644.4 574.9L644.7 572.0L644.9 543.8L645.1 586.5L645.4 580.7L645.6 580.7L645.9 578.8L646.1 585.6L646.3 587.5L646.6 584.6L646.8 577.8L647.0 561.3L647.3 568.1L647.5 590.4L647.7 591.4L648.0 578.8L648.2 582.6L648.5 585.6L648.7 594.3L648.9 585.6L649.2 587.5L649.4 587.5L649.6 591.4L649.9 591.4L650.1 589.4L650.4 593.3L650.6 580.7L650.8 591.4L651.1 576.8L651.3 584.6L651.5 580.7L651.8 560.3L652.0 581.7L652.2 584.6L652.5 577.8L652.7 589.4L653.0 585.6L653.2 585.6L653.4 589.4L653.7 560.3L653.9 538.0L654.1 591.4L654.4 593.3L654.6 591.4L654.8 580.7L655.1 593.3L655.3 590.4L655.6 586.5L655.8 591.4L656.0 582.6L656.3 583.6L656.5 580.7L656.7 595.3L657.0 594.3L657.2 583.6L657.4 572.9L657.7 575.8L657.9 579.7L658.2 580.7L658.4 586.5L658.6 574.9L658.9 593.3L659.1 594.3L659.3 576.8L659.6 590.4L659.8 585.6L660.1 592.3L660.3 592.3L660.5 579.7L660.8 589.4L661.0 583.6L661.2 589.4L661.5 567.1L661.7 582.6L661.9 587.5L662.2 590.4L662.4 579.7L662.7 589.4L662.9 591.4L663.1 543.8L663.4 587.5L663.6 583.6L663.8 556.4L664.1 587.5L664.3 578.8L664.5 586.5L664.8 578.8L665.0 585.6L665.3 540.0L665.5 591.4L665.7 574.9L666.0 587.5L666.2 584.6L666.4 576.8L666.7 583.6L666.9 585.6L667.2 586.5L667.4 527.3L667.6 587.5L667.9 573.9L668.1 591.4L668.3 572.9L668.6 590.4L668.8 592.3L669.0 586.5L669.3 573.9L669.5 591.4L669.8 577.8L670.0 584.6L670.2 551.6L670.5 587.5L670.7 576.8L670.9 587.5L671.2 578.8L671.4 585.6L671.6 577.8L671.9 585.6L672.1 585.6L672.4 538.0L672.6 590.4L672.8 588.5L673.1 581.7L673.3 584.6L673.5 582.6L673.8 582.6L674.0 576.8L674.3 579.7L674.5 589.4L674.7 585.6L675.0 572.9L675.2 583.6L675.4 579.7L675.7 574.9L675.9 577.8L676.1 568.1L676.4 570.0L676.6 587.5L676.9 581.7L677.1 578.8L677.3 563.2L677.6 587.5L677.8 586.5L678.0 593.3L678.3 593.3L678.5 593.3L678.8 591.4L679.0 586.5L679.2 582.6L679.5 586.5L679.7 581.7L679.9 590.4L680.2 581.7L680.4 589.4L680.6 581.7L680.9 583.6L681.1 588.5L681.4 569.1L681.6 584.6L681.8 585.6L682.1 581.7L682.3 579.7L682.5 574.9L682.8 581.7L683.0 568.1L683.2 556.4L683.5 556.4L683.7 580.7L684.0 540.0L684.2 582.6L684.4 574.9L684.7 574.9L684.9 576.8L685.1 572.0L685.4 590.4L685.6 593.3L685.9 590.4L686.1 565.2L686.3 590.4L686.6 585.6L686.8 590.4L687.0 581.7L687.3 572.9L687.5 571.0L687.7 592.3L688.0 592.3L688.2 591.4L688.5 585.6L688.7 584.6L688.9 586.5L689.2 593.3L689.4 592.3L689.6 561.3L689.9 568.1L690.1 576.8L690.3 572.0L690.6 586.5L690.8 581.7L691.1 585.6L691.3 586.5L691.5 589.4L691.8 588.5L692.0 583.6L692.2 590.4L692.5 581.7L692.7 587.5L692.9 581.7L693.2 577.8L693.4 575.8L693.7 585.6L693.9 578.8L694.1 583.6L694.4 575.8L694.6 581.7L694.8 579.7L695.1 587.5L695.3 582.6L695.6 510.8L695.8 586.5L696.0 579.7L696.3 579.7L696.5 583.6L696.7 572.9L697.0 581.7L697.2 582.6L697.4 586.5L697.7 571.0L697.9 588.5L698.2 585.6L698.4 582.6L698.6 572.9L698.9 571.0L699.1 533.2L699.3 560.3L699.6 581.7L699.8 571.0L700.0 585.6L700.3 588.5L700.5 589.4L700.8 572.0L701.0 577.8L701.2 587.5L701.5 587.5L701.7 572.0L701.9 583.6L702.2 588.5L702.4 577.8L702.7 588.5L702.9 575.8L703.1 585.6L703.4 589.4L703.6 540.9L703.8 566.1L704.1 584.6L704.3 587.5L704.5 575.8L704.8 582.6L705.0 587.5L705.3 580.7L705.5 585.6L705.7 580.7L706.0 582.6L706.2 568.1L706.4 586.5L706.7 584.6L706.9 557.4L707.1 588.5L707.4 587.5L707.6 576.8L707.9 570.0L708.1 568.1L708.3 497.3L708.6 570.0L708.8 566.1L709.0 572.0L709.3 567.1L709.5 572.9L709.8 570.0L710.0 535.1L710.2 572.0L710.5 560.3L710.7 566.1L710.9 563.2L711.2 572.9L711.4 575.8L711.6 568.1L711.9 572.0L712.1 579.7L712.4 579.7L712.6 584.6L712.8 584.6L713.1 547.7L713.3 585.6L713.5 587.5L713.8 578.8L714.0 557.4L714.2 578.8L714.5 562.3L714.7 559.4L715.0 586.5L715.2 576.8L715.4 590.4L715.7 587.5L715.9 583.6L716.1 572.9L716.4 586.5L716.6 572.0L716.9 583.6L717.1 576.8L717.3 587.5L717.6 587.5L717.8 581.7L718.0 575.8L718.3 582.6L718.5 586.5L718.7 587.5L719.0 586.5L719.2 571.0L719.5 554.5L719.7 579.7L719.9 587.5L720.2 588.5L720.4 566.1L720.6 590.4L720.9 567.1L721.1 586.5L721.4 579.7L721.6 585.6L721.8 577.8L722.1 582.6L722.3 580.7L722.5 573.9L722.8 584.6L723.0 582.6L723.2 510.8L723.5 572.9L723.7 580.7L724.0 579.7L724.2 582.6L724.4 575.8L724.7 582.6L724.9 568.1L725.1 581.7L725.4 579.7L725.6 576.8L725.8 546.7L726.1 567.1L726.3 559.4L726.6 571.0L726.8 584.6L727.0 584.6L727.3 587.5L727.5 589.4L727.7 567.1L728.0 588.5L728.2 574.9L728.4 584.6L728.7 581.7L728.9 585.6L729.2 583.6L729.4 584.6L729.6 571.0L729.9 572.0L730.1 582.6L730.3 581.7L730.6 556.4L730.8 579.7L731.1 576.8L731.3 584.6L731.5 569.1L731.8 560.3L732.0 571.0L732.2 540.9L732.5 536.1L732.7 557.4L732.9 574.9L733.2 572.0L733.4 569.1L733.7 572.9L733.9 562.3L734.1 564.2L734.4 577.8L734.6 579.7L734.8 572.0L735.1 561.3L735.3 573.9L735.5 587.5L735.8 589.4L736.0 573.9L736.3 585.6L736.5 516.7L736.7 564.2L737.0 590.4L737.2 590.4L737.4 534.1L737.7 582.6L737.9 540.9L738.2 585.6L738.4 577.8L738.6 580.7L738.9 578.8L739.1 585.6L739.3 582.6L739.6 559.4L739.8 577.8L740.0 578.8L740.3 577.8L740.5 563.2L740.8 581.7L741.0 560.3L741.2 582.6L741.5 576.8L741.7 573.9L741.9 575.8L742.2 560.3L742.4 585.6L742.6 583.6L742.9 552.6L743.1 587.5L743.4 547.7L743.6 568.1L743.8 550.6L744.1 583.6L744.3 563.2L744.5 578.8L744.8 579.7L745.0 578.8L745.3 590.4L745.5 581.7L745.7 568.1L746.0 584.6L746.2 582.6L746.4 574.9L746.7 587.5L746.9 582.6L747.1 584.6L747.4 579.7L747.6 588.5L747.9 581.7L748.1 577.8L748.3 571.0L748.6 583.6L748.8 575.8L749.0 554.5L749.3 547.7L749.5 579.7L749.8 559.4L750.0 572.0L750.2 572.9L750.5 572.0L750.7 572.0L750.9 563.2L751.2 567.1L751.4 572.0L751.6 573.9L751.9 569.1L752.1 569.1L752.4 534.1L752.6 514.7L752.8 588.5L753.1 586.5L753.3 589.4L753.5 573.9L753.8 586.5L754.0 589.4L754.2 575.8L754.5 576.8L754.7 586.5L755.0 536.1L755.2 551.6L755.4 578.8L755.7 573.9L755.9 568.1L756.1 573.9L756.4 567.1L756.6 577.8L756.9 573.9L757.1 552.6L757.3 564.2L757.6 544.8L757.8 575.8L758.0 570.0L758.3 587.5L758.5 579.7L758.7 585.6L759.0 571.0L759.2 565.2L759.5 576.8L759.7 586.5L759.9 579.7L760.2 582.6L760.4 581.7L760.6 573.9L760.9 552.6L761.1 540.9L761.3 580.7L761.6 566.1L761.8 546.7L762.1 583.6L762.3 572.0L762.5 573.9L762.8 587.5L763.0 559.4L763.2 590.4L763.5 572.9L763.7 576.8L763.9 579.7L764.2 578.8L764.4 583.6L764.7 581.7L764.9 581.7L765.1 585.6L765.4 512.8L765.6 578.8L765.8 572.9L766.1 504.1L766.3 559.4L766.6 586.5L766.8 568.1L767.0 577.8L767.3 586.5L767.5 586.5L767.7 584.6L768.0 586.5L768.2 571.0L768.4 585.6L768.7 577.8L768.9 583.6L769.2 586.5L769.4 549.7L769.6 585.6L769.9 539.0L770.1 584.6L770.3 586.5L770.6 584.6L770.8 580.7L771.0 583.6L771.3 588.5L771.5 574.9L771.8 543.8L772.0 560.3L772.2 553.5L772.5 582.6L772.7 540.0L772.9 572.9L773.2 585.6L773.4 583.6L773.7 572.0L773.9 564.2L774.1 577.8L774.4 581.7L774.6 574.9L774.8 583.6L775.1 576.8L775.3 568.1L775.5 553.5L775.8 569.1L776.0 574.9L776.3 520.5L776.5 570.0L776.7 563.2L777.0 566.1L777.2 572.9L777.4 574.9L777.7 572.0L777.9 560.3L778.1 573.9L778.4 564.2L778.6 567.1L778.9 553.5L779.1 557.4L779.3 567.1L779.6 583.6L779.8 576.8L780.0 578.8L780.3 519.6L780.5 584.6L780.8 571.0L781.0 566.1L781.2 574.9L781.5 583.6L781.7 583.6L781.9 577.8L782.2 580.7L782.4 570.0L782.6 584.6L782.9 579.7L783.1 575.8L783.4 583.6L783.6 576.8L783.8 539.0L784.1 584.6L784.3 560.3L784.5 586.5L784.8 574.9L785.0 580.7L785.2 580.7L785.5 578.8L785.7 577.8L786.0 576.8L786.2 565.2L786.4 586.5L786.7 581.7L786.9 576.8L787.1 584.6L787.4 583.6L787.6 583.6L787.9 585.6L788.1 586.5L788.3 579.7L788.6 582.6L788.8 580.7L789.0 584.6L789.3 565.2L789.5 574.9L789.7 553.5L790.0 580.7L790.2 581.7L790.5 569.1L790.7 573.9L790.9 587.5L791.2 583.6L791.4 585.6L791.6 580.7L791.9 569.1L792.1 587.5L792.3 579.7L792.6 583.6L792.8 578.8L793.1 585.6L793.3 585.6L793.5 585.6L793.8 578.8L794.0 567.1L794.2 584.6L794.5 567.1L794.7 579.7L795.0 585.6L795.2 583.6L795.4 583.6L795.7 576.8L795.9 582.6L796.1 561.3L796.4 571.0L796.6 545.8L796.8 572.0L797.1 578.8L797.3 574.9L797.6 567.1L797.8 582.6L798.0 579.7L798.3 578.8L798.5 583.6L798.7 579.7L799.0 552.6L799.2 580.7L799.4 580.7L799.7 580.7L799.9 577.8L800.2 576.8L800.4 578.8L800.6 545.8L800.9 572.0L801.1 583.6L801.3 579.7L801.6 571.0L801.8 576.8L802.1 583.6L802.3 564.2L802.5 577.8L802.8 563.2L803.0 580.7L803.2 564.2L803.5 581.7L803.7 549.7L803.9 580.7L804.2 568.1L804.4 569.1L804.7 584.6L804.9 584.6L805.1 581.7L805.4 581.7L805.6 569.1L805.8 577.8L806.1 584.6L806.3 585.6L806.5 578.8L806.8 587.5L807.0 582.6L807.3 587.5L807.5 584.6L807.7 569.1L808.0 580.7L808.2 501.1L808.4 581.7L808.7 585.6L808.9 581.7L809.2 581.7L809.4 561.3L809.6 584.6L809.9 579.7L810.1 572.9L810.3 588.5L810.6 586.5L810.8 584.6L811.0 587.5L811.3 582.6L811.5 584.6L811.8 541.9L812.0 578.8L812.2 578.8L812.5 576.8L812.7 573.9L812.9 578.8L813.2 573.9L813.4 583.6L813.6 580.7L813.9 580.7L814.1 574.9L814.4 579.7L814.6 571.0L814.8 568.1L815.1 559.4L815.3 580.7L815.5 580.7L815.8 576.8L816.0 568.1L816.3 571.0L816.5 573.9L816.7 579.7L817.0 566.1L817.2 566.1L817.4 577.8L817.7 584.6L817.9 578.8L818.1 585.6L818.4 550.6L818.6 587.5L818.9 583.6L819.1 539.0L819.3 567.1L819.6 582.6L819.8 582.6L820.0 574.9L820.3 577.8L820.5 581.7L820.8 570.0L821.0 568.1L821.2 581.7L821.5 556.4L821.7 566.1L821.9 567.1L822.2 570.0L822.4 521.5L822.6 565.2L822.9 577.8L823.1 514.7L823.4 564.2L823.6 578.8L823.8 569.1L824.1 564.2L824.3 561.3L824.5 569.1L824.8 566.1L825.0 568.1L825.2 542.9L825.5 542.9L825.7 568.1L826.0 576.8L826.2 578.8L826.4 547.7L826.7 578.8L826.9 581.7L827.1 579.7L827.4 587.5L827.6 582.6L827.8 577.8L828.1 588.5L828.3 564.2L828.6 536.1L828.8 589.4L829.0 579.7L829.3 589.4L829.5 578.8L829.7 581.7L830.0 589.4L830.2 574.9L830.5 589.4L830.7 542.9L830.9 583.6L831.2 586.5L831.4 586.5L831.6 577.8L831.9 568.1L832.1 584.6L832.3 550.6L832.6 584.6L832.8 571.0L833.1 586.5L833.3 581.7L833.5 580.7L833.8 587.5L834.0 567.1L834.2 584.6L834.5 589.4L834.7 588.5L834.9 590.4L835.2 588.5L835.4 578.8L835.7 554.5L835.9 587.5L836.1 547.7L836.4 571.0L836.6 578.8L836.8 580.7L837.1 565.2L837.3 498.2L837.6 564.2L837.8 578.8L838.0 570.0L838.3 582.6L838.5 546.7L838.7 580.7L839.0 564.2L839.2 573.9L839.4 581.7L839.7 581.7L839.9 581.7L840.2 581.7L840.4 576.8L840.6 580.7L840.9 583.6L841.1 584.6L841.3 580.7L841.6 577.8L841.8 577.8L842.0 578.8L842.3 582.6L842.5 586.5L842.8 587.5L843.0 591.4L843.2 580.7L843.5 584.6L843.7 579.7L843.9 588.5L844.2 578.8L844.4 573.9L844.7 582.6L844.9 581.7L845.1 568.1L845.4 581.7L845.6 578.8L845.8 580.7L846.1 584.6L846.3 582.6L846.5 556.4L846.8 584.6L847.0 571.0L847.3 581.7L847.5 579.7L847.7 581.7L848.0 579.7L848.2 578.8L848.4 588.5L848.7 586.5L848.9 573.9L849.1 583.6L849.4 572.9L849.6 570.0L849.9 556.4L850.1 572.9L850.3 584.6L850.6 559.4L850.8 584.6L851.0 585.6L851.3 581.7L851.5 588.5L851.8 588.5L852.0 575.8L852.2 589.4L852.5 588.5L852.7 590.4L852.9 583.6L853.2 589.4L853.4 587.5L853.6 580.7L853.9 585.6L854.1 547.7L854.4 585.6L854.6 583.6L854.8 575.8L855.1 582.6L855.3 562.3L855.5 581.7L855.8 577.8L856.0 586.5L856.2 541.9L856.5 572.9L856.7 579.7L857.0 574.9L857.2 577.8L857.4 582.6L857.7 542.9L857.9 573.9L858.1 587.5L858.4 581.7L858.6 593.3L858.9 555.5L859.1 582.6L859.3 580.7L859.6 591.4L859.8 593.3L860.0 584.6L860.3 577.8L860.5 584.6L860.7 593.3L861.0 592.3L861.2 590.4L861.5 583.6L861.7 580.7L861.9 590.4L862.2 590.4L862.4 589.4L862.6 587.5L862.9 585.6L863.1 591.4L863.3 578.8L863.6 585.6L863.8 567.1L864.1 583.6L864.3 582.6L864.5 586.5L864.8 569.1L865.0 574.9L865.2 580.7L865.5 553.5L865.7 582.6L866.0 591.4L866.2 579.7L866.4 586.5L866.7 579.7L866.9 590.4L867.1 526.4L867.4 557.4L867.6 583.6L867.8 569.1L868.1 586.5L868.3 586.5L868.6 586.5L868.8 590.4L869.0 588.5L869.3 590.4L869.5 590.4L869.7 580.7L870.0 585.6L870.2 585.6L870.4 585.6L870.7 585.6L870.9 585.6L871.2 588.5L871.4 592.3L871.6 585.6L871.9 578.8L872.1 572.0L872.3 583.6L872.6 571.0L872.8 560.3L873.1 575.8L873.3 583.6L873.5 576.8L873.8 587.5L874.0 583.6L874.2 582.6L874.5 585.6L874.7 585.6L874.9 581.7L875.2 576.8L875.4 581.7L875.7 586.5L875.9 588.5L876.1 582.6L876.4 585.6L876.6 587.5L876.8 586.5L877.1 587.5L877.3 561.3L877.5 585.6L877.8 576.8L878.0 577.8L878.3 518.6L878.5 586.5L878.7 575.8L879.0 577.8L879.2 581.7L879.4 570.0L879.7 586.5L879.9 589.4L880.2 587.5L880.4 585.6L880.6 569.1L880.9 586.5L881.1 577.8L881.3 585.6L881.6 583.6L881.8 575.8L882.0 583.6L882.3 564.2L882.5 584.6L882.8 572.9L883.0 585.6L883.2 583.6L883.5 577.8L883.7 585.6L883.9 580.7L884.2 585.6L884.4 583.6L884.6 581.7L884.9 583.6L885.1 583.6L885.4 582.6L885.6 588.5L885.8 587.5L886.1 590.4L886.3 590.4L886.5 580.7L886.8 540.0L887.0 557.4L887.3 588.5L887.5 540.0L887.7 584.6L888.0 571.0L888.2 583.6L888.4 572.0L888.7 580.7L888.9 572.9L889.1 568.1L889.4 581.7L889.6 583.6L889.9 574.9L890.1 581.7L890.3 563.2L890.6 588.5L890.8 572.0L891.0 580.7L891.3 588.5L891.5 563.2L891.8 576.8L892.0 578.8L892.2 498.2L892.5 579.7L892.7 579.7L892.9 585.6L893.2 587.5L893.4 584.6L893.6 578.8L893.9 580.7L894.1 586.5L894.4 584.6L894.6 580.7L894.8 569.1L895.1 584.6L895.3 572.0L895.5 579.7L895.8 564.2L896.0 575.8L896.2 573.9L896.5 579.7L896.7 583.6L897.0 582.6L897.2 564.2L897.4 586.5L897.7 587.5L897.9 587.5L898.1 587.5L898.4 579.7L898.6 583.6L898.8 582.6L899.1 575.8L899.3 583.6L899.6 580.7L899.8 567.1L900.0 572.9L900.3 577.8L900.5 577.8L900.7 579.7L901.0 570.0L901.2 583.6L901.5 578.8L901.7 577.8L901.9 579.7L902.2 584.6L902.4 585.6L902.6 580.7L902.9 586.5L903.1 587.5L903.3 587.5L903.6 558.4L903.8 545.8L904.1 569.1L904.3 541.9L904.5 552.6L904.8 562.3L905.0 569.1L905.2 558.4L905.5 568.1L905.7 572.0L905.9 569.1L906.2 553.5L906.4 572.0L906.7 571.0L906.9 565.2L907.1 565.2L907.4 575.8L907.6 564.2L907.8 577.8L908.1 572.0L908.3 580.7L908.6 580.7L908.8 586.5L909.0 583.6L909.3 589.4L909.5 548.7L909.7 583.6L910.0 583.6L910.2 582.6L910.4 585.6L910.7 581.7L910.9 563.2L911.2 584.6L911.4 572.9L911.6 585.6L911.9 585.6L912.1 564.2L912.3 572.9L912.6 552.6L912.8 583.6L913.0 584.6L913.3 579.7L913.5 572.0L913.8 581.7L914.0 546.7L914.2 574.9L914.5 571.0L914.7 583.6L914.9 586.5L915.2 578.8L915.4 568.1L915.7 586.5L915.9 582.6L916.1 574.9L916.4 586.5L916.6 587.5L916.8 576.8L917.1 585.6L917.3 584.6L917.5 577.8L917.8 586.5L918.0 575.8L918.3 538.0L918.5 565.2L918.7 567.1L919.0 565.2L919.2 582.6L919.4 573.9L919.7 580.7L919.9 580.7L920.1 585.6L920.4 572.9L920.6 578.8L920.9 586.5L921.1 574.9L921.3 485.6L921.6 581.7L921.8 572.9L922.0 562.3L922.3 581.7L922.5 572.9L922.8 580.7L923.0 568.1L923.2 538.0L923.5 589.4L923.7 581.7L923.9 589.4L924.2 572.0L924.4 581.7L924.6 588.5L924.9 586.5L925.1 571.0L925.4 586.5L925.6 580.7L925.8 572.9L926.1 578.8L926.3 583.6L926.5 583.6L926.8 581.7L927.0 543.8L927.2 588.5L927.5 586.5L927.7 578.8L928.0 586.5L928.2 583.6L928.4 587.5L928.7 582.6L928.9 584.6L929.1 573.9L929.4 580.7L929.6 585.6L929.9 582.6L930.1 553.5L930.3 587.5L930.6 583.6L930.8 583.6L931.0 586.5L931.3 586.5L931.5 586.5L931.7 589.4L932.0 572.9L932.2 590.4L932.5 577.8L932.7 588.5L932.9 578.8L933.2 588.5L933.4 586.5L933.6 589.4L933.9 584.6L934.1 582.6L934.3 480.8L934.6 589.4L934.8 476.9L935.1 586.5L935.3 537.0L935.5 586.5L935.8 574.9L936.0 589.4L936.2 588.5L936.5 590.4L936.7 572.0L937.0 589.4L937.2 585.6L937.4 591.4L937.7 590.4L937.9 587.5L938.1 565.2L938.4 558.4L938.6 573.9L938.8 582.6L939.1 587.5L939.3 562.3L939.6 588.5L939.8 586.5L940.0 583.6L940.3 582.6L940.5 582.6L940.7 575.8L941.0 577.8L941.2 579.7L941.4 573.9L941.7 573.9L941.9 583.6L942.2 580.7L942.4 582.6L942.6 565.2L942.9 579.7L943.1 564.2L943.3 564.2L943.6 569.1L943.8 590.4L944.1 584.6L944.3 576.8L944.5 585.6L944.8 574.9" stroke="#6cff0a" stroke-width="1.05" stroke-linejoin="round" fill="none"/><path d="M93.2 142.6V629.5" stroke="#d6d66a" stroke-width="1.4"/><path d="M94.2 346.9V531.2" stroke="#b4ec30" stroke-width="2"/><path d="M98 486 l3 -5 l3 5 M99 484 h4" stroke="#e8e840" stroke-width="1" fill="none"/></g><path d="M86.5 142.5H91.5M86.5 166.5H91.5M86.5 191.5H91.5M86.5 215.5H91.5M86.5 239.5H91.5M86.5 263.5H91.5M86.5 288.5H91.5M86.5 312.5H91.5M86.5 336.5H91.5M86.5 360.5H91.5M86.5 385.5H91.5M86.5 409.5H91.5M86.5 433.5H91.5M86.5 457.5H91.5M86.5 482.5H91.5M86.5 506.5H91.5M86.5 530.5H91.5M86.5 554.5H91.5M86.5 579.5H91.5M86.5 603.5H91.5M86.5 628.5H91.5M93.5 631.6V636.8M248.5 631.6V636.8M418.5 631.6V636.8M588.5 631.6V636.8M759.5 631.6V636.8M929.5 631.6V636.8M944.5 631.6V636.8" stroke="#1a1a1a" stroke-width="1" fill="none"/></svg>
</body></html>
